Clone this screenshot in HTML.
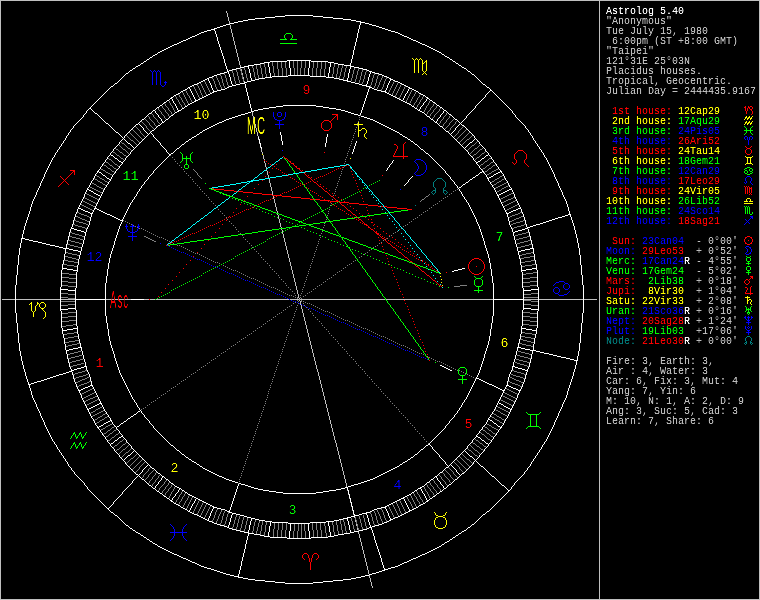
<!DOCTYPE html>
<html lang="en"><head><meta charset="utf-8"><title>Astrolog 5.40 - Anonymous</title>
<style>
html,body{margin:0;padding:0;background:#000;overflow:hidden}
#w{position:relative;width:760px;height:600px;background:#000;overflow:hidden;will-change:transform;font-family:"Liberation Mono",monospace;font-size:10px;line-height:10px;color:#bfbfbf}
#w svg{position:absolute;left:0;top:0}
#tx,#tn{position:absolute;left:0;top:0;width:760px;height:600px}
.t{position:absolute;white-space:pre;height:10px;margin:0}
.n{position:absolute;white-space:pre;font-size:13.33px;line-height:14px;height:14px;text-align:center;width:40px}
.g{position:absolute;white-space:pre;font-family:"Liberation Sans",sans-serif;font-size:24px;line-height:24px;height:24px;width:60px;margin:-11px 0 0 -30px;text-align:center;letter-spacing:2.4px;text-indent:2.4px;transform:scale(0.40,1)}
.c0{color:#000000}.c1{color:#7f0000}.c2{color:#007f00}.c3{color:#7f7f00}.c4{color:#00007f}.c5{color:#7f007f}.c6{color:#007f7f}.c7{color:#bfbfbf}.c8{color:#7f7f7f}.c9{color:#ff0000}.c10{color:#00ff00}.c11{color:#ffff00}.c12{color:#0000ff}.c13{color:#ff00ff}.c14{color:#00ffff}.c15{color:#ffffff}
</style></head><body>
<div id="w">
<svg width="760" height="600" viewBox="0 0 760 600" shape-rendering="crispEdges">
<path fill="#007f7f" d="M437 178h5v1h-5zM433 190h3v1h-3zM443 190h3v1h-3zM747 336h3v1h-3zM745 342h2v1h-2zM750 342h2v1h-2zM415 205h1v1h-1zM431 192h1v1h-1zM432 191h1v1h-1zM432 193h1v1h-1zM433 182h1v5h-1zM433 194h1v1h-1zM434 181h1v1h-1zM434 187h1v1h-1zM434 193h1v1h-1zM435 180h1v1h-1zM435 188h1v2h-1zM435 191h1v2h-1zM436 179h1v1h-1zM442 179h1v1h-1zM443 180h1v1h-1zM443 188h1v2h-1zM443 191h1v2h-1zM444 181h1v1h-1zM444 187h1v1h-1zM444 193h1v1h-1zM445 182h1v5h-1zM445 194h1v1h-1zM446 191h1v1h-1zM446 193h1v1h-1zM447 192h1v1h-1zM744 343h1v1h-1zM745 338h1v3h-1zM745 344h1v1h-1zM746 337h1v1h-1zM746 341h1v1h-1zM746 343h1v1h-1zM750 337h1v1h-1zM750 341h1v1h-1zM750 343h1v1h-1zM751 338h1v3h-1zM751 344h1v1h-1zM752 343h1v1h-1z"/>
<path fill="#bfbfbf" d="M0 0h760v1h-760zM2 299h13v1h-13zM16 299h44v1h-44zM61 299h14v1h-14zM106 299h25v1h-25zM144 299h5v1h-5zM150 299h5v1h-5zM156 299h133v1h-133zM290 299h9v1h-9zM300 299h85v1h-85zM386 299h107v1h-107zM524 299h14v1h-14zM539 299h44v1h-44zM584 299h13v1h-13zM0 599h760v1h-760zM0 1h1v598h-1zM226 11h1v2h-1zM227 13h1v4h-1zM228 17h1v4h-1zM229 21h1v3h-1zM230 25h1v4h-1zM231 29h1v4h-1zM232 33h1v4h-1zM233 37h1v4h-1zM234 41h1v4h-1zM235 45h1v4h-1zM236 49h1v4h-1zM237 53h1v4h-1zM238 57h1v4h-1zM239 61h1v4h-1zM240 65h1v2h-1zM241 69h1v2h-1zM242 73h1v2h-1zM243 77h1v2h-1zM244 81h1v1h-1zM252 112h1v4h-1zM253 116h1v4h-1zM254 120h1v4h-1zM255 124h1v4h-1zM256 128h1v4h-1zM257 132h1v4h-1zM258 136h1v1h-1zM258 139h1v1h-1zM259 143h1v1h-1zM260 147h1v1h-1zM261 149h1v3h-1zM262 152h1v2h-1zM263 155h1v4h-1zM264 159h1v1h-1zM264 161h1v2h-1zM265 163h1v4h-1zM266 167h1v2h-1zM266 170h1v1h-1zM267 171h1v4h-1zM268 175h1v3h-1zM269 179h1v4h-1zM270 183h1v4h-1zM271 187h1v4h-1zM272 191h1v4h-1zM273 196h1v3h-1zM274 199h1v4h-1zM275 203h1v4h-1zM276 207h1v4h-1zM277 211h1v2h-1zM277 214h1v1h-1zM278 215h1v4h-1zM279 219h1v4h-1zM280 223h1v4h-1zM281 227h1v1h-1zM281 229h1v1h-1zM282 230h1v4h-1zM283 234h1v4h-1zM284 238h1v4h-1zM285 242h1v4h-1zM286 246h1v4h-1zM287 250h1v4h-1zM288 254h1v4h-1zM289 258h1v4h-1zM290 262h1v4h-1zM291 266h1v4h-1zM292 270h1v4h-1zM293 274h1v4h-1zM294 278h1v4h-1zM295 282h1v4h-1zM296 286h1v4h-1zM297 290h1v4h-1zM298 294h1v4h-1zM299 298h1v1h-1zM299 300h1v1h-1zM300 301h1v4h-1zM301 305h1v4h-1zM302 309h1v4h-1zM303 313h1v4h-1zM304 317h1v4h-1zM305 321h1v4h-1zM306 325h1v4h-1zM307 329h1v4h-1zM308 333h1v4h-1zM309 337h1v4h-1zM310 341h1v4h-1zM311 345h1v4h-1zM312 349h1v4h-1zM313 353h1v4h-1zM314 357h1v4h-1zM315 361h1v4h-1zM316 365h1v4h-1zM317 369h1v3h-1zM318 372h1v4h-1zM319 376h1v4h-1zM320 380h1v4h-1zM321 384h1v4h-1zM322 388h1v4h-1zM323 392h1v4h-1zM324 396h1v4h-1zM325 400h1v4h-1zM326 404h1v4h-1zM327 408h1v4h-1zM328 412h1v4h-1zM329 416h1v4h-1zM330 420h1v4h-1zM331 424h1v4h-1zM332 428h1v4h-1zM333 432h1v4h-1zM334 436h1v4h-1zM335 440h1v3h-1zM336 443h1v4h-1zM337 447h1v4h-1zM338 451h1v4h-1zM339 455h1v4h-1zM340 459h1v4h-1zM341 463h1v4h-1zM342 467h1v4h-1zM343 471h1v4h-1zM344 475h1v4h-1zM345 479h1v4h-1zM346 483h1v4h-1zM347 490h1v1h-1zM348 494h1v1h-1zM349 498h1v1h-1zM350 502h1v1h-1zM351 506h1v1h-1zM352 510h1v1h-1zM353 514h1v1h-1zM354 517h1v1h-1zM355 520h1v2h-1zM356 524h1v2h-1zM357 528h1v2h-1zM358 532h1v2h-1zM359 534h1v4h-1zM360 538h1v4h-1zM361 542h1v4h-1zM362 546h1v4h-1zM363 550h1v4h-1zM364 554h1v4h-1zM365 558h1v4h-1zM366 562h1v4h-1zM367 566h1v4h-1zM368 570h1v4h-1zM369 575h1v3h-1zM370 578h1v4h-1zM371 582h1v4h-1zM372 586h1v2h-1zM599 1h1v598h-1zM759 1h1v598h-1z"/>
<path fill="#7f7f7f" d="M467 139h2v1h-2zM131 140h2v1h-2zM122 143h2v1h-2zM472 145h2v1h-2zM128 148h2v1h-2zM475 148h2v1h-2zM116 149h2v1h-2zM123 149h2v1h-2zM480 149h2v1h-2zM113 152h2v1h-2zM120 152h2v1h-2zM482 153h2v1h-2zM474 154h2v1h-2zM117 155h2v1h-2zM124 155h2v1h-2zM477 157h2v1h-2zM121 158h2v1h-2zM489 158h2v1h-2zM109 159h2v1h-2zM485 161h2v1h-2zM106 162h2v1h-2zM491 162h2v1h-2zM115 164h2v1h-2zM481 164h2v1h-2zM104 165h2v1h-2zM110 165h2v1h-2zM487 165h2v1h-2zM493 165h2v1h-2zM108 168h2v1h-2zM114 168h2v1h-2zM483 168h2v1h-2zM489 168h2v1h-2zM101 169h2v1h-2zM496 169h2v1h-2zM103 170h2v1h-2zM494 170h2v1h-2zM112 171h2v1h-2zM485 171h2v1h-2zM492 171h2v1h-2zM106 172h2v1h-2zM108 173h2v1h-2zM489 173h2v1h-2zM110 174h2v1h-2zM487 174h2v1h-2zM97 176h2v1h-2zM500 176h2v1h-2zM100 178h2v1h-2zM497 178h2v1h-2zM95 179h2v1h-2zM102 179h2v1h-2zM495 179h2v1h-2zM502 179h2v1h-2zM98 181h2v1h-2zM105 181h2v1h-2zM492 181h2v1h-2zM499 181h2v1h-2zM100 182h2v1h-2zM497 182h2v1h-2zM92 183h2v1h-2zM504 183h2v1h-2zM94 184h2v1h-2zM103 184h2v1h-2zM494 184h2v1h-2zM502 184h2v1h-2zM500 185h2v1h-2zM97 186h2v1h-2zM498 186h2v1h-2zM506 186h2v1h-2zM90 187h2v1h-2zM99 187h2v1h-2zM496 187h2v1h-2zM504 187h2v1h-2zM92 188h2v1h-2zM101 188h2v1h-2zM502 188h2v1h-2zM94 189h2v1h-2zM96 190h2v1h-2zM499 190h2v1h-2zM98 191h2v1h-2zM497 191h2v1h-2zM100 192h2v1h-2zM511 193h2v1h-2zM87 194h2v1h-2zM509 194h2v1h-2zM89 195h2v1h-2zM507 195h2v1h-2zM91 196h2v1h-2zM426 196h2v1h-2zM505 196h2v1h-2zM93 197h2v1h-2zM503 197h2v1h-2zM513 197h2v1h-2zM85 198h2v1h-2zM95 198h2v1h-2zM501 198h2v1h-2zM511 198h2v1h-2zM87 199h2v1h-2zM97 199h2v1h-2zM422 199h2v1h-2zM508 199h3v1h-3zM89 200h2v1h-2zM506 200h2v1h-2zM83 201h2v1h-2zM91 201h2v1h-2zM504 201h2v1h-2zM513 201h2v1h-2zM85 202h2v1h-2zM93 202h2v1h-2zM502 202h2v1h-2zM511 202h2v1h-2zM87 203h2v1h-2zM95 203h2v1h-2zM509 203h2v1h-2zM89 204h2v1h-2zM507 204h2v1h-2zM82 205h2v1h-2zM91 205h2v1h-2zM505 205h2v1h-2zM515 205h2v1h-2zM84 206h2v1h-2zM93 206h2v1h-2zM513 206h2v1h-2zM86 207h2v1h-2zM511 207h2v1h-2zM88 208h2v1h-2zM509 208h2v1h-2zM90 209h2v1h-2zM507 209h2v1h-2zM77 212h2v1h-2zM520 212h2v1h-2zM79 213h2v1h-2zM518 213h2v1h-2zM81 214h3v1h-3zM515 214h3v1h-3zM84 215h3v1h-3zM512 215h3v1h-3zM76 216h2v1h-2zM87 216h2v1h-2zM510 216h2v1h-2zM521 216h2v1h-2zM78 217h2v1h-2zM519 217h2v1h-2zM80 218h2v1h-2zM516 218h3v1h-3zM82 219h3v1h-3zM514 219h2v1h-2zM74 220h2v1h-2zM85 220h2v1h-2zM512 220h2v1h-2zM523 220h2v1h-2zM76 221h3v1h-3zM87 221h2v1h-2zM510 221h2v1h-2zM520 221h3v1h-3zM79 222h4v1h-4zM516 222h4v1h-4zM83 223h3v1h-3zM513 223h3v1h-3zM73 224h2v1h-2zM86 224h2v1h-2zM511 224h2v1h-2zM524 224h2v1h-2zM75 225h3v1h-3zM521 225h3v1h-3zM78 226h4v1h-4zM517 226h4v1h-4zM82 227h3v1h-3zM514 227h3v1h-3zM85 228h2v1h-2zM512 228h2v1h-2zM70 232h2v1h-2zM526 232h3v1h-3zM72 233h3v1h-3zM522 233h4v1h-4zM75 234h4v1h-4zM518 234h4v1h-4zM79 235h3v1h-3zM515 235h3v1h-3zM69 236h3v1h-3zM82 236h2v1h-2zM144 236h2v1h-2zM527 236h3v1h-3zM72 237h4v1h-4zM146 237h2v1h-2zM523 237h4v1h-4zM76 238h4v1h-4zM148 238h2v1h-2zM519 238h4v1h-4zM80 239h3v1h-3zM150 239h2v1h-2zM516 239h3v1h-3zM68 240h3v1h-3zM152 240h2v1h-2zM528 240h3v1h-3zM71 241h4v1h-4zM154 241h2v1h-2zM524 241h4v1h-4zM75 242h4v1h-4zM520 242h4v1h-4zM79 243h3v1h-3zM517 243h3v1h-3zM67 244h3v1h-3zM529 244h3v1h-3zM70 245h4v1h-4zM525 245h4v1h-4zM74 246h4v1h-4zM521 246h4v1h-4zM78 247h3v1h-3zM518 247h3v1h-3zM66 252h2v1h-2zM531 252h2v1h-2zM68 253h4v1h-4zM526 253h5v1h-5zM72 254h5v1h-5zM522 254h4v1h-4zM77 255h2v1h-2zM520 255h2v1h-2zM65 256h3v1h-3zM530 256h4v1h-4zM68 257h4v1h-4zM524 257h6v1h-6zM72 258h4v1h-4zM520 258h4v1h-4zM76 259h2v1h-2zM64 260h4v1h-4zM531 260h4v1h-4zM68 261h6v1h-6zM525 261h6v1h-6zM74 262h4v1h-4zM521 262h4v1h-4zM63 264h4v1h-4zM532 264h4v1h-4zM67 265h7v1h-7zM525 265h7v1h-7zM74 266h3v1h-3zM522 266h3v1h-3zM533 272h4v1h-4zM62 273h7v1h-7zM526 273h7v1h-7zM69 274h7v1h-7zM523 274h3v1h-3zM62 277h7v1h-7zM530 277h7v1h-7zM69 278h7v1h-7zM523 278h7v1h-7zM62 281h6v1h-6zM530 281h7v1h-7zM68 282h8v1h-8zM523 282h7v1h-7zM62 285h6v1h-6zM460 285h7v1h-7zM530 285h7v1h-7zM68 286h8v1h-8zM454 286h6v1h-6zM523 286h7v1h-7zM61 293h7v1h-7zM531 293h7v1h-7zM68 294h7v1h-7zM524 294h7v1h-7zM61 297h7v1h-7zM524 297h14v1h-14zM68 298h7v1h-7zM524 300h7v1h-7zM61 301h14v1h-14zM531 301h7v1h-7zM68 304h7v1h-7zM524 304h7v1h-7zM61 305h7v1h-7zM531 305h7v1h-7zM68 312h8v1h-8zM523 312h7v1h-7zM62 313h6v1h-6zM530 313h7v1h-7zM68 316h8v1h-8zM523 316h7v1h-7zM62 317h6v1h-6zM530 317h7v1h-7zM69 320h7v1h-7zM523 320h7v1h-7zM62 321h7v1h-7zM530 321h7v1h-7zM73 324h3v1h-3zM523 324h6v1h-6zM66 325h7v1h-7zM529 325h8v1h-8zM62 326h4v1h-4zM74 332h3v1h-3zM522 332h3v1h-3zM67 333h7v1h-7zM525 333h7v1h-7zM64 334h3v1h-3zM532 334h3v1h-3zM74 336h4v1h-4zM521 336h4v1h-4zM68 337h6v1h-6zM525 337h6v1h-6zM65 338h3v1h-3zM531 338h3v1h-3zM520 339h3v1h-3zM75 340h4v1h-4zM523 340h4v1h-4zM69 341h6v1h-6zM527 341h4v1h-4zM65 342h4v1h-4zM531 342h3v1h-3zM77 343h3v1h-3zM519 343h3v1h-3zM72 344h5v1h-5zM522 344h4v1h-4zM68 345h4v1h-4zM526 345h5v1h-5zM66 346h2v1h-2zM531 346h2v1h-2zM78 351h3v1h-3zM518 351h3v1h-3zM74 352h4v1h-4zM521 352h4v1h-4zM70 353h4v1h-4zM525 353h4v1h-4zM68 354h2v1h-2zM529 354h2v1h-2zM79 355h3v1h-3zM517 355h3v1h-3zM75 356h4v1h-4zM520 356h4v1h-4zM71 357h4v1h-4zM524 357h4v1h-4zM68 358h3v1h-3zM528 358h3v1h-3zM80 359h3v1h-3zM516 359h3v1h-3zM76 360h4v1h-4zM519 360h4v1h-4zM72 361h4v1h-4zM523 361h4v1h-4zM69 362h3v1h-3zM515 362h2v1h-2zM527 362h3v1h-3zM81 363h3v1h-3zM517 363h3v1h-3zM77 364h4v1h-4zM520 364h4v1h-4zM73 365h4v1h-4zM524 365h3v1h-3zM70 366h3v1h-3zM527 366h2v1h-2zM85 370h2v1h-2zM512 370h2v1h-2zM82 371h3v1h-3zM514 371h3v1h-3zM78 372h4v1h-4zM517 372h4v1h-4zM75 373h3v1h-3zM521 373h3v1h-3zM73 374h2v1h-2zM86 374h2v1h-2zM511 374h2v1h-2zM524 374h2v1h-2zM83 375h3v1h-3zM513 375h3v1h-3zM79 376h4v1h-4zM516 376h4v1h-4zM76 377h3v1h-3zM87 377h2v1h-2zM510 377h2v1h-2zM520 377h3v1h-3zM74 378h2v1h-2zM85 378h2v1h-2zM512 378h2v1h-2zM523 378h2v1h-2zM82 379h3v1h-3zM514 379h2v1h-2zM80 380h2v1h-2zM516 380h3v1h-3zM78 381h2v1h-2zM89 381h2v1h-2zM508 381h2v1h-2zM519 381h2v1h-2zM76 382h2v1h-2zM87 382h2v1h-2zM510 382h2v1h-2zM521 382h2v1h-2zM84 383h3v1h-3zM512 383h3v1h-3zM81 384h3v1h-3zM515 384h3v1h-3zM79 385h2v1h-2zM518 385h2v1h-2zM77 386h2v1h-2zM520 386h2v1h-2zM90 389h2v1h-2zM507 389h2v1h-2zM88 390h2v1h-2zM509 390h2v1h-2zM86 391h2v1h-2zM511 391h2v1h-2zM84 392h2v1h-2zM513 392h2v1h-2zM82 393h2v1h-2zM92 393h2v1h-2zM505 393h2v1h-2zM515 393h2v1h-2zM90 394h2v1h-2zM507 394h2v1h-2zM88 395h2v1h-2zM509 395h2v1h-2zM86 396h2v1h-2zM95 396h2v1h-2zM503 396h2v1h-2zM511 396h2v1h-2zM84 397h2v1h-2zM93 397h2v1h-2zM505 397h2v1h-2zM513 397h2v1h-2zM90 398h3v1h-3zM507 398h2v1h-2zM88 399h2v1h-2zM97 399h2v1h-2zM509 399h2v1h-2zM86 400h2v1h-2zM95 400h2v1h-2zM501 400h2v1h-2zM511 400h2v1h-2zM84 401h2v1h-2zM93 401h2v1h-2zM503 401h2v1h-2zM513 401h2v1h-2zM91 402h2v1h-2zM505 402h2v1h-2zM89 403h2v1h-2zM507 403h2v1h-2zM87 404h2v1h-2zM509 404h2v1h-2zM511 405h2v1h-2zM100 407h2v1h-2zM498 407h2v1h-2zM98 408h2v1h-2zM500 408h2v1h-2zM96 409h2v1h-2zM502 409h2v1h-2zM496 410h2v1h-2zM504 410h2v1h-2zM93 411h2v1h-2zM101 411h2v1h-2zM498 411h2v1h-2zM506 411h2v1h-2zM91 412h2v1h-2zM99 412h2v1h-2zM97 413h2v1h-2zM501 413h2v1h-2zM95 414h2v1h-2zM103 414h2v1h-2zM494 414h2v1h-2zM503 414h2v1h-2zM93 415h2v1h-2zM505 415h2v1h-2zM100 416h2v1h-2zM497 416h2v1h-2zM98 417h2v1h-2zM105 417h2v1h-2zM492 417h2v1h-2zM499 417h2v1h-2zM95 419h2v1h-2zM102 419h2v1h-2zM495 419h2v1h-2zM502 419h2v1h-2zM100 420h2v1h-2zM497 420h2v1h-2zM97 422h2v1h-2zM500 422h2v1h-2zM110 424h2v1h-2zM487 424h2v1h-2zM108 425h2v1h-2zM489 425h2v1h-2zM106 426h2v1h-2zM112 427h2v1h-2zM485 427h2v1h-2zM492 427h2v1h-2zM103 428h2v1h-2zM494 428h2v1h-2zM101 429h2v1h-2zM496 429h2v1h-2zM108 430h2v1h-2zM114 430h2v1h-2zM483 430h2v1h-2zM489 430h2v1h-2zM104 433h2v1h-2zM110 433h2v1h-2zM487 433h2v1h-2zM493 433h2v1h-2zM116 434h2v1h-2zM482 434h2v1h-2zM106 436h2v1h-2zM491 436h2v1h-2zM112 437h2v1h-2zM488 439h2v1h-2zM108 440h2v1h-2zM476 440h2v1h-2zM120 441h2v1h-2zM473 443h2v1h-2zM480 443h2v1h-2zM123 444h2v1h-2zM115 445h2v1h-2zM477 446h2v1h-2zM484 446h2v1h-2zM117 449h2v1h-2zM123 449h2v1h-2zM481 449h2v1h-2zM469 450h2v1h-2zM475 450h2v1h-2zM126 452h2v1h-2zM475 455h2v1h-2zM131 458h2v1h-2zM467 459h2v1h-2zM81 204h1v1h-1zM81 394h1v1h-1zM83 398h1v1h-1zM84 197h1v1h-1zM86 193h1v1h-1zM86 405h1v1h-1zM89 217h1v1h-1zM90 413h1v1h-1zM92 210h1v1h-1zM92 388h1v1h-1zM92 416h1v1h-1zM94 178h1v1h-1zM94 392h1v1h-1zM94 420h1v1h-1zM95 410h1v1h-1zM96 175h1v1h-1zM96 185h1v1h-1zM96 423h1v1h-1zM97 180h1v1h-1zM97 418h1v1h-1zM99 177h1v1h-1zM99 421h1v1h-1zM102 183h1v1h-1zM102 415h1v1h-1zM103 164h1v1h-1zM103 189h1v1h-1zM103 410h1v1h-1zM103 434h1v1h-1zM104 180h1v1h-1zM104 418h1v1h-1zM105 171h1v1h-1zM105 185h1v1h-1zM105 413h1v1h-1zM105 427h1v1h-1zM106 166h1v1h-1zM106 432h1v1h-1zM107 167h1v1h-1zM107 182h1v1h-1zM107 416h1v1h-1zM107 431h1v1h-1zM108 158h1v1h-1zM108 163h1v1h-1zM108 435h1v1h-1zM109 164h1v1h-1zM109 434h1v1h-1zM110 169h1v1h-1zM110 429h1v1h-1zM110 439h1v1h-1zM111 160h1v1h-1zM111 170h1v1h-1zM111 428h1v1h-1zM111 438h1v1h-1zM112 161h1v1h-1zM112 166h1v1h-1zM112 432h1v1h-1zM113 162h1v1h-1zM113 167h1v1h-1zM113 431h1v1h-1zM113 447h1v1h-1zM114 163h1v1h-1zM114 172h1v1h-1zM114 426h1v1h-1zM114 436h1v1h-1zM114 446h1v1h-1zM115 148h1v1h-1zM115 153h1v1h-1zM115 435h1v1h-1zM116 154h1v1h-1zM116 169h1v1h-1zM116 429h1v1h-1zM116 450h1v1h-1zM117 165h1v1h-1zM117 444h1v1h-1zM118 150h1v1h-1zM118 166h1v1h-1zM118 433h1v1h-1zM118 443h1v1h-1zM119 145h1v1h-1zM119 151h1v1h-1zM119 156h1v1h-1zM119 442h1v1h-1zM119 448h1v1h-1zM119 453h1v1h-1zM120 146h1v1h-1zM120 157h1v1h-1zM120 447h1v1h-1zM120 452h1v1h-1zM121 142h1v1h-1zM121 147h1v1h-1zM121 446h1v1h-1zM121 451h1v1h-1zM121 457h1v1h-1zM122 148h1v1h-1zM122 153h1v1h-1zM122 440h1v1h-1zM122 445h1v1h-1zM122 450h1v1h-1zM122 456h1v1h-1zM123 154h1v1h-1zM123 159h1v1h-1zM123 220h1v1h-1zM123 439h1v1h-1zM123 455h1v1h-1zM124 144h1v1h-1zM124 454h1v1h-1zM125 145h1v1h-1zM125 150h1v1h-1zM125 221h1v1h-1zM125 443h1v1h-1zM125 448h1v1h-1zM125 453h1v1h-1zM126 135h1v1h-1zM126 146h1v1h-1zM126 151h1v1h-1zM126 156h1v1h-1zM126 442h1v1h-1zM126 447h1v1h-1zM126 463h1v1h-1zM127 136h1v1h-1zM127 147h1v1h-1zM127 152h1v1h-1zM127 222h1v1h-1zM127 446h1v1h-1zM127 462h1v1h-1zM128 137h1v1h-1zM128 153h1v1h-1zM128 445h1v1h-1zM128 451h1v1h-1zM128 461h1v1h-1zM129 132h1v1h-1zM129 138h1v1h-1zM129 223h1v1h-1zM129 450h1v1h-1zM129 460h1v1h-1zM129 466h1v1h-1zM130 133h1v1h-1zM130 139h1v1h-1zM130 149h1v1h-1zM130 449h1v1h-1zM130 459h1v1h-1zM130 465h1v1h-1zM131 134h1v1h-1zM131 150h1v1h-1zM131 224h1v1h-1zM131 448h1v1h-1zM131 464h1v1h-1zM132 129h1v1h-1zM132 135h1v1h-1zM132 463h1v1h-1zM132 469h1v1h-1zM133 130h1v1h-1zM133 136h1v1h-1zM133 141h1v1h-1zM133 225h1v1h-1zM133 457h1v1h-1zM133 462h1v1h-1zM133 468h1v1h-1zM134 131h1v1h-1zM134 137h1v1h-1zM134 142h1v1h-1zM134 456h1v1h-1zM134 461h1v1h-1zM134 467h1v1h-1zM135 126h1v1h-1zM135 132h1v1h-1zM135 138h1v1h-1zM135 143h1v1h-1zM135 226h1v1h-1zM135 455h1v1h-1zM135 460h1v1h-1zM135 466h1v1h-1zM135 472h1v1h-1zM136 127h1v1h-1zM136 133h1v1h-1zM136 139h1v1h-1zM136 144h1v1h-1zM136 454h1v1h-1zM136 459h1v1h-1zM136 465h1v1h-1zM136 471h1v1h-1zM137 128h1v1h-1zM137 134h1v1h-1zM137 140h1v1h-1zM137 227h1v1h-1zM137 458h1v1h-1zM137 464h1v1h-1zM137 470h1v1h-1zM138 129h1v1h-1zM138 135h1v1h-1zM138 141h1v1h-1zM138 457h1v1h-1zM138 463h1v1h-1zM138 469h1v1h-1zM139 130h1v1h-1zM139 136h1v1h-1zM139 142h1v1h-1zM139 228h1v1h-1zM139 456h1v1h-1zM139 462h1v1h-1zM139 467h1v2h-1zM140 131h1v2h-1zM140 137h1v1h-1zM140 461h1v1h-1zM140 466h1v1h-1zM141 121h1v1h-1zM141 133h1v1h-1zM141 138h1v1h-1zM141 228h1v1h-1zM141 409h1v1h-1zM141 460h1v1h-1zM141 465h1v1h-1zM142 122h1v1h-1zM142 134h1v1h-1zM142 139h1v1h-1zM142 459h1v1h-1zM142 464h1v1h-1zM142 477h1v1h-1zM143 123h1v1h-1zM143 135h1v1h-1zM143 229h1v1h-1zM143 408h1v1h-1zM143 463h1v1h-1zM143 475h1v2h-1zM144 124h1v1h-1zM144 136h1v1h-1zM144 462h1v1h-1zM144 474h1v1h-1zM145 119h1v1h-1zM145 125h1v1h-1zM145 230h1v1h-1zM145 407h1v1h-1zM145 473h1v1h-1zM145 479h1v1h-1zM146 120h1v1h-1zM146 126h1v2h-1zM146 472h1v1h-1zM146 478h1v1h-1zM147 121h1v1h-1zM147 128h1v1h-1zM147 231h1v1h-1zM147 405h1v1h-1zM147 471h1v1h-1zM147 477h1v1h-1zM148 116h1v1h-1zM148 122h1v1h-1zM148 129h1v1h-1zM148 469h1v2h-1zM148 475h1v2h-1zM148 483h1v1h-1zM149 117h1v2h-1zM149 123h1v2h-1zM149 130h1v1h-1zM149 232h1v1h-1zM149 404h1v1h-1zM149 468h1v1h-1zM149 474h1v1h-1zM149 481h1v2h-1zM150 119h1v1h-1zM150 125h1v1h-1zM150 131h1v1h-1zM150 467h1v1h-1zM150 473h1v1h-1zM150 480h1v1h-1zM151 113h1v1h-1zM151 120h1v1h-1zM151 126h1v1h-1zM151 233h1v1h-1zM151 402h1v1h-1zM151 472h1v1h-1zM151 479h1v1h-1zM152 114h1v1h-1zM152 121h1v1h-1zM152 127h1v1h-1zM152 471h1v1h-1zM152 477h1v2h-1zM152 484h1v2h-1zM153 115h1v2h-1zM153 122h1v1h-1zM153 128h1v1h-1zM153 234h1v1h-1zM153 401h1v1h-1zM153 470h1v1h-1zM153 476h1v1h-1zM153 483h1v1h-1zM154 117h1v1h-1zM154 123h1v2h-1zM154 475h1v1h-1zM154 482h1v1h-1zM155 118h1v1h-1zM155 125h1v1h-1zM155 235h1v1h-1zM155 400h1v1h-1zM155 473h1v2h-1zM155 480h1v2h-1zM156 119h1v1h-1zM156 126h1v1h-1zM156 472h1v1h-1zM156 479h1v1h-1zM157 120h1v2h-1zM157 236h1v1h-1zM157 398h1v1h-1zM157 478h1v1h-1zM158 108h1v2h-1zM158 122h1v1h-1zM158 476h1v2h-1zM158 490h1v1h-1zM159 110h1v1h-1zM159 123h1v1h-1zM159 237h1v1h-1zM159 397h1v1h-1zM159 475h1v1h-1zM159 488h1v2h-1zM160 111h1v1h-1zM160 487h1v1h-1zM161 112h1v2h-1zM161 237h1v1h-1zM161 395h1v1h-1zM161 486h1v1h-1zM162 106h1v2h-1zM162 114h1v1h-1zM162 485h1v1h-1zM162 491h1v2h-1zM163 108h1v1h-1zM163 115h1v1h-1zM163 238h1v1h-1zM163 394h1v1h-1zM163 484h1v1h-1zM163 490h1v1h-1zM164 103h1v1h-1zM164 109h1v1h-1zM164 116h1v2h-1zM164 482h1v2h-1zM164 489h1v1h-1zM164 495h1v1h-1zM165 104h1v2h-1zM165 110h1v2h-1zM165 118h1v1h-1zM165 239h1v1h-1zM165 393h1v1h-1zM165 481h1v1h-1zM165 487h1v2h-1zM165 493h1v2h-1zM166 106h1v1h-1zM166 112h1v1h-1zM166 480h1v1h-1zM166 486h1v1h-1zM166 492h1v1h-1zM167 107h1v1h-1zM167 113h1v1h-1zM167 240h1v1h-1zM167 391h1v1h-1zM167 485h1v1h-1zM167 491h1v1h-1zM168 108h1v2h-1zM168 114h1v2h-1zM168 483h1v2h-1zM168 489h1v2h-1zM169 101h1v2h-1zM169 110h1v1h-1zM169 116h1v1h-1zM169 241h1v1h-1zM169 390h1v1h-1zM169 482h1v1h-1zM169 488h1v1h-1zM169 496h1v2h-1zM170 103h1v2h-1zM170 111h1v1h-1zM170 155h1v1h-1zM170 487h1v1h-1zM170 494h1v2h-1zM171 105h1v1h-1zM171 112h1v2h-1zM171 242h1v1h-1zM171 388h1v1h-1zM171 485h1v2h-1zM171 492h1v2h-1zM172 106h1v2h-1zM172 114h1v1h-1zM172 157h1v1h-1zM172 484h1v1h-1zM172 491h1v1h-1zM173 108h1v2h-1zM173 243h1v1h-1zM173 387h1v1h-1zM173 489h1v2h-1zM174 110h1v2h-1zM174 159h1v1h-1zM174 487h1v2h-1zM175 96h1v1h-1zM175 161h1v1h-1zM175 386h1v1h-1zM175 502h1v1h-1zM176 97h1v2h-1zM176 500h1v2h-1zM177 99h1v1h-1zM177 163h1v1h-1zM177 245h1v1h-1zM177 384h1v1h-1zM177 499h1v1h-1zM178 94h1v1h-1zM178 100h1v2h-1zM178 497h1v2h-1zM178 504h1v1h-1zM179 95h1v2h-1zM179 102h1v2h-1zM179 165h1v1h-1zM179 245h1v1h-1zM179 383h1v1h-1zM179 495h1v2h-1zM179 502h1v2h-1zM180 97h1v1h-1zM180 104h1v1h-1zM180 494h1v1h-1zM180 501h1v1h-1zM181 98h1v2h-1zM181 105h1v2h-1zM181 167h1v1h-1zM181 246h1v1h-1zM181 381h1v1h-1zM181 492h1v2h-1zM181 499h1v2h-1zM182 92h1v1h-1zM182 100h1v2h-1zM182 107h1v1h-1zM182 491h1v1h-1zM182 497h1v2h-1zM183 93h1v2h-1zM183 102h1v1h-1zM183 169h1v1h-1zM183 247h1v1h-1zM183 380h1v1h-1zM183 496h1v1h-1zM183 505h1v2h-1zM184 95h1v2h-1zM184 103h1v2h-1zM184 171h1v1h-1zM184 494h1v2h-1zM184 503h1v2h-1zM185 90h1v1h-1zM185 97h1v2h-1zM185 105h1v1h-1zM185 248h1v1h-1zM185 379h1v1h-1zM185 493h1v1h-1zM185 501h1v2h-1zM186 91h1v2h-1zM186 99h1v2h-1zM186 173h1v1h-1zM186 500h1v1h-1zM186 508h1v1h-1zM187 93h1v2h-1zM187 101h1v2h-1zM187 249h1v1h-1zM187 377h1v1h-1zM187 498h1v2h-1zM187 506h1v2h-1zM188 95h1v1h-1zM188 103h1v1h-1zM188 175h1v1h-1zM188 496h1v2h-1zM188 504h1v2h-1zM189 96h1v2h-1zM189 250h1v1h-1zM189 376h1v1h-1zM189 495h1v1h-1zM189 502h1v2h-1zM190 98h1v2h-1zM190 177h1v1h-1zM190 500h1v2h-1zM191 100h1v2h-1zM191 251h1v1h-1zM191 374h1v1h-1zM191 498h1v2h-1zM192 179h1v1h-1zM192 497h1v1h-1zM193 86h1v1h-1zM193 169h1v1h-1zM193 181h1v1h-1zM193 252h1v1h-1zM193 373h1v1h-1zM193 511h1v2h-1zM194 87h1v2h-1zM194 170h1v1h-1zM194 509h1v2h-1zM195 89h1v2h-1zM195 171h1v1h-1zM195 183h1v1h-1zM195 253h1v1h-1zM195 372h1v1h-1zM195 507h1v2h-1zM196 91h1v2h-1zM196 172h1v1h-1zM196 505h1v2h-1zM197 84h1v2h-1zM197 93h1v2h-1zM197 173h1v2h-1zM197 185h1v1h-1zM197 253h1v1h-1zM197 370h1v1h-1zM197 503h1v2h-1zM197 513h1v2h-1zM198 86h1v2h-1zM198 95h1v2h-1zM198 175h1v1h-1zM198 501h1v2h-1zM198 511h1v2h-1zM199 88h1v2h-1zM199 97h1v2h-1zM199 176h1v1h-1zM199 187h1v1h-1zM199 254h1v1h-1zM199 369h1v1h-1zM199 500h1v1h-1zM199 509h1v2h-1zM200 83h1v1h-1zM200 90h1v3h-1zM200 177h1v1h-1zM200 189h1v1h-1zM200 507h1v2h-1zM200 515h1v1h-1zM201 84h1v2h-1zM201 93h1v2h-1zM201 178h1v1h-1zM201 255h1v1h-1zM201 367h1v1h-1zM201 505h1v2h-1zM201 513h1v2h-1zM202 86h1v2h-1zM202 95h1v2h-1zM202 191h1v1h-1zM202 503h1v2h-1zM202 511h1v2h-1zM203 88h1v2h-1zM203 256h1v1h-1zM203 366h1v1h-1zM203 502h1v1h-1zM203 509h1v2h-1zM204 81h1v1h-1zM204 90h1v2h-1zM204 193h1v1h-1zM204 507h1v2h-1zM204 517h1v1h-1zM205 82h1v2h-1zM205 92h1v2h-1zM205 257h1v1h-1zM205 365h1v1h-1zM205 505h1v2h-1zM205 515h1v2h-1zM206 84h1v2h-1zM206 94h1v1h-1zM206 195h1v1h-1zM206 504h1v1h-1zM206 513h1v2h-1zM207 86h1v2h-1zM207 258h1v1h-1zM207 363h1v1h-1zM207 511h1v2h-1zM208 88h1v2h-1zM208 197h1v1h-1zM208 509h1v2h-1zM209 90h1v2h-1zM209 199h1v1h-1zM209 259h1v1h-1zM209 362h1v1h-1zM209 507h1v2h-1zM210 92h1v1h-1zM210 506h1v1h-1zM211 201h1v1h-1zM211 260h1v1h-1zM211 360h1v1h-1zM212 77h1v2h-1zM212 520h1v2h-1zM213 79h1v2h-1zM213 203h1v1h-1zM213 261h1v1h-1zM213 359h1v1h-1zM213 518h1v2h-1zM214 81h1v3h-1zM214 515h1v3h-1zM215 84h1v3h-1zM215 205h1v1h-1zM215 262h1v1h-1zM215 358h1v1h-1zM215 512h1v3h-1zM216 76h1v2h-1zM216 87h1v2h-1zM216 510h1v2h-1zM216 521h1v2h-1zM217 78h1v2h-1zM217 89h1v1h-1zM217 207h1v1h-1zM217 262h1v1h-1zM217 356h1v1h-1zM217 509h1v1h-1zM217 519h1v2h-1zM218 80h1v2h-1zM218 209h1v1h-1zM218 516h1v3h-1zM219 82h1v3h-1zM219 263h1v1h-1zM219 355h1v1h-1zM219 514h1v2h-1zM220 74h1v2h-1zM220 85h1v2h-1zM220 211h1v1h-1zM220 512h1v2h-1zM220 523h1v2h-1zM221 76h1v3h-1zM221 87h1v2h-1zM221 353h1v1h-1zM221 510h1v2h-1zM221 520h1v3h-1zM222 79h1v4h-1zM222 213h1v1h-1zM222 516h1v4h-1zM223 83h1v3h-1zM223 265h1v1h-1zM223 352h1v1h-1zM223 513h1v3h-1zM224 73h1v2h-1zM224 86h1v2h-1zM224 215h1v1h-1zM224 511h1v2h-1zM224 524h1v2h-1zM225 75h1v3h-1zM225 266h1v1h-1zM225 351h1v1h-1zM225 521h1v3h-1zM226 78h1v4h-1zM226 217h1v1h-1zM226 517h1v4h-1zM227 82h1v3h-1zM227 219h1v1h-1zM227 267h1v1h-1zM227 349h1v1h-1zM227 514h1v3h-1zM228 85h1v2h-1zM228 512h1v2h-1zM229 221h1v1h-1zM229 268h1v1h-1zM229 348h1v1h-1zM231 223h1v1h-1zM231 269h1v1h-1zM231 346h1v1h-1zM232 70h1v3h-1zM232 527h1v2h-1zM233 73h1v4h-1zM233 225h1v1h-1zM233 270h1v1h-1zM233 345h1v1h-1zM233 524h1v3h-1zM234 77h1v4h-1zM234 520h1v4h-1zM235 81h1v3h-1zM235 227h1v1h-1zM235 270h1v1h-1zM235 344h1v1h-1zM235 517h1v3h-1zM236 69h1v3h-1zM236 229h1v1h-1zM236 515h1v2h-1zM236 527h1v3h-1zM237 72h1v4h-1zM237 271h1v1h-1zM237 342h1v1h-1zM237 523h1v4h-1zM238 76h1v4h-1zM238 231h1v1h-1zM238 483h1v1h-1zM238 519h1v4h-1zM239 80h1v3h-1zM239 272h1v1h-1zM239 341h1v1h-1zM239 479h1v1h-1zM239 481h1v1h-1zM239 516h1v3h-1zM240 68h1v3h-1zM240 233h1v1h-1zM240 477h1v1h-1zM240 528h1v3h-1zM241 71h1v4h-1zM241 273h1v1h-1zM241 339h1v1h-1zM241 473h1v1h-1zM241 475h1v1h-1zM241 524h1v4h-1zM242 75h1v4h-1zM242 235h1v1h-1zM242 471h1v1h-1zM242 520h1v4h-1zM243 79h1v3h-1zM243 237h1v1h-1zM243 274h1v1h-1zM243 338h1v1h-1zM243 467h1v1h-1zM243 469h1v1h-1zM243 517h1v3h-1zM244 67h1v3h-1zM244 465h1v1h-1zM244 529h1v3h-1zM245 70h1v4h-1zM245 239h1v1h-1zM245 275h1v1h-1zM245 337h1v1h-1zM245 461h1v1h-1zM245 463h1v1h-1zM245 525h1v4h-1zM246 74h1v4h-1zM246 459h1v1h-1zM246 521h1v4h-1zM247 78h1v3h-1zM247 241h1v1h-1zM247 276h1v1h-1zM247 335h1v1h-1zM247 455h1v1h-1zM247 457h1v1h-1zM247 518h1v3h-1zM248 453h1v1h-1zM249 243h1v1h-1zM249 277h1v1h-1zM249 334h1v1h-1zM249 449h1v1h-1zM249 451h1v1h-1zM250 447h1v1h-1zM251 245h1v1h-1zM251 278h1v1h-1zM251 333h1v1h-1zM251 443h1v1h-1zM251 445h1v1h-1zM252 66h1v2h-1zM252 247h1v1h-1zM252 441h1v1h-1zM252 531h1v2h-1zM253 68h1v4h-1zM253 278h1v1h-1zM253 331h1v1h-1zM253 437h1v1h-1zM253 439h1v1h-1zM253 526h1v5h-1zM254 72h1v5h-1zM254 249h1v1h-1zM254 435h1v1h-1zM254 522h1v4h-1zM255 77h1v2h-1zM255 279h1v1h-1zM255 330h1v1h-1zM255 431h1v1h-1zM255 433h1v1h-1zM255 520h1v2h-1zM256 65h1v4h-1zM256 251h1v1h-1zM256 429h1v1h-1zM256 531h1v3h-1zM257 69h1v6h-1zM257 280h1v1h-1zM257 328h1v1h-1zM257 425h1v1h-1zM257 427h1v1h-1zM257 527h1v4h-1zM258 75h1v4h-1zM258 253h1v1h-1zM258 423h1v1h-1zM258 523h1v4h-1zM259 281h1v1h-1zM259 327h1v1h-1zM259 419h1v1h-1zM259 421h1v1h-1zM259 521h1v2h-1zM260 64h1v4h-1zM260 255h1v1h-1zM260 417h1v1h-1zM260 531h1v4h-1zM261 68h1v6h-1zM261 257h1v1h-1zM261 282h1v1h-1zM261 326h1v1h-1zM261 413h1v1h-1zM261 415h1v1h-1zM261 525h1v6h-1zM262 74h1v4h-1zM262 411h1v1h-1zM262 521h1v4h-1zM263 259h1v1h-1zM263 283h1v1h-1zM263 324h1v1h-1zM263 407h1v1h-1zM263 409h1v1h-1zM264 63h1v4h-1zM264 405h1v1h-1zM264 532h1v4h-1zM265 67h1v7h-1zM265 261h1v1h-1zM265 284h1v1h-1zM265 323h1v1h-1zM265 401h1v1h-1zM265 403h1v1h-1zM265 525h1v7h-1zM266 74h1v3h-1zM266 399h1v1h-1zM266 522h1v3h-1zM267 263h1v1h-1zM267 285h1v1h-1zM267 321h1v1h-1zM267 395h1v1h-1zM267 397h1v1h-1zM268 391h1v1h-1zM268 393h1v1h-1zM269 265h1v1h-1zM269 286h1v1h-1zM269 320h1v1h-1zM269 389h1v1h-1zM270 267h1v1h-1zM270 385h1v1h-1zM270 387h1v1h-1zM271 287h1v1h-1zM271 319h1v1h-1zM271 383h1v1h-1zM272 62h1v4h-1zM272 269h1v1h-1zM272 379h1v1h-1zM272 381h1v1h-1zM273 66h1v7h-1zM273 287h1v1h-1zM273 317h1v1h-1zM273 377h1v1h-1zM273 529h1v8h-1zM274 73h1v3h-1zM274 271h1v1h-1zM274 373h1v1h-1zM274 375h1v1h-1zM274 523h1v6h-1zM275 288h1v1h-1zM275 316h1v1h-1zM275 371h1v1h-1zM276 273h1v1h-1zM276 367h1v1h-1zM276 369h1v1h-1zM277 62h1v7h-1zM277 289h1v1h-1zM277 314h1v1h-1zM277 365h1v1h-1zM277 530h1v7h-1zM278 69h1v7h-1zM278 275h1v1h-1zM278 361h1v1h-1zM278 363h1v1h-1zM278 523h1v7h-1zM279 277h1v1h-1zM279 290h1v1h-1zM279 313h1v1h-1zM279 359h1v1h-1zM280 355h1v1h-1zM280 357h1v1h-1zM281 62h1v6h-1zM281 279h1v1h-1zM281 291h1v1h-1zM281 312h1v1h-1zM281 353h1v1h-1zM281 530h1v7h-1zM282 68h1v8h-1zM282 349h1v1h-1zM282 351h1v1h-1zM282 523h1v7h-1zM283 281h1v1h-1zM283 292h1v1h-1zM283 310h1v1h-1zM283 347h1v1h-1zM284 343h1v1h-1zM284 345h1v1h-1zM285 62h1v6h-1zM285 283h1v1h-1zM285 293h1v1h-1zM285 309h1v1h-1zM285 341h1v1h-1zM285 530h1v7h-1zM286 68h1v8h-1zM286 285h1v1h-1zM286 337h1v1h-1zM286 339h1v1h-1zM286 523h1v7h-1zM287 294h1v1h-1zM287 307h1v1h-1zM287 335h1v1h-1zM288 287h1v1h-1zM288 331h1v1h-1zM288 333h1v1h-1zM289 295h1v1h-1zM289 306h1v1h-1zM289 329h1v1h-1zM290 289h1v1h-1zM290 325h1v1h-1zM290 327h1v1h-1zM291 295h1v1h-1zM291 305h1v1h-1zM291 323h1v1h-1zM292 291h1v1h-1zM292 319h1v1h-1zM292 321h1v1h-1zM293 61h1v7h-1zM293 296h1v1h-1zM293 303h1v1h-1zM293 317h1v1h-1zM293 531h1v7h-1zM294 68h1v7h-1zM294 293h1v1h-1zM294 313h1v1h-1zM294 315h1v1h-1zM294 524h1v7h-1zM295 295h1v1h-1zM295 297h1v1h-1zM295 302h1v1h-1zM295 311h1v1h-1zM296 307h1v1h-1zM296 309h1v1h-1zM297 61h1v14h-1zM297 297h1v2h-1zM297 300h1v1h-1zM297 305h1v1h-1zM297 531h1v7h-1zM298 301h1v1h-1zM298 303h1v1h-1zM298 524h1v7h-1zM299 299h1v1h-1zM300 68h1v7h-1zM300 295h1v1h-1zM300 297h1v1h-1zM301 61h1v7h-1zM301 293h1v1h-1zM301 298h1v1h-1zM301 300h1v2h-1zM301 524h1v14h-1zM302 289h1v1h-1zM302 291h1v1h-1zM303 287h1v1h-1zM303 296h1v1h-1zM303 301h1v1h-1zM303 303h1v1h-1zM304 68h1v7h-1zM304 283h1v1h-1zM304 285h1v1h-1zM304 305h1v1h-1zM304 524h1v7h-1zM305 61h1v7h-1zM305 281h1v1h-1zM305 295h1v1h-1zM305 302h1v1h-1zM305 531h1v7h-1zM306 277h1v1h-1zM306 279h1v1h-1zM306 307h1v1h-1zM307 275h1v1h-1zM307 293h1v1h-1zM307 303h1v1h-1zM308 271h1v1h-1zM308 273h1v1h-1zM308 309h1v1h-1zM309 269h1v1h-1zM309 292h1v1h-1zM309 303h1v1h-1zM310 265h1v1h-1zM310 267h1v1h-1zM310 311h1v1h-1zM311 263h1v1h-1zM311 291h1v1h-1zM311 304h1v1h-1zM312 68h1v8h-1zM312 259h1v1h-1zM312 261h1v1h-1zM312 313h1v1h-1zM312 523h1v7h-1zM313 62h1v6h-1zM313 257h1v1h-1zM313 289h1v1h-1zM313 305h1v1h-1zM313 315h1v1h-1zM313 530h1v7h-1zM314 253h1v1h-1zM314 255h1v1h-1zM315 251h1v1h-1zM315 288h1v1h-1zM315 306h1v1h-1zM315 317h1v1h-1zM316 68h1v8h-1zM316 247h1v1h-1zM316 249h1v1h-1zM316 523h1v7h-1zM317 62h1v6h-1zM317 245h1v1h-1zM317 286h1v1h-1zM317 307h1v1h-1zM317 319h1v1h-1zM317 530h1v7h-1zM318 241h1v1h-1zM318 243h1v1h-1zM319 239h1v1h-1zM319 285h1v1h-1zM319 308h1v1h-1zM319 321h1v1h-1zM320 69h1v7h-1zM320 235h1v1h-1zM320 237h1v1h-1zM320 523h1v7h-1zM321 62h1v7h-1zM321 233h1v1h-1zM321 284h1v1h-1zM321 309h1v1h-1zM321 323h1v1h-1zM321 530h1v7h-1zM322 229h1v1h-1zM322 231h1v1h-1zM322 325h1v1h-1zM323 227h1v1h-1zM323 282h1v1h-1zM323 310h1v1h-1zM324 69h1v7h-1zM324 223h1v1h-1zM324 225h1v1h-1zM324 327h1v1h-1zM324 523h1v3h-1zM325 62h1v7h-1zM325 221h1v1h-1zM325 281h1v1h-1zM325 311h1v1h-1zM325 526h1v7h-1zM326 217h1v1h-1zM326 219h1v1h-1zM326 329h1v1h-1zM326 533h1v4h-1zM327 215h1v1h-1zM327 279h1v1h-1zM327 311h1v1h-1zM328 211h1v1h-1zM328 213h1v1h-1zM328 331h1v1h-1zM329 209h1v1h-1zM329 278h1v1h-1zM329 312h1v1h-1zM329 333h1v1h-1zM330 205h1v1h-1zM331 203h1v1h-1zM331 277h1v1h-1zM331 313h1v1h-1zM331 335h1v1h-1zM332 74h1v3h-1zM332 199h1v1h-1zM332 522h1v3h-1zM333 67h1v7h-1zM333 195h1v1h-1zM333 275h1v1h-1zM333 314h1v1h-1zM333 337h1v1h-1zM333 525h1v7h-1zM334 64h1v3h-1zM334 193h1v1h-1zM334 532h1v3h-1zM335 189h1v1h-1zM335 191h1v1h-1zM335 274h1v1h-1zM335 315h1v1h-1zM335 339h1v1h-1zM336 74h1v4h-1zM336 187h1v1h-1zM336 521h1v4h-1zM337 68h1v6h-1zM337 183h1v1h-1zM337 185h1v1h-1zM337 272h1v1h-1zM337 316h1v1h-1zM337 341h1v1h-1zM337 525h1v6h-1zM338 65h1v3h-1zM338 181h1v1h-1zM338 343h1v1h-1zM338 531h1v3h-1zM339 76h1v3h-1zM339 177h1v1h-1zM339 179h1v1h-1zM339 271h1v1h-1zM339 317h1v1h-1zM340 72h1v4h-1zM340 175h1v1h-1zM340 345h1v1h-1zM340 520h1v4h-1zM341 68h1v4h-1zM341 171h1v1h-1zM341 173h1v1h-1zM341 270h1v1h-1zM341 318h1v1h-1zM341 524h1v6h-1zM342 65h1v3h-1zM342 169h1v1h-1zM342 347h1v1h-1zM342 530h1v4h-1zM343 77h1v3h-1zM343 167h1v1h-1zM343 268h1v1h-1zM343 319h1v1h-1zM343 519h1v3h-1zM344 72h1v5h-1zM344 163h1v1h-1zM344 349h1v1h-1zM344 522h1v4h-1zM345 68h1v4h-1zM345 159h1v1h-1zM345 161h1v1h-1zM345 267h1v1h-1zM345 320h1v1h-1zM345 526h1v5h-1zM346 66h1v2h-1zM346 157h1v1h-1zM346 351h1v1h-1zM346 531h1v2h-1zM347 153h1v1h-1zM347 155h1v1h-1zM347 265h1v1h-1zM347 320h1v1h-1zM347 353h1v1h-1zM348 151h1v1h-1zM349 147h1v1h-1zM349 149h1v1h-1zM349 264h1v1h-1zM349 321h1v1h-1zM349 355h1v1h-1zM350 145h1v1h-1zM351 78h1v3h-1zM351 141h1v1h-1zM351 143h1v1h-1zM351 263h1v1h-1zM351 322h1v1h-1zM351 357h1v1h-1zM351 518h1v3h-1zM352 74h1v4h-1zM352 139h1v1h-1zM352 521h1v4h-1zM353 70h1v4h-1zM353 135h1v1h-1zM353 137h1v1h-1zM353 261h1v1h-1zM353 323h1v1h-1zM353 359h1v1h-1zM353 525h1v4h-1zM354 68h1v2h-1zM354 133h1v1h-1zM354 529h1v2h-1zM355 79h1v3h-1zM355 129h1v1h-1zM355 131h1v1h-1zM355 260h1v1h-1zM355 324h1v1h-1zM355 361h1v1h-1zM355 517h1v3h-1zM356 75h1v4h-1zM356 127h1v1h-1zM356 363h1v1h-1zM356 520h1v4h-1zM357 71h1v4h-1zM357 123h1v1h-1zM357 125h1v1h-1zM357 325h1v1h-1zM357 524h1v4h-1zM358 68h1v3h-1zM358 121h1v1h-1zM358 365h1v1h-1zM358 528h1v3h-1zM359 80h1v3h-1zM359 117h1v1h-1zM359 119h1v1h-1zM359 257h1v1h-1zM359 326h1v1h-1zM359 516h1v3h-1zM360 76h1v4h-1zM360 115h1v1h-1zM360 367h1v1h-1zM360 519h1v4h-1zM361 72h1v4h-1zM361 256h1v1h-1zM361 327h1v1h-1zM361 523h1v4h-1zM362 69h1v3h-1zM362 82h1v2h-1zM362 369h1v1h-1zM362 527h1v3h-1zM363 79h1v3h-1zM363 254h1v1h-1zM363 328h1v1h-1zM363 515h1v3h-1zM364 75h1v4h-1zM364 371h1v1h-1zM364 518h1v4h-1zM365 72h1v3h-1zM365 253h1v1h-1zM365 328h1v1h-1zM365 373h1v1h-1zM365 522h1v4h-1zM366 70h1v2h-1zM366 526h1v3h-1zM367 252h1v1h-1zM367 329h1v1h-1zM367 375h1v1h-1zM369 250h1v1h-1zM369 330h1v1h-1zM369 377h1v1h-1zM370 85h1v2h-1zM370 512h1v2h-1zM371 82h1v3h-1zM371 249h1v1h-1zM371 331h1v1h-1zM371 379h1v1h-1zM371 514h1v3h-1zM372 78h1v4h-1zM372 381h1v1h-1zM372 517h1v4h-1zM373 75h1v3h-1zM373 247h1v1h-1zM373 332h1v1h-1zM373 521h1v3h-1zM374 73h1v2h-1zM374 86h1v2h-1zM374 383h1v1h-1zM374 511h1v2h-1zM374 524h1v2h-1zM375 83h1v3h-1zM375 246h1v1h-1zM375 333h1v1h-1zM375 513h1v3h-1zM376 79h1v4h-1zM376 385h1v1h-1zM376 516h1v4h-1zM377 76h1v3h-1zM377 87h1v2h-1zM377 245h1v1h-1zM377 334h1v1h-1zM377 510h1v2h-1zM377 520h1v3h-1zM378 74h1v2h-1zM378 85h1v2h-1zM378 387h1v1h-1zM378 512h1v2h-1zM378 523h1v2h-1zM379 82h1v3h-1zM379 243h1v1h-1zM379 335h1v1h-1zM379 514h1v2h-1zM380 80h1v2h-1zM380 389h1v1h-1zM380 516h1v3h-1zM381 78h1v2h-1zM381 89h1v2h-1zM381 242h1v1h-1zM381 336h1v1h-1zM381 391h1v1h-1zM381 508h1v2h-1zM381 519h1v2h-1zM382 76h1v2h-1zM382 87h1v2h-1zM382 510h1v2h-1zM382 521h1v2h-1zM383 84h1v3h-1zM383 240h1v1h-1zM383 336h1v1h-1zM383 393h1v1h-1zM383 512h1v3h-1zM384 81h1v3h-1zM384 515h1v3h-1zM385 79h1v2h-1zM385 239h1v1h-1zM385 337h1v1h-1zM385 395h1v1h-1zM385 518h1v2h-1zM386 77h1v2h-1zM386 520h1v2h-1zM387 238h1v1h-1zM387 338h1v1h-1zM387 397h1v1h-1zM388 92h1v1h-1zM388 506h1v1h-1zM389 90h1v2h-1zM389 236h1v1h-1zM389 339h1v1h-1zM389 399h1v1h-1zM389 507h1v2h-1zM390 88h1v2h-1zM390 401h1v1h-1zM390 509h1v2h-1zM391 86h1v2h-1zM391 235h1v1h-1zM391 340h1v1h-1zM391 511h1v2h-1zM392 84h1v2h-1zM392 93h1v2h-1zM392 403h1v1h-1zM392 504h1v1h-1zM392 513h1v2h-1zM393 82h1v2h-1zM393 91h1v2h-1zM393 233h1v1h-1zM393 341h1v1h-1zM393 505h1v2h-1zM393 515h1v2h-1zM394 81h1v1h-1zM394 89h1v2h-1zM394 405h1v1h-1zM394 507h1v2h-1zM394 517h1v1h-1zM395 87h1v2h-1zM395 95h1v2h-1zM395 232h1v1h-1zM395 342h1v1h-1zM395 509h1v2h-1zM396 85h1v2h-1zM396 93h1v2h-1zM396 407h1v1h-1zM396 502h1v2h-1zM396 511h1v2h-1zM397 83h1v2h-1zM397 91h1v2h-1zM397 231h1v1h-1zM397 343h1v1h-1zM397 504h1v2h-1zM397 513h1v2h-1zM398 89h1v2h-1zM398 409h1v1h-1zM398 506h1v2h-1zM398 515h1v1h-1zM399 87h1v2h-1zM399 97h1v2h-1zM399 229h1v1h-1zM399 344h1v1h-1zM399 411h1v1h-1zM399 500h1v1h-1zM399 508h1v3h-1zM400 85h1v2h-1zM400 95h1v2h-1zM400 501h1v2h-1zM400 511h1v2h-1zM401 84h1v1h-1zM401 93h1v2h-1zM401 228h1v1h-1zM401 345h1v1h-1zM401 413h1v1h-1zM401 503h1v2h-1zM401 513h1v2h-1zM402 91h1v2h-1zM402 505h1v2h-1zM403 89h1v2h-1zM403 226h1v1h-1zM403 345h1v1h-1zM403 415h1v1h-1zM403 507h1v2h-1zM404 87h1v2h-1zM404 509h1v2h-1zM405 86h1v1h-1zM405 225h1v1h-1zM405 346h1v1h-1zM405 417h1v1h-1zM405 511h1v2h-1zM406 100h1v2h-1zM407 98h1v2h-1zM407 224h1v1h-1zM407 347h1v1h-1zM407 419h1v1h-1zM407 497h1v2h-1zM408 96h1v2h-1zM408 421h1v1h-1zM408 499h1v2h-1zM409 94h1v2h-1zM409 103h1v1h-1zM409 222h1v1h-1zM409 348h1v1h-1zM409 501h1v1h-1zM410 92h1v2h-1zM410 101h1v2h-1zM410 423h1v1h-1zM410 495h1v1h-1zM410 502h1v2h-1zM411 90h1v2h-1zM411 99h1v2h-1zM411 221h1v1h-1zM411 349h1v1h-1zM411 496h1v2h-1zM411 504h1v2h-1zM412 97h1v2h-1zM412 425h1v1h-1zM412 498h1v2h-1zM412 506h1v2h-1zM413 96h1v1h-1zM413 105h1v1h-1zM413 219h1v1h-1zM413 350h1v1h-1zM413 493h1v1h-1zM413 500h1v2h-1zM413 508h1v1h-1zM414 94h1v2h-1zM414 103h1v2h-1zM414 427h1v1h-1zM414 494h1v2h-1zM414 502h1v2h-1zM415 92h1v2h-1zM415 102h1v1h-1zM415 218h1v1h-1zM415 351h1v1h-1zM415 429h1v1h-1zM415 496h1v1h-1zM415 504h1v2h-1zM416 100h1v2h-1zM416 107h1v1h-1zM416 491h1v1h-1zM416 497h1v2h-1zM416 506h1v1h-1zM417 98h1v2h-1zM417 105h1v2h-1zM417 217h1v1h-1zM417 352h1v1h-1zM417 431h1v1h-1zM417 492h1v2h-1zM417 499h1v2h-1zM418 97h1v1h-1zM418 104h1v1h-1zM418 494h1v1h-1zM418 501h1v1h-1zM419 95h1v2h-1zM419 102h1v2h-1zM419 215h1v1h-1zM419 353h1v1h-1zM419 433h1v1h-1zM419 495h1v2h-1zM419 502h1v2h-1zM420 94h1v1h-1zM420 100h1v2h-1zM420 201h1v1h-1zM420 497h1v2h-1zM420 504h1v1h-1zM421 99h1v1h-1zM421 200h1v1h-1zM421 214h1v1h-1zM421 353h1v1h-1zM421 435h1v1h-1zM421 499h1v1h-1zM422 97h1v2h-1zM422 500h1v2h-1zM423 96h1v1h-1zM423 212h1v1h-1zM423 354h1v1h-1zM423 437h1v1h-1zM423 502h1v1h-1zM424 110h1v2h-1zM424 198h1v1h-1zM424 439h1v1h-1zM424 487h1v2h-1zM425 108h1v2h-1zM425 197h1v1h-1zM425 211h1v1h-1zM425 489h1v2h-1zM426 106h1v2h-1zM426 114h1v1h-1zM426 441h1v1h-1zM426 484h1v1h-1zM426 491h1v1h-1zM427 105h1v1h-1zM427 112h1v2h-1zM427 210h1v1h-1zM427 356h1v1h-1zM427 485h1v2h-1zM427 492h1v2h-1zM428 103h1v2h-1zM428 111h1v1h-1zM428 195h1v1h-1zM428 443h1v1h-1zM428 487h1v1h-1zM428 494h1v2h-1zM429 101h1v2h-1zM429 110h1v1h-1zM429 116h1v1h-1zM429 194h1v1h-1zM429 208h1v1h-1zM429 357h1v1h-1zM429 482h1v1h-1zM429 488h1v1h-1zM429 496h1v2h-1zM430 108h1v2h-1zM430 114h1v2h-1zM430 483h1v2h-1zM430 489h1v2h-1zM431 107h1v1h-1zM431 113h1v1h-1zM431 207h1v1h-1zM431 358h1v1h-1zM431 485h1v1h-1zM431 491h1v1h-1zM432 106h1v1h-1zM432 112h1v1h-1zM432 118h1v1h-1zM432 486h1v1h-1zM432 492h1v1h-1zM433 104h1v2h-1zM433 110h1v2h-1zM433 117h1v1h-1zM433 205h1v1h-1zM433 359h1v1h-1zM433 480h1v1h-1zM433 487h1v2h-1zM433 493h1v2h-1zM434 103h1v1h-1zM434 109h1v1h-1zM434 115h1v2h-1zM434 481h1v2h-1zM434 489h1v1h-1zM434 495h1v1h-1zM435 108h1v1h-1zM435 114h1v1h-1zM435 204h1v1h-1zM435 360h1v1h-1zM435 483h1v1h-1zM435 490h1v1h-1zM436 106h1v2h-1zM436 113h1v1h-1zM436 484h1v1h-1zM436 491h1v2h-1zM437 112h1v1h-1zM437 203h1v1h-1zM437 361h1v1h-1zM437 485h1v2h-1zM438 111h1v1h-1zM438 487h1v1h-1zM439 109h1v2h-1zM439 123h1v1h-1zM439 201h1v1h-1zM439 361h1v1h-1zM439 475h1v1h-1zM439 488h1v1h-1zM440 108h1v1h-1zM440 121h1v2h-1zM440 476h1v1h-1zM440 489h1v2h-1zM441 120h1v1h-1zM441 200h1v1h-1zM441 362h1v1h-1zM441 477h1v2h-1zM442 119h1v1h-1zM442 126h1v1h-1zM442 472h1v1h-1zM442 479h1v1h-1zM443 117h1v2h-1zM443 124h1v2h-1zM443 198h1v1h-1zM443 363h1v1h-1zM443 473h1v1h-1zM443 480h1v1h-1zM444 116h1v1h-1zM444 123h1v1h-1zM444 474h1v2h-1zM444 481h1v1h-1zM445 115h1v1h-1zM445 122h1v1h-1zM445 128h1v1h-1zM445 197h1v1h-1zM445 364h1v1h-1zM445 470h1v1h-1zM445 476h1v1h-1zM445 482h1v2h-1zM446 113h1v2h-1zM446 120h1v2h-1zM446 127h1v1h-1zM446 471h1v1h-1zM446 477h1v1h-1zM446 484h1v1h-1zM447 119h1v1h-1zM447 126h1v1h-1zM447 196h1v1h-1zM447 365h1v1h-1zM447 472h1v1h-1zM447 478h1v1h-1zM447 485h1v1h-1zM448 118h1v1h-1zM448 125h1v1h-1zM448 131h1v1h-1zM448 467h1v1h-1zM448 473h1v1h-1zM448 479h1v1h-1zM449 116h1v2h-1zM449 123h1v2h-1zM449 130h1v1h-1zM449 194h1v1h-1zM449 366h1v1h-1zM449 468h1v1h-1zM449 474h1v1h-1zM449 480h1v2h-1zM450 115h1v1h-1zM450 122h1v1h-1zM450 128h1v2h-1zM450 469h1v1h-1zM450 475h1v2h-1zM450 482h1v1h-1zM451 121h1v1h-1zM451 127h1v1h-1zM451 193h1v1h-1zM451 367h1v1h-1zM451 470h1v1h-1zM451 477h1v1h-1zM452 120h1v1h-1zM452 126h1v1h-1zM452 471h1v1h-1zM452 478h1v1h-1zM453 119h1v1h-1zM453 125h1v1h-1zM453 191h1v1h-1zM453 368h1v1h-1zM453 472h1v2h-1zM453 479h1v1h-1zM454 124h1v1h-1zM454 136h1v1h-1zM454 462h1v1h-1zM454 474h1v1h-1zM455 122h1v2h-1zM455 135h1v1h-1zM455 190h1v1h-1zM455 369h1v1h-1zM455 463h1v1h-1zM455 475h1v1h-1zM456 121h1v1h-1zM456 134h1v1h-1zM456 139h1v1h-1zM456 459h1v1h-1zM456 464h1v1h-1zM456 476h1v1h-1zM457 133h1v1h-1zM457 138h1v1h-1zM457 189h1v1h-1zM457 370h1v1h-1zM457 460h1v1h-1zM457 465h1v1h-1zM457 477h1v1h-1zM458 131h1v2h-1zM458 137h1v1h-1zM458 461h1v1h-1zM458 466h1v1h-1zM459 130h1v1h-1zM459 136h1v1h-1zM459 142h1v1h-1zM459 370h1v1h-1zM459 456h1v1h-1zM459 462h1v1h-1zM459 467h1v2h-1zM460 129h1v1h-1zM460 135h1v1h-1zM460 141h1v1h-1zM460 457h1v1h-1zM460 463h1v1h-1zM460 469h1v1h-1zM461 128h1v1h-1zM461 134h1v1h-1zM461 140h1v1h-1zM461 371h1v1h-1zM461 458h1v1h-1zM461 464h1v1h-1zM461 470h1v1h-1zM462 127h1v1h-1zM462 133h1v1h-1zM462 139h1v1h-1zM462 144h1v1h-1zM462 454h1v1h-1zM462 459h1v1h-1zM462 465h1v1h-1zM462 471h1v1h-1zM463 126h1v1h-1zM463 132h1v1h-1zM463 138h1v1h-1zM463 143h1v1h-1zM463 372h1v1h-1zM463 455h1v1h-1zM463 460h1v1h-1zM463 466h1v1h-1zM463 472h1v1h-1zM464 131h1v1h-1zM464 137h1v1h-1zM464 142h1v1h-1zM464 456h1v1h-1zM464 461h1v1h-1zM464 467h1v1h-1zM465 130h1v1h-1zM465 136h1v1h-1zM465 141h1v1h-1zM465 373h1v1h-1zM465 457h1v1h-1zM465 462h1v1h-1zM465 468h1v1h-1zM466 129h1v1h-1zM466 135h1v1h-1zM466 140h1v1h-1zM466 458h1v1h-1zM466 463h1v1h-1zM466 469h1v1h-1zM467 134h1v1h-1zM467 150h1v1h-1zM467 374h1v1h-1zM467 448h1v1h-1zM467 464h1v1h-1zM468 133h1v1h-1zM468 149h1v1h-1zM468 449h1v1h-1zM468 465h1v1h-1zM469 132h1v1h-1zM469 138h1v1h-1zM469 148h1v1h-1zM469 375h1v1h-1zM469 460h1v1h-1zM469 466h1v1h-1zM470 137h1v1h-1zM470 147h1v1h-1zM470 153h1v1h-1zM470 445h1v1h-1zM470 461h1v1h-1zM471 136h1v1h-1zM471 146h1v1h-1zM471 152h1v1h-1zM471 376h1v1h-1zM471 446h1v1h-1zM471 451h1v1h-1zM471 462h1v1h-1zM472 135h1v1h-1zM472 151h1v1h-1zM472 156h1v1h-1zM472 442h1v1h-1zM472 447h1v1h-1zM472 452h1v1h-1zM472 463h1v1h-1zM473 150h1v1h-1zM473 155h1v1h-1zM473 377h1v1h-1zM473 448h1v1h-1zM473 453h1v1h-1zM474 144h1v1h-1zM474 149h1v1h-1zM474 449h1v1h-1zM474 454h1v1h-1zM475 143h1v1h-1zM475 159h1v1h-1zM475 378h1v1h-1zM475 439h1v1h-1zM475 444h1v1h-1zM476 142h1v1h-1zM476 153h1v1h-1zM476 158h1v1h-1zM476 445h1v1h-1zM477 141h1v1h-1zM477 147h1v1h-1zM477 152h1v1h-1zM477 451h1v1h-1zM477 456h1v1h-1zM478 146h1v1h-1zM478 151h1v1h-1zM478 441h1v1h-1zM478 452h1v1h-1zM479 145h1v1h-1zM479 150h1v1h-1zM479 156h1v1h-1zM479 442h1v1h-1zM479 447h1v1h-1zM479 453h1v1h-1zM480 155h1v1h-1zM480 165h1v1h-1zM480 432h1v1h-1zM480 448h1v1h-1zM481 154h1v1h-1zM481 433h1v1h-1zM482 148h1v1h-1zM482 169h1v1h-1zM482 429h1v1h-1zM482 444h1v1h-1zM483 163h1v1h-1zM483 445h1v1h-1zM483 450h1v1h-1zM484 152h1v1h-1zM484 162h1v1h-1zM484 172h1v1h-1zM484 426h1v1h-1zM484 435h1v1h-1zM485 151h1v1h-1zM485 167h1v1h-1zM485 431h1v1h-1zM485 436h1v1h-1zM486 166h1v1h-1zM486 432h1v1h-1zM486 437h1v1h-1zM487 160h1v1h-1zM487 170h1v1h-1zM487 428h1v1h-1zM487 438h1v1h-1zM488 159h1v1h-1zM488 169h1v1h-1zM488 429h1v1h-1zM489 164h1v1h-1zM489 434h1v1h-1zM490 163h1v1h-1zM490 435h1v1h-1zM490 440h1v1h-1zM491 167h1v1h-1zM491 172h1v1h-1zM491 182h1v1h-1zM491 416h1v1h-1zM491 426h1v1h-1zM491 431h1v1h-1zM492 166h1v1h-1zM492 432h1v1h-1zM493 185h1v1h-1zM493 413h1v1h-1zM494 180h1v1h-1zM494 418h1v1h-1zM495 164h1v1h-1zM495 188h1v1h-1zM495 409h1v1h-1zM495 434h1v1h-1zM496 183h1v1h-1zM496 415h1v1h-1zM497 406h1v1h-1zM499 177h1v1h-1zM499 421h1v1h-1zM500 199h1v1h-1zM500 399h1v1h-1zM500 412h1v1h-1zM501 180h1v1h-1zM501 189h1v1h-1zM501 418h1v1h-1zM502 175h1v1h-1zM502 395h1v1h-1zM502 423h1v1h-1zM504 178h1v1h-1zM504 206h1v1h-1zM504 392h1v1h-1zM504 420h1v1h-1zM506 182h1v1h-1zM506 210h1v1h-1zM506 388h1v1h-1zM508 185h1v1h-1zM508 412h1v1h-1zM509 217h1v1h-1zM515 200h1v1h-1zM515 398h1v1h-1zM517 204h1v1h-1zM517 394h1v1h-1z"/>
<path fill="#ff0000" d="M750 106h2v1h-2zM744 107h2v1h-2zM748 107h2v1h-2zM750 109h2v1h-2zM332 114h6v1h-6zM336 115h2v1h-2zM324 120h5v1h-5zM329 121h2v1h-2zM324 130h5v1h-5zM394 144h2v1h-2zM747 148h3v1h-3zM518 150h5v1h-5zM747 154h3v1h-3zM393 156h15v1h-15zM285 158h2v1h-2zM289 161h2v1h-2zM291 163h3v1h-3zM295 166h2v1h-2zM297 168h3v1h-3zM70 170h5v1h-5zM73 171h2v1h-2zM308 177h2v1h-2zM314 182h2v1h-2zM319 186h2v1h-2zM212 188h2v1h-2zM749 188h3v1h-3zM214 189h10v1h-10zM224 190h10v1h-10zM234 191h3v1h-3zM238 191h5v1h-5zM325 191h2v1h-2zM243 192h10v1h-10zM253 193h9v1h-9zM262 194h10v1h-10zM272 195h10v1h-10zM282 196h9v1h-9zM331 196h2v1h-2zM291 197h10v1h-10zM301 198h9v1h-9zM310 199h4v1h-4zM315 199h5v1h-5zM320 200h10v1h-10zM336 200h2v1h-2zM330 201h9v1h-9zM339 202h10v1h-10zM349 203h10v1h-10zM359 204h9v1h-9zM342 205h2v1h-2zM368 205h10v1h-10zM378 206h2v1h-2zM381 206h2v1h-2zM384 206h3v1h-3zM387 207h10v1h-10zM397 208h10v1h-10zM407 209h5v1h-5zM348 210h2v1h-2zM353 214h2v1h-2zM359 219h2v1h-2zM371 222h2v1h-2zM364 224h3v1h-3zM366 225h2v1h-2zM368 227h2v1h-2zM371 229h2v1h-2zM375 232h2v1h-2zM376 233h3v1h-3zM377 234h2v1h-2zM747 236h3v1h-3zM745 237h2v1h-2zM750 237h2v1h-2zM382 238h2v1h-2zM388 243h2v1h-2zM745 243h2v1h-2zM750 243h2v1h-2zM747 244h3v1h-3zM393 247h2v1h-2zM399 252h2v1h-2zM405 257h2v1h-2zM474 258h5v1h-5zM472 259h2v1h-2zM479 259h2v1h-2zM410 261h2v1h-2zM416 266h2v1h-2zM422 271h2v1h-2zM472 273h2v1h-2zM479 273h2v1h-2zM474 274h5v1h-5zM427 275h2v1h-2zM750 276h3v1h-3zM751 277h2v1h-2zM746 279h2v1h-2zM433 280h2v1h-2zM746 284h2v1h-2zM439 285h2v1h-2zM745 287h2v1h-2zM745 293h8v1h-8zM304 553h3v1h-3zM314 553h3v1h-3zM58 186h1v1h-1zM59 185h1v1h-1zM60 176h1v1h-1zM60 184h1v1h-1zM61 177h1v1h-1zM61 183h1v1h-1zM62 178h1v1h-1zM62 182h1v1h-1zM63 179h1v1h-1zM63 181h1v1h-1zM64 180h1v1h-1zM65 179h1v1h-1zM65 181h1v1h-1zM66 178h1v1h-1zM66 182h1v1h-1zM67 177h1v1h-1zM67 183h1v1h-1zM68 176h1v1h-1zM68 184h1v1h-1zM69 175h1v1h-1zM70 174h1v1h-1zM71 173h1v1h-1zM72 172h1v1h-1zM74 172h1v3h-1zM149 299h1v1h-1zM158 296h1v1h-1zM161 292h1v1h-1zM165 288h1v1h-1zM166 245h1v1h-1zM168 244h1v1h-1zM168 284h1v1h-1zM170 243h1v1h-1zM172 242h1v1h-1zM172 280h1v1h-1zM174 241h1v1h-1zM176 241h1v1h-1zM176 276h1v1h-1zM178 240h1v1h-1zM179 272h1v1h-1zM180 239h1v1h-1zM182 238h1v1h-1zM183 268h1v1h-1zM184 237h1v1h-1zM186 236h1v1h-1zM186 264h1v1h-1zM188 235h1v1h-1zM190 234h1v1h-1zM190 260h1v1h-1zM192 233h1v1h-1zM193 256h1v1h-1zM194 233h1v1h-1zM196 232h1v1h-1zM197 252h1v1h-1zM198 231h1v1h-1zM200 230h1v1h-1zM201 248h1v1h-1zM202 229h1v1h-1zM204 228h1v1h-1zM204 244h1v1h-1zM206 227h1v1h-1zM208 226h1v1h-1zM208 240h1v1h-1zM210 225h1v1h-1zM211 236h1v1h-1zM212 225h1v1h-1zM214 224h1v1h-1zM215 232h1v1h-1zM216 223h1v1h-1zM218 222h1v1h-1zM219 228h1v1h-1zM220 221h1v1h-1zM222 220h1v1h-1zM222 224h1v1h-1zM224 219h1v1h-1zM226 218h1v1h-1zM226 220h1v1h-1zM228 217h1v1h-1zM229 216h1v1h-1zM230 217h1v1h-1zM232 216h1v1h-1zM233 212h1v1h-1zM234 215h1v1h-1zM236 208h1v1h-1zM236 214h1v1h-1zM238 213h1v1h-1zM240 204h1v1h-1zM240 212h1v1h-1zM242 211h1v1h-1zM244 200h1v1h-1zM244 210h1v1h-1zM246 209h1v1h-1zM247 196h1v1h-1zM248 209h1v1h-1zM250 208h1v1h-1zM252 207h1v1h-1zM254 188h1v1h-1zM254 206h1v1h-1zM258 184h1v1h-1zM258 204h1v1h-1zM260 203h1v1h-1zM262 180h1v1h-1zM262 202h1v1h-1zM264 160h1v1h-1zM264 201h1v1h-1zM265 176h1v1h-1zM266 161h1v1h-1zM266 200h1v1h-1zM268 163h1v1h-1zM268 200h1v1h-1zM269 172h1v1h-1zM270 164h1v1h-1zM270 199h1v1h-1zM272 165h1v1h-1zM272 168h1v1h-1zM272 198h1v1h-1zM274 166h1v1h-1zM274 197h1v1h-1zM276 164h1v1h-1zM276 168h1v1h-1zM276 196h1v1h-1zM278 169h1v1h-1zM279 160h1v1h-1zM280 170h1v1h-1zM280 194h1v1h-1zM282 172h1v1h-1zM282 193h1v1h-1zM283 156h1v1h-1zM284 157h1v1h-1zM284 173h1v1h-1zM284 192h1v1h-1zM286 174h1v1h-1zM286 192h1v1h-1zM287 159h1v1h-1zM288 160h1v1h-1zM288 175h1v1h-1zM288 191h1v1h-1zM290 162h1v1h-1zM290 177h1v1h-1zM290 190h1v1h-1zM292 178h1v1h-1zM292 189h1v1h-1zM293 164h1v1h-1zM294 165h1v1h-1zM294 179h1v1h-1zM294 188h1v1h-1zM296 167h1v1h-1zM296 181h1v1h-1zM296 187h1v1h-1zM298 182h1v1h-1zM298 186h1v1h-1zM299 169h1v1h-1zM300 170h1v1h-1zM300 183h1v1h-1zM300 185h1v1h-1zM301 171h1v1h-1zM302 170h1v1h-1zM302 184h1v1h-1zM302 555h1v3h-1zM303 554h1v1h-1zM303 558h1v1h-1zM304 173h1v1h-1zM304 184h1v1h-1zM304 559h1v1h-1zM305 172h1v1h-1zM305 174h1v1h-1zM306 175h1v1h-1zM306 183h1v1h-1zM306 187h1v1h-1zM307 176h1v1h-1zM307 554h1v1h-1zM308 175h1v1h-1zM308 182h1v1h-1zM308 188h1v1h-1zM308 555h1v3h-1zM309 558h1v4h-1zM310 178h1v1h-1zM310 181h1v1h-1zM310 190h1v1h-1zM310 562h1v8h-1zM311 177h1v1h-1zM311 179h1v1h-1zM311 558h1v4h-1zM312 180h1v1h-1zM312 191h1v1h-1zM312 555h1v3h-1zM313 181h1v1h-1zM313 554h1v1h-1zM314 179h1v1h-1zM314 192h1v1h-1zM316 178h1v1h-1zM316 183h1v1h-1zM316 193h1v1h-1zM316 559h1v1h-1zM317 181h1v1h-1zM317 184h1v1h-1zM317 554h1v1h-1zM317 558h1v1h-1zM318 177h1v1h-1zM318 185h1v1h-1zM318 195h1v1h-1zM318 555h1v3h-1zM320 176h1v1h-1zM320 184h1v1h-1zM320 196h1v1h-1zM321 123h1v5h-1zM321 187h1v1h-1zM322 122h1v1h-1zM322 128h1v1h-1zM322 176h1v1h-1zM322 188h1v1h-1zM322 197h1v1h-1zM323 121h1v1h-1zM323 129h1v1h-1zM323 186h1v1h-1zM323 189h1v1h-1zM324 152h1v1h-1zM324 175h1v1h-1zM324 190h1v1h-1zM324 199h1v1h-1zM326 174h1v1h-1zM326 188h1v1h-1zM327 192h1v1h-1zM328 173h1v1h-1zM328 193h1v1h-1zM328 201h1v1h-1zM329 129h1v1h-1zM329 190h1v1h-1zM329 194h1v1h-1zM330 122h1v1h-1zM330 128h1v1h-1zM330 172h1v1h-1zM330 195h1v1h-1zM330 202h1v1h-1zM331 120h1v1h-1zM331 123h1v5h-1zM332 119h1v1h-1zM332 171h1v1h-1zM332 193h1v1h-1zM332 204h1v1h-1zM333 118h1v1h-1zM333 197h1v1h-1zM334 117h1v1h-1zM334 170h1v1h-1zM334 198h1v1h-1zM334 205h1v1h-1zM335 116h1v1h-1zM335 195h1v1h-1zM335 199h1v1h-1zM336 169h1v1h-1zM336 206h1v1h-1zM337 116h1v4h-1zM338 168h1v1h-1zM338 197h1v1h-1zM338 208h1v1h-1zM340 168h1v1h-1zM340 203h1v1h-1zM340 209h1v1h-1zM341 199h1v1h-1zM341 204h1v1h-1zM342 167h1v1h-1zM342 210h1v1h-1zM344 166h1v1h-1zM344 201h1v1h-1zM344 206h1v1h-1zM344 211h1v1h-1zM345 207h1v1h-1zM346 165h1v1h-1zM346 208h1v1h-1zM346 213h1v1h-1zM347 204h1v1h-1zM347 209h1v1h-1zM348 165h1v1h-1zM348 214h1v1h-1zM350 168h1v1h-1zM350 206h1v1h-1zM350 211h1v1h-1zM350 215h1v1h-1zM351 171h1v1h-1zM351 212h1v1h-1zM352 174h1v1h-1zM352 213h1v1h-1zM352 217h1v1h-1zM353 177h1v1h-1zM353 208h1v1h-1zM354 218h1v1h-1zM355 180h1v1h-1zM355 215h1v1h-1zM356 183h1v1h-1zM356 210h1v1h-1zM356 216h1v1h-1zM356 219h1v1h-1zM357 186h1v1h-1zM357 217h1v1h-1zM358 189h1v1h-1zM358 218h1v1h-1zM358 220h1v1h-1zM359 213h1v1h-1zM360 192h1v1h-1zM360 222h1v1h-1zM361 195h1v1h-1zM361 220h1v1h-1zM362 198h1v1h-1zM362 215h1v1h-1zM362 221h1v1h-1zM362 223h1v1h-1zM363 201h1v1h-1zM363 222h1v1h-1zM364 223h1v1h-1zM365 217h1v1h-1zM366 207h1v1h-1zM367 210h1v1h-1zM368 213h1v1h-1zM368 219h1v1h-1zM368 226h1v1h-1zM369 216h1v1h-1zM370 228h1v1h-1zM371 219h1v1h-1zM373 225h1v1h-1zM373 230h1v1h-1zM374 224h1v1h-1zM374 228h1v1h-1zM374 231h1v1h-1zM376 231h1v1h-1zM377 226h1v1h-1zM378 237h1v1h-1zM379 235h1v1h-1zM379 240h1v1h-1zM380 228h1v1h-1zM380 234h1v1h-1zM380 236h1v1h-1zM381 237h1v1h-1zM381 243h1v1h-1zM382 175h1v1h-1zM382 236h1v1h-1zM382 246h1v1h-1zM383 231h1v1h-1zM383 249h1v1h-1zM384 237h1v1h-1zM384 239h1v1h-1zM384 252h1v1h-1zM385 240h1v1h-1zM386 233h1v1h-1zM386 238h1v1h-1zM386 241h1v1h-1zM386 255h1v1h-1zM387 242h1v1h-1zM387 258h1v1h-1zM388 240h1v1h-1zM388 261h1v1h-1zM389 235h1v1h-1zM389 264h1v1h-1zM390 241h1v1h-1zM390 244h1v1h-1zM391 245h1v1h-1zM391 267h1v1h-1zM392 237h1v1h-1zM392 242h1v1h-1zM392 246h1v1h-1zM392 270h1v1h-1zM393 155h1v1h-1zM393 273h1v1h-1zM394 153h1v2h-1zM394 243h1v1h-1zM394 276h1v1h-1zM395 151h1v2h-1zM395 239h1v1h-1zM395 248h1v1h-1zM396 145h1v1h-1zM396 149h1v2h-1zM396 245h1v1h-1zM396 249h1v1h-1zM396 279h1v1h-1zM397 146h1v3h-1zM397 250h1v1h-1zM397 282h1v1h-1zM398 242h1v1h-1zM398 246h1v1h-1zM398 251h1v1h-1zM398 285h1v1h-1zM399 288h1v1h-1zM400 247h1v1h-1zM400 291h1v1h-1zM401 244h1v1h-1zM401 253h1v1h-1zM402 249h1v1h-1zM402 254h1v1h-1zM402 294h1v1h-1zM403 144h1v12h-1zM403 157h1v2h-1zM403 255h1v1h-1zM403 297h1v1h-1zM404 143h1v1h-1zM404 246h1v1h-1zM404 250h1v1h-1zM404 256h1v1h-1zM404 300h1v1h-1zM405 142h1v1h-1zM405 303h1v1h-1zM406 251h1v1h-1zM407 248h1v1h-1zM407 258h1v1h-1zM407 306h1v1h-1zM408 252h1v1h-1zM408 259h1v1h-1zM408 309h1v1h-1zM409 260h1v1h-1zM409 312h1v1h-1zM410 251h1v1h-1zM410 254h1v1h-1zM410 315h1v1h-1zM412 255h1v1h-1zM412 262h1v1h-1zM412 318h1v1h-1zM413 253h1v1h-1zM413 321h1v1h-1zM414 256h1v1h-1zM414 264h1v1h-1zM414 324h1v1h-1zM415 265h1v1h-1zM415 327h1v1h-1zM416 255h1v1h-1zM416 258h1v1h-1zM417 330h1v1h-1zM418 259h1v1h-1zM418 267h1v1h-1zM418 333h1v1h-1zM419 268h1v1h-1zM419 336h1v1h-1zM420 260h1v1h-1zM420 269h1v1h-1zM420 339h1v1h-1zM421 270h1v1h-1zM422 260h1v2h-1zM422 342h1v1h-1zM423 345h1v1h-1zM424 272h1v1h-1zM424 348h1v1h-1zM425 262h1v1h-1zM425 273h1v1h-1zM425 351h1v1h-1zM426 264h1v1h-1zM426 274h1v1h-1zM427 354h1v1h-1zM428 264h1v2h-1zM428 357h1v1h-1zM429 276h1v1h-1zM429 360h1v1h-1zM430 267h1v1h-1zM430 277h1v1h-1zM431 266h1v1h-1zM431 278h1v1h-1zM432 268h1v1h-1zM432 279h1v1h-1zM434 269h1v1h-1zM435 281h1v1h-1zM436 270h1v1h-1zM436 282h1v1h-1zM437 271h1v1h-1zM437 283h1v1h-1zM438 284h1v1h-1zM441 286h1v1h-1zM446 272h1v1h-1zM468 264h1v5h-1zM469 262h1v2h-1zM469 269h1v2h-1zM470 261h1v1h-1zM470 271h1v1h-1zM471 260h1v1h-1zM471 272h1v1h-1zM476 266h1v1h-1zM481 260h1v1h-1zM481 272h1v1h-1zM482 261h1v1h-1zM482 271h1v1h-1zM483 262h1v2h-1zM483 269h1v2h-1zM484 264h1v5h-1zM512 162h1v1h-1zM513 163h1v1h-1zM514 154h1v5h-1zM514 164h1v1h-1zM515 153h1v1h-1zM515 159h1v1h-1zM515 163h1v1h-1zM516 152h1v1h-1zM516 160h1v3h-1zM517 151h1v1h-1zM523 151h1v1h-1zM524 152h1v1h-1zM524 160h1v3h-1zM525 153h1v1h-1zM525 159h1v1h-1zM525 163h1v1h-1zM526 154h1v5h-1zM526 164h1v1h-1zM527 165h1v1h-1zM528 166h1v1h-1zM744 186h1v1h-1zM744 239h1v3h-1zM744 281h1v2h-1zM745 106h1v1h-1zM745 108h1v3h-1zM745 146h1v1h-1zM745 150h1v3h-1zM745 187h1v7h-1zM745 238h1v1h-1zM745 242h1v1h-1zM745 280h1v1h-1zM745 283h1v1h-1zM745 292h1v1h-1zM746 111h1v3h-1zM746 147h1v1h-1zM746 149h1v1h-1zM746 153h1v1h-1zM746 186h1v1h-1zM746 290h1v2h-1zM747 108h1v3h-1zM747 187h1v7h-1zM747 288h1v2h-1zM748 106h1v1h-1zM748 186h1v1h-1zM748 240h1v1h-1zM748 280h1v1h-1zM748 283h1v1h-1zM749 108h1v1h-1zM749 187h1v1h-1zM749 189h1v4h-1zM749 194h1v1h-1zM749 279h1v1h-1zM749 281h1v2h-1zM750 147h1v1h-1zM750 149h1v1h-1zM750 153h1v1h-1zM750 193h1v1h-1zM750 278h1v1h-1zM750 287h1v6h-1zM750 294h1v1h-1zM751 110h1v1h-1zM751 114h1v1h-1zM751 146h1v1h-1zM751 150h1v3h-1zM751 187h1v1h-1zM751 189h1v4h-1zM751 194h1v1h-1zM751 238h1v1h-1zM751 242h1v1h-1zM751 286h1v1h-1zM752 107h1v2h-1zM752 111h1v3h-1zM752 239h1v3h-1zM752 278h1v1h-1z"/>
<path fill="#00ff00" d="M286 33h5v1h-5zM280 39h7v1h-7zM290 39h7v1h-7zM280 43h17v1h-17zM744 130h9v1h-9zM182 158h9v1h-9zM185 164h3v1h-3zM747 167h3v1h-3zM185 168h3v1h-3zM745 168h2v1h-2zM750 168h2v1h-2zM745 170h2v1h-2zM750 171h2v1h-2zM745 173h2v1h-2zM750 173h2v1h-2zM747 174h3v1h-3zM209 188h2v1h-2zM211 189h3v1h-3zM214 190h2v1h-2zM216 191h3v1h-3zM219 192h3v1h-3zM222 193h2v1h-2zM223 194h4v1h-4zM226 195h4v1h-4zM229 196h4v1h-4zM233 197h2v1h-2zM235 198h3v1h-3zM238 199h3v1h-3zM241 200h2v1h-2zM243 201h3v1h-3zM246 202h3v1h-3zM249 203h3v1h-3zM252 204h2v1h-2zM254 205h3v1h-3zM257 206h3v1h-3zM260 207h2v1h-2zM262 208h3v1h-3zM265 209h3v1h-3zM268 210h3v1h-3zM322 210h2v1h-2zM401 210h7v1h-7zM271 211h2v1h-2zM321 211h2v1h-2zM394 211h7v1h-7zM273 212h3v1h-3zM390 212h4v1h-4zM276 213h3v1h-3zM381 213h7v1h-7zM279 214h3v1h-3zM374 214h7v1h-7zM750 214h2v1h-2zM282 215h2v1h-2zM367 215h7v1h-7zM284 216h3v1h-3zM360 216h7v1h-7zM287 217h3v1h-3zM354 217h3v1h-3zM358 217h2v1h-2zM290 218h2v1h-2zM347 218h7v1h-7zM292 219h3v1h-3zM340 219h7v1h-7zM295 220h3v1h-3zM333 220h7v1h-7zM298 221h4v1h-4zM326 221h7v1h-7zM301 222h2v1h-2zM320 222h6v1h-6zM303 223h3v1h-3zM313 223h7v1h-7zM306 224h7v1h-7zM299 225h7v1h-7zM309 225h2v1h-2zM292 226h7v1h-7zM311 226h3v1h-3zM286 227h6v1h-6zM314 227h3v1h-3zM279 228h7v1h-7zM317 228h3v1h-3zM272 229h7v1h-7zM320 229h2v1h-2zM265 230h7v1h-7zM322 230h3v1h-3zM258 231h7v1h-7zM325 231h3v1h-3zM252 232h6v1h-6zM328 232h2v1h-2zM245 233h7v1h-7zM330 233h3v1h-3zM238 234h7v1h-7zM333 234h3v1h-3zM231 235h7v1h-7zM336 235h3v1h-3zM224 236h7v1h-7zM339 236h2v1h-2zM218 237h6v1h-6zM341 237h3v1h-3zM211 238h7v1h-7zM344 238h3v1h-3zM204 239h7v1h-7zM347 239h2v1h-2zM197 240h7v1h-7zM349 240h3v1h-3zM190 241h7v1h-7zM352 241h3v1h-3zM184 242h6v1h-6zM355 242h3v1h-3zM177 243h7v1h-7zM358 243h2v1h-2zM170 244h7v1h-7zM360 244h3v1h-3zM168 245h2v1h-2zM363 245h3v1h-3zM346 246h2v1h-2zM366 246h2v1h-2zM348 247h2v1h-2zM368 247h3v1h-3zM371 248h3v1h-3zM374 249h3v1h-3zM377 250h2v1h-2zM379 251h3v1h-3zM382 252h2v1h-2zM385 253h3v1h-3zM388 254h2v1h-2zM390 255h3v1h-3zM393 256h3v1h-3zM396 257h2v1h-2zM747 257h3v1h-3zM398 258h3v1h-3zM401 259h3v1h-3zM404 260h3v1h-3zM407 261h2v1h-2zM747 261h3v1h-3zM409 262h3v1h-3zM412 263h3v1h-3zM746 263h5v1h-5zM415 264h2v1h-2zM417 265h3v1h-3zM420 266h3v1h-3zM747 266h3v1h-3zM423 267h3v1h-3zM426 268h2v1h-2zM429 269h2v1h-2zM431 270h3v1h-3zM747 270h3v1h-3zM434 271h2v1h-2zM436 272h3v1h-3zM746 272h5v1h-5zM476 278h5v1h-5zM476 286h5v1h-5zM474 290h9v1h-9zM746 309h5v1h-5zM747 312h3v1h-3zM460 367h5v1h-5zM460 375h5v1h-5zM458 379h9v1h-9zM528 414h11v1h-11zM528 426h11v1h-11zM73 433h2v1h-2zM79 433h2v1h-2zM76 437h2v1h-2zM82 437h2v1h-2zM73 443h2v1h-2zM79 443h2v1h-2zM76 447h2v1h-2zM82 447h2v1h-2zM70 438h1v1h-1zM70 448h1v1h-1zM71 436h1v2h-1zM71 446h1v2h-1zM72 435h1v1h-1zM72 445h1v1h-1zM73 434h1v1h-1zM73 444h1v1h-1zM74 432h1v1h-1zM74 442h1v1h-1zM75 434h1v3h-1zM75 444h1v3h-1zM76 438h1v1h-1zM76 448h1v1h-1zM77 436h1v1h-1zM77 446h1v1h-1zM78 435h1v1h-1zM78 445h1v1h-1zM79 434h1v1h-1zM79 444h1v1h-1zM80 432h1v1h-1zM80 442h1v1h-1zM81 434h1v3h-1zM81 444h1v3h-1zM82 438h1v1h-1zM82 448h1v1h-1zM83 436h1v1h-1zM83 446h1v1h-1zM84 435h1v1h-1zM84 445h1v1h-1zM85 433h1v2h-1zM85 443h1v2h-1zM86 432h1v1h-1zM86 442h1v1h-1zM155 299h1v1h-1zM157 298h1v1h-1zM159 297h1v1h-1zM161 296h1v1h-1zM163 295h1v1h-1zM165 294h1v1h-1zM167 293h1v1h-1zM169 292h1v1h-1zM171 290h1v1h-1zM173 289h1v1h-1zM175 288h1v1h-1zM177 287h1v1h-1zM179 286h1v1h-1zM180 152h1v1h-1zM180 162h1v1h-1zM181 153h1v1h-1zM181 161h1v1h-1zM181 285h1v1h-1zM182 154h1v4h-1zM182 159h1v2h-1zM183 284h1v1h-1zM184 165h1v3h-1zM185 283h1v1h-1zM186 156h1v2h-1zM186 159h1v5h-1zM187 282h1v1h-1zM188 165h1v3h-1zM189 281h1v1h-1zM190 154h1v4h-1zM190 159h1v2h-1zM191 153h1v1h-1zM191 161h1v1h-1zM191 280h1v1h-1zM192 152h1v1h-1zM192 162h1v1h-1zM193 279h1v1h-1zM195 278h1v1h-1zM197 277h1v1h-1zM199 276h1v1h-1zM201 275h1v1h-1zM203 273h1v1h-1zM205 183h1v1h-1zM205 272h1v1h-1zM207 271h1v1h-1zM209 270h1v1h-1zM211 269h1v1h-1zM213 268h1v1h-1zM215 267h1v1h-1zM217 266h1v1h-1zM219 265h1v1h-1zM220 193h1v1h-1zM221 264h1v1h-1zM223 263h1v1h-1zM225 262h1v1h-1zM227 261h1v1h-1zM229 260h1v1h-1zM231 259h1v1h-1zM232 198h1v1h-1zM233 258h1v1h-1zM235 199h1v1h-1zM235 256h1v1h-1zM237 255h1v1h-1zM238 200h1v1h-1zM239 254h1v1h-1zM241 202h1v1h-1zM241 253h1v1h-1zM243 252h1v1h-1zM244 203h1v1h-1zM245 251h1v1h-1zM247 204h1v1h-1zM247 250h1v1h-1zM249 249h1v1h-1zM250 205h1v1h-1zM251 248h1v1h-1zM253 207h1v1h-1zM253 247h1v1h-1zM255 246h1v1h-1zM256 208h1v1h-1zM257 245h1v1h-1zM259 209h1v1h-1zM259 244h1v1h-1zM261 243h1v1h-1zM262 211h1v1h-1zM263 242h1v1h-1zM265 212h1v1h-1zM265 241h1v1h-1zM267 239h1v1h-1zM268 213h1v1h-1zM269 238h1v1h-1zM271 214h1v1h-1zM271 237h1v1h-1zM273 236h1v1h-1zM274 216h1v1h-1zM275 235h1v1h-1zM277 217h1v1h-1zM277 234h1v1h-1zM279 233h1v1h-1zM280 218h1v1h-1zM281 232h1v1h-1zM283 219h1v1h-1zM283 231h1v1h-1zM284 35h1v3h-1zM284 158h1v1h-1zM285 34h1v1h-1zM285 38h1v1h-1zM285 159h1v1h-1zM285 230h1v1h-1zM286 160h1v1h-1zM286 221h1v1h-1zM287 161h1v2h-1zM287 229h1v1h-1zM288 163h1v1h-1zM289 164h1v2h-1zM289 222h1v1h-1zM289 228h1v1h-1zM290 166h1v1h-1zM291 34h1v1h-1zM291 38h1v1h-1zM291 167h1v1h-1zM292 35h1v3h-1zM292 168h1v2h-1zM292 223h1v1h-1zM293 170h1v1h-1zM294 171h1v2h-1zM295 225h1v1h-1zM296 174h1v1h-1zM297 175h1v2h-1zM297 224h1v1h-1zM298 177h1v1h-1zM299 178h1v2h-1zM299 222h1v1h-1zM300 180h1v1h-1zM301 181h1v1h-1zM301 227h1v1h-1zM302 182h1v2h-1zM303 184h1v1h-1zM303 220h1v1h-1zM304 185h1v2h-1zM304 228h1v1h-1zM305 187h1v1h-1zM305 219h1v1h-1zM306 188h1v1h-1zM307 189h1v2h-1zM307 218h1v1h-1zM307 230h1v1h-1zM308 191h1v1h-1zM309 192h1v2h-1zM309 217h1v1h-1zM310 194h1v1h-1zM310 231h1v1h-1zM311 195h1v1h-1zM311 216h1v1h-1zM312 196h1v2h-1zM313 198h1v1h-1zM313 215h1v1h-1zM313 232h1v1h-1zM314 199h1v2h-1zM315 201h1v1h-1zM315 214h1v1h-1zM316 202h1v1h-1zM316 233h1v1h-1zM317 203h1v2h-1zM317 213h1v1h-1zM318 205h1v1h-1zM319 206h1v1h-1zM319 212h1v1h-1zM319 235h1v1h-1zM320 207h1v2h-1zM321 209h1v1h-1zM322 236h1v1h-1zM323 212h1v1h-1zM324 213h1v1h-1zM325 209h1v1h-1zM325 214h1v2h-1zM325 237h1v1h-1zM326 216h1v1h-1zM327 208h1v1h-1zM327 217h1v2h-1zM328 219h1v1h-1zM328 239h1v1h-1zM329 207h1v1h-1zM329 220h1v1h-1zM330 222h1v1h-1zM331 205h1v1h-1zM331 223h1v1h-1zM331 240h1v1h-1zM332 224h1v2h-1zM333 204h1v1h-1zM333 226h1v1h-1zM334 227h1v1h-1zM334 241h1v1h-1zM335 203h1v1h-1zM335 228h1v2h-1zM336 230h1v1h-1zM337 202h1v1h-1zM337 231h1v2h-1zM337 242h1v1h-1zM338 233h1v1h-1zM339 201h1v1h-1zM339 234h1v1h-1zM340 235h1v1h-1zM340 244h1v1h-1zM341 200h1v1h-1zM342 238h1v2h-1zM343 199h1v1h-1zM343 240h1v1h-1zM343 245h1v1h-1zM344 241h1v1h-1zM345 198h1v1h-1zM345 242h1v2h-1zM346 244h1v1h-1zM347 197h1v1h-1zM347 245h1v1h-1zM349 196h1v1h-1zM349 248h1v1h-1zM350 249h1v2h-1zM351 195h1v1h-1zM351 251h1v1h-1zM352 249h1v1h-1zM352 252h1v2h-1zM353 194h1v1h-1zM353 254h1v1h-1zM354 255h1v1h-1zM355 193h1v1h-1zM355 250h1v1h-1zM355 256h1v2h-1zM356 258h1v1h-1zM357 192h1v1h-1zM357 259h1v2h-1zM358 251h1v1h-1zM358 261h1v1h-1zM359 191h1v1h-1zM359 262h1v1h-1zM360 263h1v2h-1zM361 190h1v1h-1zM361 253h1v1h-1zM361 265h1v1h-1zM362 266h1v2h-1zM363 188h1v1h-1zM363 268h1v1h-1zM364 254h1v1h-1zM364 269h1v1h-1zM365 187h1v1h-1zM365 270h1v2h-1zM366 272h1v1h-1zM367 255h1v1h-1zM367 273h1v2h-1zM368 275h1v1h-1zM369 185h1v1h-1zM369 276h1v1h-1zM370 256h1v1h-1zM370 277h1v2h-1zM371 184h1v1h-1zM371 279h1v1h-1zM372 280h1v2h-1zM373 183h1v1h-1zM373 258h1v1h-1zM373 282h1v1h-1zM374 283h1v1h-1zM375 182h1v1h-1zM375 284h1v2h-1zM376 259h1v1h-1zM376 286h1v1h-1zM377 181h1v1h-1zM377 287h1v2h-1zM378 289h1v1h-1zM379 180h1v1h-1zM379 260h1v1h-1zM379 290h1v1h-1zM380 291h1v2h-1zM381 293h1v1h-1zM382 262h1v1h-1zM382 294h1v2h-1zM383 296h1v1h-1zM384 297h1v1h-1zM385 263h1v1h-1zM385 298h1v2h-1zM386 300h1v1h-1zM387 301h1v2h-1zM388 212h1v1h-1zM388 264h1v1h-1zM388 303h1v1h-1zM389 304h1v1h-1zM390 305h1v2h-1zM391 265h1v1h-1zM391 307h1v1h-1zM392 308h1v1h-1zM393 309h1v2h-1zM394 267h1v1h-1zM394 311h1v1h-1zM395 312h1v2h-1zM396 314h1v1h-1zM397 268h1v1h-1zM397 315h1v1h-1zM398 316h1v2h-1zM399 318h1v1h-1zM400 269h1v1h-1zM400 319h1v2h-1zM401 321h1v1h-1zM402 322h1v1h-1zM403 270h1v1h-1zM403 323h1v2h-1zM404 325h1v1h-1zM405 326h1v2h-1zM406 272h1v1h-1zM406 328h1v1h-1zM407 329h1v1h-1zM408 330h1v2h-1zM409 273h1v1h-1zM409 332h1v1h-1zM410 333h1v2h-1zM411 335h1v1h-1zM412 274h1v1h-1zM412 336h1v1h-1zM413 337h1v2h-1zM414 339h1v1h-1zM415 276h1v1h-1zM415 340h1v2h-1zM416 342h1v1h-1zM417 343h1v1h-1zM418 277h1v1h-1zM418 344h1v2h-1zM419 346h1v1h-1zM420 347h1v2h-1zM421 278h1v1h-1zM421 349h1v1h-1zM422 350h1v1h-1zM423 351h1v2h-1zM424 279h1v1h-1zM424 353h1v1h-1zM425 354h1v2h-1zM426 356h1v1h-1zM427 281h1v1h-1zM427 357h1v1h-1zM428 358h1v2h-1zM430 282h1v1h-1zM433 283h1v1h-1zM435 362h1v1h-1zM436 284h1v1h-1zM439 273h1v1h-1zM439 286h1v1h-1zM448 287h1v1h-1zM458 369h1v5h-1zM459 368h1v1h-1zM459 374h1v1h-1zM462 376h1v3h-1zM462 380h1v4h-1zM465 368h1v1h-1zM465 374h1v1h-1zM466 369h1v5h-1zM474 276h1v1h-1zM474 280h1v5h-1zM475 277h1v1h-1zM475 279h1v1h-1zM475 285h1v1h-1zM478 287h1v3h-1zM478 291h1v2h-1zM481 277h1v1h-1zM481 279h1v1h-1zM481 285h1v1h-1zM482 276h1v1h-1zM482 280h1v5h-1zM526 412h1v1h-1zM526 428h1v1h-1zM527 413h1v1h-1zM527 427h1v1h-1zM530 415h1v11h-1zM536 415h1v11h-1zM539 413h1v1h-1zM539 427h1v1h-1zM540 412h1v1h-1zM540 428h1v1h-1zM744 126h1v1h-1zM744 134h1v1h-1zM744 169h1v1h-1zM744 171h1v2h-1zM744 206h1v1h-1zM745 127h1v1h-1zM745 133h1v1h-1zM745 207h1v7h-1zM745 306h1v1h-1zM745 311h1v1h-1zM746 128h1v2h-1zM746 131h1v2h-1zM746 206h1v1h-1zM746 256h1v1h-1zM746 258h1v3h-1zM746 267h1v3h-1zM746 307h1v2h-1zM746 310h1v1h-1zM747 171h1v2h-1zM747 207h1v7h-1zM747 313h1v1h-1zM748 206h1v1h-1zM748 262h1v1h-1zM748 264h1v1h-1zM748 271h1v1h-1zM748 273h1v2h-1zM748 308h1v1h-1zM748 310h1v2h-1zM748 314h1v1h-1zM749 169h1v2h-1zM749 207h1v7h-1zM749 313h1v1h-1zM750 128h1v2h-1zM750 131h1v2h-1zM750 256h1v1h-1zM750 258h1v3h-1zM750 267h1v3h-1zM750 307h1v2h-1zM750 310h1v1h-1zM751 127h1v1h-1zM751 133h1v1h-1zM751 306h1v1h-1zM751 311h1v1h-1zM752 126h1v1h-1zM752 134h1v1h-1zM752 169h1v2h-1zM752 172h1v1h-1zM752 212h1v2h-1z"/>
<path fill="#ffff00" d="M425 61h2v1h-2zM422 63h2v1h-2zM745 117h2v1h-2zM748 117h2v1h-2zM747 118h2v1h-2zM750 118h2v1h-2zM745 122h2v1h-2zM748 122h2v1h-2zM747 123h2v1h-2zM750 123h2v1h-2zM354 124h9v1h-9zM362 128h3v1h-3zM358 130h3v1h-3zM746 157h6v1h-6zM746 163h6v1h-6zM747 198h3v1h-3zM744 201h4v1h-4zM749 201h4v1h-4zM744 203h9v1h-9zM745 297h5v1h-5zM749 299h2v1h-2zM747 300h2v1h-2zM41 302h3v1h-3zM30 303h2v1h-2zM37 303h2v1h-2zM41 308h3v1h-3zM436 515h2v1h-2zM443 515h2v1h-2zM438 516h5v1h-5zM436 517h2v1h-2zM443 517h2v1h-2zM436 527h2v1h-2zM443 527h2v1h-2zM438 528h5v1h-5zM29 304h1v1h-1zM31 302h1v1h-1zM31 304h1v7h-1zM32 311h1v1h-1zM33 312h1v5h-1zM34 311h1v1h-1zM35 306h1v5h-1zM36 305h1v1h-1zM37 302h1v1h-1zM37 304h1v1h-1zM39 304h1v3h-1zM40 303h1v1h-1zM40 307h1v1h-1zM42 309h1v1h-1zM43 310h1v1h-1zM43 318h1v1h-1zM44 303h1v1h-1zM44 307h1v1h-1zM44 311h1v1h-1zM44 317h1v1h-1zM45 304h1v3h-1zM45 312h1v5h-1zM262 154h1v1h-1zM350 158h1v1h-1zM358 122h1v2h-1zM358 125h1v5h-1zM358 131h1v6h-1zM361 129h1v1h-1zM364 134h1v3h-1zM365 129h1v1h-1zM365 133h1v1h-1zM365 137h1v1h-1zM366 130h1v3h-1zM366 138h1v1h-1zM412 58h1v1h-1zM413 59h1v1h-1zM414 60h1v13h-1zM415 59h1v1h-1zM416 58h1v1h-1zM417 59h1v1h-1zM418 60h1v13h-1zM419 59h1v1h-1zM420 58h1v1h-1zM421 59h1v1h-1zM422 60h1v3h-1zM422 64h1v7h-1zM422 74h1v1h-1zM423 71h1v1h-1zM423 73h1v1h-1zM424 62h1v1h-1zM424 72h1v1h-1zM425 71h1v1h-1zM425 73h1v1h-1zM426 60h1v1h-1zM426 62h1v9h-1zM426 74h1v1h-1zM434 512h1v1h-1zM434 520h1v5h-1zM435 513h1v2h-1zM435 518h1v2h-1zM435 525h1v2h-1zM440 273h1v1h-1zM440 276h1v1h-1zM441 279h1v1h-1zM441 282h1v1h-1zM442 285h1v1h-1zM445 513h1v2h-1zM445 518h1v2h-1zM445 525h1v2h-1zM446 512h1v1h-1zM446 520h1v5h-1zM744 119h1v1h-1zM744 124h1v1h-1zM745 118h1v1h-1zM745 123h1v1h-1zM745 156h1v1h-1zM745 164h1v1h-1zM746 116h1v1h-1zM746 121h1v1h-1zM746 199h1v2h-1zM747 119h1v1h-1zM747 124h1v1h-1zM747 158h1v5h-1zM747 296h1v1h-1zM747 298h1v2h-1zM747 301h1v3h-1zM749 116h1v1h-1zM749 121h1v1h-1zM750 119h1v1h-1zM750 124h1v1h-1zM750 158h1v5h-1zM750 199h1v2h-1zM750 302h1v2h-1zM751 117h1v1h-1zM751 122h1v1h-1zM751 300h1v2h-1zM751 304h1v1h-1zM752 116h1v1h-1zM752 121h1v1h-1zM752 156h1v1h-1zM752 164h1v1h-1z"/>
<path fill="#0000ff" d="M164 82h3v1h-3zM162 86h2v1h-2zM278 112h3v1h-3zM278 116h3v1h-3zM275 119h2v1h-2zM282 119h2v1h-2zM277 120h5v1h-5zM275 124h9v1h-9zM745 136h2v1h-2zM750 136h2v1h-2zM416 159h5v1h-5zM421 160h2v1h-2zM421 174h2v1h-2zM416 175h5v1h-5zM747 176h3v1h-3zM750 216h3v1h-3zM751 217h2v1h-2zM125 226h3v1h-3zM130 226h5v1h-5zM137 226h3v1h-3zM128 231h2v1h-2zM135 231h2v1h-2zM130 232h5v1h-5zM128 236h9v1h-9zM746 246h3v1h-3zM749 247h2v1h-2zM749 253h2v1h-2zM746 254h3v1h-3zM559 281h5v1h-5zM556 282h3v1h-3zM565 283h3v1h-3zM555 287h3v1h-3zM565 289h3v1h-3zM555 293h3v1h-3zM564 294h3v1h-3zM559 295h5v1h-5zM744 317h2v1h-2zM747 317h3v1h-3zM751 317h2v1h-2zM747 320h3v1h-3zM746 322h5v1h-5zM747 330h3v1h-3zM746 332h5v1h-5zM170 532h17v1h-17zM126 224h1v2h-1zM126 227h1v2h-1zM127 229h1v2h-1zM132 224h1v2h-1zM132 227h1v5h-1zM132 233h1v3h-1zM132 237h1v4h-1zM137 229h1v2h-1zM138 224h1v2h-1zM138 227h1v2h-1zM150 70h1v1h-1zM151 71h1v1h-1zM152 72h1v13h-1zM153 71h1v1h-1zM154 70h1v1h-1zM155 71h1v1h-1zM156 72h1v13h-1zM157 71h1v1h-1zM158 70h1v1h-1zM159 71h1v1h-1zM160 72h1v13h-1zM160 243h1v1h-1zM161 85h1v1h-1zM164 85h1v1h-1zM165 81h1v1h-1zM165 83h1v2h-1zM167 245h1v1h-1zM169 246h1v1h-1zM170 524h1v1h-1zM170 540h1v1h-1zM171 247h1v1h-1zM171 525h1v1h-1zM171 539h1v1h-1zM172 526h1v1h-1zM172 538h1v1h-1zM173 248h1v1h-1zM173 527h1v2h-1zM173 536h1v2h-1zM174 529h1v3h-1zM174 533h1v3h-1zM175 249h1v1h-1zM177 250h1v1h-1zM179 251h1v1h-1zM181 252h1v1h-1zM182 529h1v3h-1zM182 533h1v3h-1zM183 252h1v1h-1zM183 527h1v2h-1zM183 536h1v2h-1zM184 526h1v1h-1zM184 538h1v1h-1zM185 253h1v1h-1zM185 525h1v1h-1zM185 539h1v1h-1zM186 524h1v1h-1zM186 540h1v1h-1zM187 254h1v1h-1zM189 255h1v1h-1zM191 256h1v1h-1zM193 257h1v1h-1zM195 258h1v1h-1zM197 259h1v1h-1zM199 259h1v1h-1zM201 260h1v1h-1zM203 261h1v1h-1zM205 262h1v1h-1zM207 263h1v1h-1zM209 264h1v1h-1zM211 265h1v1h-1zM213 266h1v1h-1zM215 266h1v1h-1zM217 267h1v1h-1zM219 268h1v1h-1zM221 269h1v1h-1zM223 270h1v1h-1zM225 271h1v1h-1zM227 272h1v1h-1zM229 273h1v1h-1zM231 273h1v1h-1zM233 274h1v1h-1zM235 275h1v1h-1zM237 276h1v1h-1zM239 277h1v1h-1zM241 278h1v1h-1zM243 279h1v1h-1zM245 280h1v1h-1zM247 280h1v1h-1zM249 281h1v1h-1zM251 282h1v1h-1zM253 283h1v1h-1zM255 284h1v1h-1zM257 285h1v1h-1zM259 286h1v1h-1zM261 287h1v1h-1zM263 287h1v1h-1zM265 288h1v1h-1zM267 289h1v1h-1zM269 290h1v1h-1zM271 291h1v1h-1zM273 112h1v5h-1zM273 292h1v1h-1zM274 117h1v2h-1zM275 293h1v1h-1zM277 113h1v3h-1zM277 294h1v1h-1zM279 121h1v3h-1zM279 125h1v4h-1zM279 294h1v1h-1zM281 113h1v3h-1zM281 295h1v1h-1zM282 150h1v1h-1zM283 296h1v1h-1zM284 117h1v2h-1zM285 112h1v5h-1zM285 297h1v1h-1zM287 298h1v1h-1zM289 299h1v1h-1zM291 300h1v1h-1zM293 301h1v1h-1zM295 301h1v1h-1zM297 302h1v1h-1zM299 303h1v1h-1zM301 304h1v1h-1zM303 305h1v1h-1zM305 306h1v1h-1zM307 307h1v1h-1zM309 308h1v1h-1zM311 308h1v1h-1zM313 309h1v1h-1zM315 310h1v1h-1zM317 311h1v1h-1zM319 312h1v1h-1zM321 313h1v1h-1zM323 314h1v1h-1zM325 315h1v1h-1zM327 315h1v1h-1zM329 316h1v1h-1zM331 317h1v1h-1zM333 318h1v1h-1zM335 319h1v1h-1zM337 320h1v1h-1zM339 321h1v1h-1zM341 322h1v1h-1zM343 322h1v1h-1zM345 323h1v1h-1zM347 324h1v1h-1zM349 325h1v1h-1zM351 326h1v1h-1zM353 327h1v1h-1zM355 328h1v1h-1zM357 329h1v1h-1zM359 329h1v1h-1zM361 330h1v1h-1zM363 331h1v1h-1zM365 332h1v1h-1zM367 333h1v1h-1zM369 334h1v1h-1zM371 335h1v1h-1zM373 336h1v1h-1zM375 336h1v1h-1zM377 337h1v1h-1zM379 338h1v1h-1zM381 339h1v1h-1zM383 340h1v1h-1zM385 341h1v1h-1zM387 342h1v1h-1zM389 343h1v1h-1zM391 343h1v1h-1zM393 344h1v1h-1zM395 345h1v1h-1zM397 346h1v1h-1zM399 347h1v1h-1zM400 189h1v1h-1zM401 348h1v1h-1zM403 349h1v1h-1zM405 350h1v1h-1zM407 350h1v1h-1zM409 351h1v1h-1zM411 352h1v1h-1zM413 353h1v1h-1zM414 161h1v1h-1zM414 173h1v1h-1zM415 160h1v1h-1zM415 162h1v1h-1zM415 172h1v1h-1zM415 174h1v1h-1zM415 354h1v1h-1zM416 163h1v1h-1zM416 171h1v1h-1zM417 164h1v2h-1zM417 169h1v2h-1zM417 355h1v1h-1zM418 166h1v3h-1zM419 356h1v1h-1zM421 357h1v1h-1zM423 161h1v1h-1zM423 173h1v1h-1zM423 357h1v1h-1zM424 162h1v1h-1zM424 172h1v1h-1zM425 163h1v2h-1zM425 170h1v2h-1zM425 358h1v1h-1zM426 165h1v5h-1zM427 359h1v1h-1zM553 285h1v1h-1zM553 289h1v3h-1zM554 284h1v1h-1zM554 288h1v1h-1zM554 292h1v1h-1zM555 283h1v1h-1zM558 288h1v1h-1zM558 292h1v1h-1zM558 294h1v1h-1zM559 289h1v3h-1zM563 285h1v3h-1zM564 282h1v1h-1zM564 284h1v1h-1zM564 288h1v1h-1zM567 293h1v1h-1zM568 284h1v1h-1zM568 288h1v1h-1zM568 292h1v1h-1zM569 285h1v3h-1zM569 291h1v1h-1zM744 137h1v2h-1zM744 182h1v1h-1zM744 224h1v1h-1zM745 139h1v1h-1zM745 178h1v3h-1zM745 183h1v1h-1zM745 219h1v1h-1zM745 223h1v1h-1zM745 247h1v1h-1zM745 253h1v1h-1zM745 316h1v1h-1zM745 318h1v1h-1zM745 326h1v3h-1zM746 177h1v1h-1zM746 181h1v2h-1zM746 220h1v1h-1zM746 222h1v1h-1zM746 248h1v1h-1zM746 252h1v1h-1zM746 319h1v1h-1zM746 329h1v1h-1zM747 137h1v3h-1zM747 221h1v1h-1zM747 249h1v3h-1zM747 327h1v1h-1zM748 140h1v5h-1zM748 220h1v1h-1zM748 222h1v1h-1zM748 316h1v1h-1zM748 318h1v2h-1zM748 321h1v1h-1zM748 323h1v2h-1zM748 326h1v1h-1zM748 328h1v1h-1zM748 331h1v1h-1zM748 333h1v2h-1zM749 137h1v3h-1zM749 219h1v1h-1zM749 223h1v1h-1zM749 327h1v1h-1zM750 177h1v1h-1zM750 181h1v2h-1zM750 218h1v1h-1zM750 248h1v1h-1zM750 252h1v1h-1zM750 319h1v1h-1zM750 329h1v1h-1zM751 139h1v1h-1zM751 178h1v3h-1zM751 183h1v1h-1zM751 249h1v3h-1zM751 316h1v1h-1zM751 318h1v1h-1zM751 326h1v3h-1zM752 137h1v2h-1zM752 184h1v1h-1zM752 218h1v1h-1z"/>
<path fill="#00ffff" d="M280 158h2v1h-2zM276 161h2v1h-2zM272 164h2v1h-2zM346 164h3v1h-3zM340 165h6v1h-6zM334 166h6v1h-6zM268 167h2v1h-2zM328 167h6v1h-6zM350 167h2v1h-2zM322 168h6v1h-6zM317 169h5v1h-5zM264 170h2v1h-2zM311 170h6v1h-6zM305 171h6v1h-6zM299 172h6v1h-6zM260 173h2v1h-2zM293 173h6v1h-6zM355 173h2v1h-2zM288 174h5v1h-5zM282 175h6v1h-6zM276 176h6v1h-6zM357 176h2v1h-2zM255 177h2v1h-2zM270 177h6v1h-6zM265 178h5v1h-5zM259 179h6v1h-6zM251 180h8v1h-8zM247 181h6v1h-6zM241 182h6v1h-6zM362 182h2v1h-2zM236 183h5v1h-5zM247 183h2v1h-2zM230 184h6v1h-6zM224 185h6v1h-6zM218 186h6v1h-6zM243 186h2v1h-2zM212 187h6v1h-6zM239 189h2v1h-2zM234 193h2v1h-2zM226 199h2v1h-2zM222 202h2v1h-2zM218 205h2v1h-2zM214 208h2v1h-2zM209 212h2v1h-2zM205 215h2v1h-2zM201 218h2v1h-2zM197 221h2v1h-2zM193 224h2v1h-2zM188 228h2v1h-2zM184 231h2v1h-2zM180 234h2v1h-2zM176 237h2v1h-2zM172 240h2v1h-2zM168 243h2v1h-2zM167 244h1v1h-1zM170 242h1v1h-1zM171 241h1v1h-1zM174 239h1v1h-1zM175 238h1v1h-1zM178 236h1v1h-1zM179 235h1v1h-1zM182 233h1v1h-1zM183 232h1v1h-1zM186 230h1v1h-1zM187 229h1v1h-1zM190 227h1v1h-1zM191 226h1v1h-1zM192 225h1v1h-1zM195 223h1v1h-1zM196 222h1v1h-1zM199 220h1v1h-1zM200 219h1v1h-1zM203 217h1v1h-1zM204 216h1v1h-1zM207 214h1v1h-1zM208 213h1v1h-1zM211 188h1v1h-1zM211 211h1v1h-1zM212 210h1v1h-1zM213 209h1v1h-1zM216 207h1v1h-1zM217 206h1v1h-1zM220 204h1v1h-1zM221 203h1v1h-1zM224 201h1v1h-1zM225 200h1v1h-1zM228 198h1v1h-1zM229 197h1v1h-1zM232 195h1v1h-1zM233 194h1v1h-1zM236 192h1v1h-1zM237 191h1v1h-1zM238 190h1v1h-1zM241 188h1v1h-1zM242 187h1v1h-1zM245 185h1v1h-1zM246 184h1v1h-1zM249 182h1v1h-1zM253 179h1v1h-1zM254 178h1v1h-1zM257 176h1v1h-1zM258 175h1v1h-1zM259 174h1v1h-1zM262 172h1v1h-1zM263 171h1v1h-1zM266 169h1v1h-1zM267 168h1v1h-1zM270 166h1v1h-1zM271 165h1v1h-1zM274 163h1v1h-1zM275 162h1v1h-1zM278 160h1v1h-1zM279 159h1v1h-1zM282 157h1v1h-1zM349 165h1v1h-1zM350 166h1v1h-1zM351 168h1v1h-1zM352 169h1v1h-1zM353 170h1v1h-1zM354 171h1v1h-1zM355 172h1v1h-1zM356 174h1v1h-1zM357 175h1v1h-1zM359 177h1v1h-1zM359 179h1v1h-1zM360 178h1v1h-1zM361 179h1v1h-1zM362 180h1v2h-1zM364 183h1v1h-1zM364 185h1v1h-1zM365 184h1v1h-1zM366 185h1v1h-1zM366 188h1v1h-1zM367 186h1v2h-1zM368 188h1v1h-1zM369 189h1v1h-1zM369 191h1v1h-1zM370 190h1v1h-1zM371 191h1v1h-1zM371 194h1v1h-1zM372 192h1v2h-1zM373 194h1v1h-1zM373 197h1v1h-1zM374 195h1v1h-1zM375 196h1v1h-1zM376 197h1v1h-1zM376 200h1v1h-1zM377 198h1v1h-1zM378 199h1v2h-1zM378 203h1v1h-1zM379 201h1v1h-1zM380 202h1v1h-1zM380 206h1v1h-1zM381 203h1v1h-1zM382 204h1v1h-1zM382 209h1v1h-1zM383 205h1v2h-1zM384 207h1v1h-1zM385 208h1v1h-1zM385 212h1v1h-1zM386 209h1v1h-1zM387 210h1v1h-1zM387 215h1v1h-1zM388 211h1v1h-1zM389 212h1v2h-1zM389 218h1v1h-1zM390 214h1v1h-1zM391 215h1v1h-1zM392 216h1v1h-1zM392 221h1v1h-1zM393 217h1v1h-1zM394 218h1v2h-1zM394 224h1v1h-1zM395 220h1v1h-1zM396 221h1v1h-1zM396 227h1v1h-1zM397 222h1v1h-1zM398 223h1v1h-1zM398 230h1v1h-1zM399 224h1v2h-1zM400 226h1v1h-1zM401 227h1v1h-1zM401 233h1v1h-1zM402 228h1v1h-1zM403 229h1v1h-1zM403 236h1v1h-1zM404 230h1v1h-1zM405 231h1v2h-1zM405 239h1v1h-1zM406 233h1v1h-1zM407 234h1v1h-1zM408 235h1v1h-1zM408 242h1v1h-1zM409 236h1v1h-1zM410 237h1v2h-1zM410 245h1v1h-1zM411 239h1v1h-1zM412 240h1v1h-1zM412 248h1v1h-1zM413 241h1v1h-1zM414 242h1v1h-1zM414 251h1v1h-1zM415 243h1v1h-1zM416 244h1v2h-1zM417 246h1v1h-1zM417 254h1v1h-1zM418 247h1v1h-1zM419 248h1v1h-1zM419 257h1v1h-1zM420 249h1v1h-1zM421 250h1v2h-1zM421 260h1v1h-1zM422 252h1v1h-1zM423 253h1v1h-1zM424 254h1v1h-1zM424 263h1v1h-1zM425 255h1v1h-1zM426 256h1v2h-1zM426 266h1v1h-1zM427 258h1v1h-1zM428 259h1v1h-1zM428 269h1v1h-1zM429 260h1v1h-1zM430 261h1v1h-1zM431 262h1v1h-1zM431 272h1v1h-1zM432 263h1v2h-1zM433 265h1v1h-1zM433 275h1v1h-1zM434 266h1v1h-1zM435 267h1v1h-1zM435 278h1v1h-1zM436 268h1v1h-1zM437 269h1v2h-1zM437 281h1v1h-1zM438 271h1v1h-1zM439 272h1v1h-1zM440 284h1v1h-1zM442 287h1v1h-1z"/>
<path fill="#ffffff" d="M285 15h28v1h-28zM275 16h10v1h-10zM313 16h10v1h-10zM265 17h10v1h-10zM323 17h10v1h-10zM255 18h10v1h-10zM333 18h10v1h-10zM248 19h7v1h-7zM343 19h8v1h-8zM243 20h5v1h-5zM351 20h5v1h-5zM238 21h5v1h-5zM356 21h5v1h-5zM234 22h4v1h-4zM360 22h5v1h-5zM230 23h4v1h-4zM365 23h4v1h-4zM226 24h4v1h-4zM369 24h3v1h-3zM223 25h3v1h-3zM372 25h4v1h-4zM220 26h3v1h-3zM376 26h3v1h-3zM217 27h3v1h-3zM379 27h3v1h-3zM214 28h3v1h-3zM382 28h3v1h-3zM211 29h4v1h-4zM385 29h3v1h-3zM207 30h4v1h-4zM388 30h3v1h-3zM204 31h3v1h-3zM391 31h4v1h-4zM201 32h3v1h-3zM395 32h3v1h-3zM199 33h2v1h-2zM398 33h2v1h-2zM197 34h2v1h-2zM400 34h2v1h-2zM195 35h2v1h-2zM402 35h2v1h-2zM192 36h3v1h-3zM404 36h3v1h-3zM190 37h2v1h-2zM407 37h2v1h-2zM188 38h2v1h-2zM409 38h2v1h-2zM186 39h2v1h-2zM411 39h2v1h-2zM183 40h3v1h-3zM413 40h3v1h-3zM181 41h2v1h-2zM416 41h2v1h-2zM179 42h2v1h-2zM418 42h2v1h-2zM177 43h2v1h-2zM420 43h2v1h-2zM174 44h3v1h-3zM422 44h3v1h-3zM172 45h2v1h-2zM425 45h2v1h-2zM170 46h2v1h-2zM427 46h2v1h-2zM168 47h2v1h-2zM429 47h2v1h-2zM166 48h2v1h-2zM431 48h2v1h-2zM164 49h2v1h-2zM433 49h2v1h-2zM162 50h2v1h-2zM435 50h2v1h-2zM160 51h2v1h-2zM437 51h2v1h-2zM158 52h2v1h-2zM439 52h2v1h-2zM155 54h2v1h-2zM442 54h2v1h-2zM153 55h2v1h-2zM445 56h2v1h-2zM150 57h2v1h-2zM447 57h2v1h-2zM147 59h2v1h-2zM450 59h2v1h-2zM287 60h24v1h-24zM144 61h2v1h-2zM270 61h17v1h-17zM311 61h17v1h-17zM453 61h2v1h-2zM264 62h6v1h-6zM328 62h6v1h-6zM141 63h2v1h-2zM260 63h4v1h-4zM334 63h4v1h-4zM456 63h2v1h-2zM254 64h6v1h-6zM338 64h6v1h-6zM138 65h2v1h-2zM248 65h6v1h-6zM344 65h7v1h-7zM459 65h2v1h-2zM136 66h2v1h-2zM244 66h5v1h-5zM350 66h4v1h-4zM240 67h4v1h-4zM354 67h5v1h-5zM462 67h2v1h-2zM133 68h2v1h-2zM236 68h4v1h-4zM359 68h4v1h-4zM464 68h2v1h-2zM232 69h4v1h-4zM363 69h4v1h-4zM130 70h2v1h-2zM229 70h3v1h-3zM367 70h2v1h-2zM227 71h2v1h-2zM369 71h3v1h-3zM468 71h2v1h-2zM224 72h3v1h-3zM372 72h3v1h-3zM126 73h2v1h-2zM220 73h4v1h-4zM375 73h4v1h-4zM217 74h3v1h-3zM379 74h3v1h-3zM472 74h2v1h-2zM214 75h3v1h-3zM288 75h22v1h-22zM382 75h2v1h-2zM212 76h2v1h-2zM272 76h16v1h-16zM310 76h16v1h-16zM384 76h3v1h-3zM209 77h3v1h-3zM265 77h7v1h-7zM326 77h8v1h-8zM387 77h2v1h-2zM207 78h2v1h-2zM259 78h6v1h-6zM334 78h5v1h-5zM389 78h2v1h-2zM205 79h2v1h-2zM255 79h4v1h-4zM339 79h4v1h-4zM390 79h3v1h-3zM203 80h2v1h-2zM251 80h4v1h-4zM343 80h5v1h-5zM393 80h2v1h-2zM201 81h2v1h-2zM247 81h4v1h-4zM347 81h4v1h-4zM395 81h3v1h-3zM199 82h2v1h-2zM244 82h3v1h-3zM351 82h4v1h-4zM398 82h2v1h-2zM115 83h2v1h-2zM197 83h2v1h-2zM240 83h5v1h-5zM355 83h4v1h-4zM400 83h2v1h-2zM194 84h3v1h-3zM236 84h4v1h-4zM359 84h3v1h-3zM402 84h2v1h-2zM483 84h2v1h-2zM192 85h2v1h-2zM232 85h4v1h-4zM362 85h5v1h-5zM404 85h2v1h-2zM111 86h2v1h-2zM190 86h2v1h-2zM229 86h3v1h-3zM366 86h4v1h-4zM406 86h2v1h-2zM188 87h2v1h-2zM227 87h2v1h-2zM369 87h3v1h-3zM408 87h2v1h-2zM487 87h2v1h-2zM225 88h2v1h-2zM372 88h2v1h-2zM409 88h3v1h-3zM185 89h2v1h-2zM221 89h4v1h-4zM374 89h3v1h-3zM412 89h2v1h-2zM183 90h2v1h-2zM217 90h4v1h-4zM377 90h4v1h-4zM414 90h2v1h-2zM490 90h2v1h-2zM181 91h2v1h-2zM213 91h4v1h-4zM381 91h5v1h-5zM416 91h2v1h-2zM212 92h2v1h-2zM385 92h2v1h-2zM178 93h2v1h-2zM210 93h2v1h-2zM387 93h2v1h-2zM419 93h2v1h-2zM176 94h2v1h-2zM208 94h2v1h-2zM389 94h2v1h-2zM421 94h2v1h-2zM174 95h2v1h-2zM206 95h2v1h-2zM391 95h2v1h-2zM423 95h2v1h-2zM204 96h2v1h-2zM393 96h2v1h-2zM171 97h2v1h-2zM202 97h2v1h-2zM395 97h2v1h-2zM426 97h2v1h-2zM170 98h2v1h-2zM200 98h2v1h-2zM397 98h2v1h-2zM427 98h2v1h-2zM198 99h2v1h-2zM399 99h2v1h-2zM167 100h2v1h-2zM195 100h3v1h-3zM401 100h2v1h-2zM430 100h2v1h-2zM194 101h2v1h-2zM403 101h2v1h-2zM164 102h2v1h-2zM192 102h2v1h-2zM405 102h2v1h-2zM433 102h2v1h-2zM190 103h2v1h-2zM407 103h2v1h-2zM188 104h2v1h-2zM409 104h2v1h-2zM160 105h2v1h-2zM283 105h33v1h-33zM437 105h2v1h-2zM185 106h2v1h-2zM276 106h7v1h-7zM316 106h7v1h-7zM412 106h2v1h-2zM157 107h2v1h-2zM269 107h7v1h-7zM323 107h6v1h-6zM440 107h2v1h-2zM89 108h2v1h-2zM182 108h2v1h-2zM263 108h6v1h-6zM329 108h7v1h-7zM415 108h2v1h-2zM258 109h5v1h-5zM336 109h5v1h-5zM153 110h2v1h-2zM178 110h3v1h-3zM254 110h4v1h-4zM341 110h4v1h-4zM418 110h2v1h-2zM444 110h2v1h-2zM177 111h2v1h-2zM251 111h3v1h-3zM345 111h3v1h-3zM420 111h2v1h-2zM175 112h2v1h-2zM248 112h3v1h-3zM348 112h3v1h-3zM422 112h2v1h-2zM95 113h2v1h-2zM149 113h2v1h-2zM245 113h3v1h-3zM351 113h3v1h-3zM241 114h4v1h-4zM354 114h4v1h-4zM449 114h2v1h-2zM171 115h2v1h-2zM238 115h3v1h-3zM358 115h2v1h-2zM235 116h3v1h-3zM361 116h3v1h-3zM427 116h2v1h-2zM232 117h3v1h-3zM364 117h3v1h-3zM229 118h3v1h-3zM367 118h3v1h-3zM142 119h2v1h-2zM166 119h2v1h-2zM226 119h3v1h-3zM370 119h3v1h-3zM431 119h2v1h-2zM455 119h2v1h-2zM224 120h2v1h-2zM373 120h2v1h-2zM222 121h2v1h-2zM375 121h2v1h-2zM162 122h2v1h-2zM219 122h3v1h-3zM377 122h2v1h-2zM435 122h2v1h-2zM106 123h2v1h-2zM217 123h2v1h-2zM379 123h2v1h-2zM136 124h2v1h-2zM215 124h2v1h-2zM381 124h2v1h-2zM158 125h2v1h-2zM213 125h2v1h-2zM383 125h2v1h-2zM462 125h2v1h-2zM211 126h2v1h-2zM385 126h2v1h-2zM440 126h2v1h-2zM209 127h2v1h-2zM387 127h2v1h-2zM207 128h2v1h-2zM389 128h2v1h-2zM205 129h2v1h-2zM391 129h2v1h-2zM152 130h2v1h-2zM203 130h2v1h-2zM393 130h2v1h-2zM395 131h2v1h-2zM446 131h2v1h-2zM116 132h2v1h-2zM200 132h2v1h-2zM397 132h2v1h-2zM197 134h2v1h-2zM400 134h2v1h-2zM194 136h2v1h-2zM403 136h2v1h-2zM192 137h2v1h-2zM405 137h2v1h-2zM189 139h2v1h-2zM408 139h2v1h-2zM186 141h2v1h-2zM411 141h2v1h-2zM470 142h2v1h-2zM128 143h2v1h-2zM182 144h2v1h-2zM415 144h2v1h-2zM177 148h2v1h-2zM421 149h2v1h-2zM171 153h2v1h-2zM426 153h2v1h-2zM169 154h2v1h-2zM111 155h2v1h-2zM486 155h2v1h-2zM115 158h2v1h-2zM482 158h2v1h-2zM119 161h2v1h-2zM478 161h2v1h-2zM121 162h2v1h-2zM476 162h2v1h-2zM97 171h2v1h-2zM482 171h2v1h-2zM500 171h2v1h-2zM99 172h2v1h-2zM480 172h2v1h-2zM498 172h2v1h-2zM496 173h2v1h-2zM494 174h2v1h-2zM103 175h2v1h-2zM476 175h2v1h-2zM491 176h2v1h-2zM473 177h2v1h-2zM489 177h2v1h-2zM107 178h2v1h-2zM487 178h2v1h-2zM109 179h2v1h-2zM470 179h2v1h-2zM466 182h2v1h-2zM463 184h2v1h-2zM459 187h2v1h-2zM87 189h2v1h-2zM509 189h3v1h-3zM89 190h2v1h-2zM507 190h2v1h-2zM91 191h2v1h-2zM505 191h2v1h-2zM503 192h2v1h-2zM94 193h2v1h-2zM501 193h2v1h-2zM96 194h2v1h-2zM499 194h2v1h-2zM98 195h2v1h-2zM497 195h2v1h-2zM78 208h3v1h-3zM94 208h3v1h-3zM518 208h3v1h-3zM81 209h2v1h-2zM97 209h2v1h-2zM516 209h2v1h-2zM83 210h2v1h-2zM99 210h2v1h-2zM513 210h3v1h-3zM85 211h3v1h-3zM101 211h2v1h-2zM511 211h2v1h-2zM88 212h2v1h-2zM103 212h2v1h-2zM509 212h2v1h-2zM90 213h3v1h-3zM105 213h2v1h-2zM506 213h3v1h-3zM107 214h3v1h-3zM568 214h3v1h-3zM110 215h2v1h-2zM565 215h3v1h-3zM112 216h2v1h-2zM562 216h3v1h-3zM114 217h2v1h-2zM558 217h4v1h-4zM116 218h2v1h-2zM555 218h3v1h-3zM118 219h2v1h-2zM552 219h3v1h-3zM120 220h3v1h-3zM549 220h3v1h-3zM546 221h3v1h-3zM543 222h3v1h-3zM540 223h3v1h-3zM536 224h4v1h-4zM533 225h3v1h-3zM530 226h3v1h-3zM527 227h3v1h-3zM71 228h3v1h-3zM525 228h3v1h-3zM74 229h3v1h-3zM522 229h3v1h-3zM77 230h4v1h-4zM518 230h4v1h-4zM81 231h3v1h-3zM515 231h3v1h-3zM84 232h2v1h-2zM513 232h2v1h-2zM21 238h4v1h-4zM25 239h4v1h-4zM29 240h4v1h-4zM33 241h5v1h-5zM38 242h4v1h-4zM42 243h4v1h-4zM46 244h4v1h-4zM50 245h5v1h-5zM55 246h4v1h-4zM59 247h4v1h-4zM63 248h6v1h-6zM530 248h4v1h-4zM69 249h4v1h-4zM525 249h5v1h-5zM73 250h5v1h-5zM521 250h4v1h-4zM78 251h3v1h-3zM518 251h3v1h-3zM62 268h5v1h-5zM462 268h3v1h-3zM532 268h5v1h-5zM67 269h6v1h-6zM458 269h4v1h-4zM526 269h6v1h-6zM73 270h5v1h-5zM454 270h4v1h-4zM521 270h5v1h-5zM452 271h2v1h-2zM60 289h8v1h-8zM531 289h8v1h-8zM68 290h8v1h-8zM523 290h8v1h-8zM75 299h31v1h-31zM131 299h13v1h-13zM493 299h31v1h-31zM68 308h8v1h-8zM523 308h8v1h-8zM60 309h8v1h-8zM531 309h8v1h-8zM73 328h5v1h-5zM521 328h5v1h-5zM67 329h6v1h-6zM526 329h6v1h-6zM62 330h5v1h-5zM532 330h5v1h-5zM78 347h4v1h-4zM517 347h4v1h-4zM73 348h5v1h-5zM521 348h4v1h-4zM69 349h4v1h-4zM525 349h5v1h-5zM66 350h3v1h-3zM530 350h6v1h-6zM536 351h4v1h-4zM540 352h4v1h-4zM544 353h5v1h-5zM549 354h4v1h-4zM553 355h4v1h-4zM557 356h4v1h-4zM561 357h5v1h-5zM566 358h4v1h-4zM570 359h4v1h-4zM574 360h4v1h-4zM440 365h2v1h-2zM84 366h3v1h-3zM442 366h2v1h-2zM512 366h3v1h-3zM81 367h3v1h-3zM444 367h2v1h-2zM515 367h3v1h-3zM77 368h4v1h-4zM446 368h2v1h-2zM518 368h4v1h-4zM74 369h3v1h-3zM448 369h2v1h-2zM522 369h3v1h-3zM71 370h3v1h-3zM450 370h2v1h-2zM525 370h3v1h-3zM69 371h3v1h-3zM66 372h3v1h-3zM63 373h3v1h-3zM59 374h4v1h-4zM56 375h3v1h-3zM53 376h3v1h-3zM50 377h3v1h-3zM47 378h3v1h-3zM476 378h3v1h-3zM44 379h3v1h-3zM479 379h2v1h-2zM41 380h3v1h-3zM481 380h2v1h-2zM37 381h4v1h-4zM483 381h2v1h-2zM34 382h3v1h-3zM485 382h2v1h-2zM31 383h3v1h-3zM487 383h2v1h-2zM28 384h3v1h-3zM489 384h3v1h-3zM90 385h3v1h-3zM492 385h2v1h-2zM506 385h3v1h-3zM88 386h2v1h-2zM494 386h2v1h-2zM509 386h2v1h-2zM85 387h3v1h-3zM496 387h2v1h-2zM511 387h2v1h-2zM83 388h2v1h-2zM498 388h2v1h-2zM513 388h3v1h-3zM81 389h2v1h-2zM500 389h2v1h-2zM516 389h2v1h-2zM78 390h3v1h-3zM502 390h3v1h-3zM518 390h3v1h-3zM99 403h3v1h-3zM499 403h2v1h-2zM97 404h2v1h-2zM501 404h2v1h-2zM95 405h2v1h-2zM93 406h2v1h-2zM504 406h2v1h-2zM91 407h2v1h-2zM506 407h2v1h-2zM89 408h2v1h-2zM508 408h2v1h-2zM87 409h2v1h-2zM510 409h2v1h-2zM138 411h2v1h-2zM134 414h2v1h-2zM131 416h2v1h-2zM128 418h2v1h-2zM488 419h2v1h-2zM110 420h2v1h-2zM490 420h2v1h-2zM108 421h2v1h-2zM124 421h2v1h-2zM106 422h2v1h-2zM104 423h2v1h-2zM121 423h2v1h-2zM494 423h2v1h-2zM101 425h2v1h-2zM99 426h2v1h-2zM117 426h2v1h-2zM498 426h2v1h-2zM97 427h2v1h-2zM500 427h2v1h-2zM121 436h2v1h-2zM476 436h2v1h-2zM119 437h2v1h-2zM478 437h2v1h-2zM115 440h2v1h-2zM482 440h2v1h-2zM111 443h2v1h-2zM486 443h2v1h-2zM428 444h2v1h-2zM171 445h2v1h-2zM426 445h2v1h-2zM421 449h2v1h-2zM177 450h2v1h-2zM182 454h2v1h-2zM415 454h2v1h-2zM128 455h2v1h-2zM470 456h2v1h-2zM186 457h2v1h-2zM411 457h2v1h-2zM189 459h2v1h-2zM408 459h2v1h-2zM192 461h2v1h-2zM405 461h2v1h-2zM194 462h2v1h-2zM403 462h2v1h-2zM197 464h2v1h-2zM400 464h2v1h-2zM200 466h2v1h-2zM397 466h2v1h-2zM481 466h2v1h-2zM395 467h2v1h-2zM446 467h2v1h-2zM152 468h2v1h-2zM203 468h2v1h-2zM393 468h2v1h-2zM205 469h2v1h-2zM391 469h2v1h-2zM207 470h2v1h-2zM389 470h2v1h-2zM209 471h2v1h-2zM387 471h2v1h-2zM211 472h2v1h-2zM385 472h2v1h-2zM440 472h2v1h-2zM158 473h2v1h-2zM213 473h2v1h-2zM383 473h2v1h-2zM462 473h2v1h-2zM136 474h2v1h-2zM215 474h2v1h-2zM381 474h2v1h-2zM217 475h2v1h-2zM379 475h2v1h-2zM162 476h2v1h-2zM219 476h3v1h-3zM377 476h2v1h-2zM435 476h2v1h-2zM492 476h2v1h-2zM222 477h2v1h-2zM375 477h2v1h-2zM224 478h2v1h-2zM373 478h2v1h-2zM142 479h2v1h-2zM166 479h2v1h-2zM226 479h3v1h-3zM370 479h3v1h-3zM431 479h2v1h-2zM455 479h2v1h-2zM229 480h3v1h-3zM367 480h3v1h-3zM232 481h3v1h-3zM364 481h3v1h-3zM235 482h3v1h-3zM361 482h3v1h-3zM427 482h2v1h-2zM171 483h2v1h-2zM239 483h2v1h-2zM358 483h3v1h-3zM241 484h4v1h-4zM354 484h4v1h-4zM449 484h2v1h-2zM149 485h2v1h-2zM245 485h3v1h-3zM351 485h3v1h-3zM502 485h2v1h-2zM175 486h2v1h-2zM248 486h3v1h-3zM348 486h3v1h-3zM422 486h2v1h-2zM177 487h2v1h-2zM251 487h3v1h-3zM345 487h3v1h-3zM420 487h2v1h-2zM153 488h2v1h-2zM179 488h2v1h-2zM254 488h4v1h-4zM341 488h4v1h-4zM418 488h3v1h-3zM444 488h2v1h-2zM258 489h5v1h-5zM336 489h5v1h-5zM182 490h2v1h-2zM263 490h6v1h-6zM329 490h7v1h-7zM415 490h2v1h-2zM508 490h2v1h-2zM157 491h2v1h-2zM269 491h7v1h-7zM323 491h6v1h-6zM440 491h2v1h-2zM185 492h2v1h-2zM276 492h7v1h-7zM316 492h7v1h-7zM412 492h2v1h-2zM160 493h2v1h-2zM283 493h33v1h-33zM437 493h2v1h-2zM188 494h2v1h-2zM409 494h2v1h-2zM190 495h2v1h-2zM407 495h2v1h-2zM164 496h2v1h-2zM192 496h2v1h-2zM405 496h2v1h-2zM433 496h2v1h-2zM194 497h2v1h-2zM403 497h2v1h-2zM167 498h2v1h-2zM196 498h2v1h-2zM401 498h3v1h-3zM430 498h2v1h-2zM198 499h2v1h-2zM399 499h2v1h-2zM170 500h2v1h-2zM200 500h2v1h-2zM397 500h2v1h-2zM427 500h2v1h-2zM171 501h2v1h-2zM202 501h2v1h-2zM395 501h2v1h-2zM426 501h2v1h-2zM204 502h2v1h-2zM393 502h2v1h-2zM174 503h2v1h-2zM206 503h2v1h-2zM391 503h2v1h-2zM423 503h2v1h-2zM176 504h2v1h-2zM208 504h2v1h-2zM389 504h2v1h-2zM421 504h2v1h-2zM178 505h2v1h-2zM210 505h2v1h-2zM387 505h2v1h-2zM419 505h2v1h-2zM212 506h2v1h-2zM385 506h2v1h-2zM181 507h2v1h-2zM213 507h4v1h-4zM381 507h5v1h-5zM416 507h2v1h-2zM107 508h2v1h-2zM183 508h2v1h-2zM217 508h4v1h-4zM377 508h4v1h-4zM414 508h2v1h-2zM185 509h2v1h-2zM221 509h4v1h-4zM374 509h3v1h-3zM412 509h2v1h-2zM225 510h2v1h-2zM372 510h2v1h-2zM409 510h3v1h-3zM188 511h2v1h-2zM227 511h3v1h-3zM370 511h2v1h-2zM408 511h2v1h-2zM487 511h2v1h-2zM111 512h2v1h-2zM190 512h2v1h-2zM229 512h3v1h-3zM366 512h4v1h-4zM406 512h2v1h-2zM192 513h2v1h-2zM232 513h4v1h-4zM362 513h5v1h-5zM404 513h2v1h-2zM194 514h3v1h-3zM236 514h4v1h-4zM359 514h3v1h-3zM402 514h2v1h-2zM483 514h2v1h-2zM115 515h2v1h-2zM197 515h2v1h-2zM240 515h4v1h-4zM354 515h5v1h-5zM400 515h2v1h-2zM199 516h2v1h-2zM244 516h3v1h-3zM351 516h4v1h-4zM398 516h2v1h-2zM201 517h2v1h-2zM247 517h4v1h-4zM347 517h4v1h-4zM395 517h3v1h-3zM203 518h2v1h-2zM251 518h4v1h-4zM343 518h5v1h-5zM393 518h2v1h-2zM205 519h2v1h-2zM255 519h4v1h-4zM339 519h4v1h-4zM390 519h3v1h-3zM207 520h2v1h-2zM259 520h6v1h-6zM334 520h5v1h-5zM389 520h2v1h-2zM209 521h3v1h-3zM265 521h7v1h-7zM326 521h8v1h-8zM387 521h2v1h-2zM212 522h2v1h-2zM272 522h16v1h-16zM310 522h16v1h-16zM384 522h3v1h-3zM214 523h3v1h-3zM288 523h22v1h-22zM382 523h2v1h-2zM217 524h3v1h-3zM379 524h3v1h-3zM472 524h2v1h-2zM126 525h2v1h-2zM220 525h4v1h-4zM375 525h4v1h-4zM224 526h3v1h-3zM372 526h3v1h-3zM227 527h2v1h-2zM369 527h3v1h-3zM468 527h2v1h-2zM130 528h2v1h-2zM229 528h3v1h-3zM367 528h2v1h-2zM232 529h4v1h-4zM363 529h4v1h-4zM133 530h2v1h-2zM236 530h4v1h-4zM359 530h4v1h-4zM464 530h2v1h-2zM240 531h4v1h-4zM354 531h5v1h-5zM462 531h2v1h-2zM136 532h2v1h-2zM244 532h5v1h-5zM350 532h4v1h-4zM138 533h2v1h-2zM248 533h6v1h-6zM344 533h6v1h-6zM459 533h2v1h-2zM254 534h6v1h-6zM338 534h6v1h-6zM141 535h2v1h-2zM260 535h4v1h-4zM334 535h4v1h-4zM456 535h2v1h-2zM264 536h6v1h-6zM328 536h6v1h-6zM144 537h2v1h-2zM270 537h17v1h-17zM311 537h17v1h-17zM453 537h2v1h-2zM287 538h24v1h-24zM147 539h2v1h-2zM450 539h2v1h-2zM150 541h2v1h-2zM447 541h2v1h-2zM445 542h2v1h-2zM153 543h2v1h-2zM155 544h2v1h-2zM442 544h2v1h-2zM158 546h2v1h-2zM439 546h2v1h-2zM160 547h2v1h-2zM437 547h2v1h-2zM162 548h2v1h-2zM435 548h2v1h-2zM164 549h2v1h-2zM433 549h2v1h-2zM166 550h2v1h-2zM431 550h2v1h-2zM168 551h2v1h-2zM429 551h2v1h-2zM170 552h2v1h-2zM427 552h2v1h-2zM172 553h2v1h-2zM425 553h2v1h-2zM174 554h3v1h-3zM422 554h3v1h-3zM177 555h2v1h-2zM420 555h2v1h-2zM179 556h2v1h-2zM418 556h2v1h-2zM181 557h2v1h-2zM416 557h2v1h-2zM183 558h3v1h-3zM413 558h3v1h-3zM186 559h2v1h-2zM411 559h2v1h-2zM188 560h2v1h-2zM409 560h2v1h-2zM190 561h2v1h-2zM407 561h2v1h-2zM192 562h3v1h-3zM404 562h3v1h-3zM195 563h2v1h-2zM402 563h2v1h-2zM197 564h2v1h-2zM400 564h2v1h-2zM199 565h2v1h-2zM398 565h2v1h-2zM201 566h3v1h-3zM395 566h3v1h-3zM204 567h3v1h-3zM391 567h4v1h-4zM207 568h4v1h-4zM388 568h3v1h-3zM211 569h3v1h-3zM384 569h4v1h-4zM214 570h3v1h-3zM382 570h3v1h-3zM217 571h3v1h-3zM379 571h3v1h-3zM220 572h3v1h-3zM376 572h3v1h-3zM223 573h3v1h-3zM372 573h4v1h-4zM226 574h4v1h-4zM369 574h3v1h-3zM230 575h4v1h-4zM365 575h4v1h-4zM234 576h5v1h-5zM361 576h4v1h-4zM238 577h5v1h-5zM356 577h5v1h-5zM243 578h5v1h-5zM351 578h5v1h-5zM248 579h7v1h-7zM343 579h8v1h-8zM255 580h10v1h-10zM333 580h10v1h-10zM265 581h10v1h-10zM323 581h10v1h-10zM275 582h10v1h-10zM313 582h10v1h-10zM285 583h28v1h-28zM15 285h1v28h-1zM16 275h1v10h-1zM16 313h1v10h-1zM17 265h1v10h-1zM17 323h1v10h-1zM18 255h1v10h-1zM18 333h1v10h-1zM19 248h1v7h-1zM19 343h1v8h-1zM20 243h1v5h-1zM20 351h1v5h-1zM21 239h1v4h-1zM21 356h1v5h-1zM22 234h1v4h-1zM22 361h1v4h-1zM23 230h1v4h-1zM23 365h1v4h-1zM24 226h1v4h-1zM24 369h1v3h-1zM25 223h1v3h-1zM25 372h1v4h-1zM26 220h1v3h-1zM26 376h1v3h-1zM27 217h1v3h-1zM27 379h1v3h-1zM28 214h1v3h-1zM28 382h1v2h-1zM29 211h1v3h-1zM29 385h1v3h-1zM30 207h1v4h-1zM30 388h1v3h-1zM31 204h1v3h-1zM31 391h1v4h-1zM32 201h1v3h-1zM32 395h1v3h-1zM33 199h1v2h-1zM33 398h1v2h-1zM34 197h1v2h-1zM34 400h1v2h-1zM35 195h1v2h-1zM35 402h1v2h-1zM36 192h1v3h-1zM36 404h1v3h-1zM37 190h1v2h-1zM37 407h1v2h-1zM38 188h1v2h-1zM38 409h1v2h-1zM39 186h1v2h-1zM39 411h1v2h-1zM40 183h1v3h-1zM40 413h1v3h-1zM41 181h1v2h-1zM41 416h1v2h-1zM42 179h1v2h-1zM42 418h1v2h-1zM43 177h1v2h-1zM43 420h1v2h-1zM44 174h1v3h-1zM44 422h1v3h-1zM45 172h1v2h-1zM45 425h1v2h-1zM46 170h1v2h-1zM46 427h1v2h-1zM47 168h1v2h-1zM47 429h1v2h-1zM48 166h1v2h-1zM48 431h1v2h-1zM49 164h1v2h-1zM49 433h1v2h-1zM50 162h1v2h-1zM50 435h1v2h-1zM51 160h1v2h-1zM51 437h1v2h-1zM52 158h1v2h-1zM52 439h1v2h-1zM53 157h1v1h-1zM53 441h1v1h-1zM54 155h1v2h-1zM54 442h1v2h-1zM55 153h1v2h-1zM55 444h1v1h-1zM56 152h1v1h-1zM56 445h1v2h-1zM57 150h1v2h-1zM57 447h1v2h-1zM58 149h1v1h-1zM58 449h1v1h-1zM59 147h1v2h-1zM59 450h1v2h-1zM60 146h1v1h-1zM60 287h1v2h-1zM60 290h1v19h-1zM60 310h1v1h-1zM60 452h1v1h-1zM61 144h1v2h-1zM61 270h1v17h-1zM61 311h1v17h-1zM61 453h1v2h-1zM62 143h1v1h-1zM62 264h1v4h-1zM62 269h1v1h-1zM62 328h1v2h-1zM62 331h1v3h-1zM62 455h1v1h-1zM63 141h1v2h-1zM63 260h1v4h-1zM63 334h1v4h-1zM63 456h1v2h-1zM64 140h1v1h-1zM64 254h1v6h-1zM64 338h1v6h-1zM64 458h1v1h-1zM65 138h1v2h-1zM65 249h1v5h-1zM65 344h1v6h-1zM65 459h1v2h-1zM66 136h1v2h-1zM66 244h1v4h-1zM66 351h1v3h-1zM66 461h1v1h-1zM67 135h1v1h-1zM67 240h1v4h-1zM67 354h1v5h-1zM67 462h1v2h-1zM68 133h1v2h-1zM68 236h1v4h-1zM68 359h1v4h-1zM68 464h1v2h-1zM69 132h1v1h-1zM69 232h1v4h-1zM69 363h1v4h-1zM69 466h1v1h-1zM70 130h1v2h-1zM70 229h1v3h-1zM70 367h1v2h-1zM70 467h1v1h-1zM71 129h1v1h-1zM71 227h1v1h-1zM71 369h1v1h-1zM71 468h1v2h-1zM72 128h1v1h-1zM72 224h1v3h-1zM72 372h1v3h-1zM72 470h1v1h-1zM73 126h1v2h-1zM73 220h1v4h-1zM73 375h1v4h-1zM73 471h1v1h-1zM74 125h1v1h-1zM74 217h1v3h-1zM74 379h1v3h-1zM74 472h1v2h-1zM75 124h1v1h-1zM75 214h1v3h-1zM75 288h1v2h-1zM75 291h1v8h-1zM75 300h1v8h-1zM75 309h1v1h-1zM75 382h1v2h-1zM75 474h1v1h-1zM76 123h1v1h-1zM76 212h1v2h-1zM76 272h1v16h-1zM76 310h1v16h-1zM76 384h1v3h-1zM76 475h1v1h-1zM77 122h1v1h-1zM77 209h1v3h-1zM77 265h1v5h-1zM77 271h1v1h-1zM77 326h1v2h-1zM77 329h1v5h-1zM77 387h1v2h-1zM77 476h1v1h-1zM78 121h1v1h-1zM78 207h1v1h-1zM78 259h1v6h-1zM78 334h1v5h-1zM78 389h1v1h-1zM78 477h1v1h-1zM79 120h1v1h-1zM79 205h1v2h-1zM79 255h1v4h-1zM79 339h1v4h-1zM79 391h1v2h-1zM79 478h1v1h-1zM80 119h1v1h-1zM80 203h1v2h-1zM80 252h1v3h-1zM80 343h1v4h-1zM80 393h1v2h-1zM80 479h1v1h-1zM81 118h1v1h-1zM81 201h1v2h-1zM81 247h1v4h-1zM81 348h1v3h-1zM81 395h1v3h-1zM81 480h1v1h-1zM82 117h1v1h-1zM82 199h1v2h-1zM82 244h1v3h-1zM82 351h1v4h-1zM82 398h1v2h-1zM82 481h1v1h-1zM83 115h1v2h-1zM83 197h1v2h-1zM83 240h1v4h-1zM83 355h1v4h-1zM83 400h1v2h-1zM83 482h1v1h-1zM84 114h1v1h-1zM84 194h1v3h-1zM84 236h1v4h-1zM84 359h1v3h-1zM84 402h1v2h-1zM84 483h1v2h-1zM85 113h1v1h-1zM85 192h1v2h-1zM85 233h1v3h-1zM85 362h1v4h-1zM85 404h1v2h-1zM85 485h1v1h-1zM86 111h1v2h-1zM86 190h1v2h-1zM86 229h1v3h-1zM86 367h1v3h-1zM86 406h1v2h-1zM86 486h1v1h-1zM87 110h1v1h-1zM87 188h1v1h-1zM87 227h1v2h-1zM87 370h1v2h-1zM87 408h1v1h-1zM87 487h1v2h-1zM88 109h1v1h-1zM88 187h1v1h-1zM88 225h1v2h-1zM88 372h1v2h-1zM88 410h1v2h-1zM88 489h1v1h-1zM89 185h1v2h-1zM89 221h1v4h-1zM89 374h1v3h-1zM89 412h1v2h-1zM89 490h1v1h-1zM90 107h1v1h-1zM90 183h1v2h-1zM90 217h1v4h-1zM90 377h1v4h-1zM90 414h1v2h-1zM90 491h1v1h-1zM91 106h1v1h-1zM91 109h1v1h-1zM91 181h1v2h-1zM91 214h1v3h-1zM91 381h1v4h-1zM91 416h1v2h-1zM91 492h1v1h-1zM92 105h1v1h-1zM92 110h1v1h-1zM92 180h1v1h-1zM92 212h1v1h-1zM92 386h1v1h-1zM92 418h1v1h-1zM92 493h1v1h-1zM93 104h1v1h-1zM93 111h1v1h-1zM93 178h1v2h-1zM93 192h1v1h-1zM93 210h1v2h-1zM93 387h1v2h-1zM93 419h1v2h-1zM93 494h1v1h-1zM94 103h1v1h-1zM94 112h1v1h-1zM94 176h1v2h-1zM94 209h1v1h-1zM94 389h1v2h-1zM94 421h1v2h-1zM94 495h1v1h-1zM95 102h1v1h-1zM95 174h1v2h-1zM95 206h1v2h-1zM95 391h1v2h-1zM95 423h1v2h-1zM95 496h1v1h-1zM96 101h1v1h-1zM96 173h1v1h-1zM96 204h1v2h-1zM96 393h1v2h-1zM96 425h1v1h-1zM96 497h1v1h-1zM97 100h1v1h-1zM97 114h1v1h-1zM97 172h1v1h-1zM97 202h1v2h-1zM97 395h1v2h-1zM97 426h1v1h-1zM97 498h1v1h-1zM98 99h1v1h-1zM98 115h1v1h-1zM98 170h1v1h-1zM98 200h1v2h-1zM98 397h1v2h-1zM98 428h1v1h-1zM98 499h1v1h-1zM99 98h1v1h-1zM99 116h1v1h-1zM99 169h1v1h-1zM99 198h1v2h-1zM99 399h1v2h-1zM99 429h1v1h-1zM99 500h1v1h-1zM100 97h1v1h-1zM100 117h1v1h-1zM100 167h1v2h-1zM100 196h1v2h-1zM100 401h1v2h-1zM100 430h1v2h-1zM100 501h1v1h-1zM101 96h1v1h-1zM101 118h1v1h-1zM101 166h1v1h-1zM101 173h1v1h-1zM101 194h1v2h-1zM101 404h1v1h-1zM101 432h1v1h-1zM101 502h1v1h-1zM102 95h1v1h-1zM102 119h1v1h-1zM102 164h1v2h-1zM102 174h1v1h-1zM102 192h1v2h-1zM102 405h1v2h-1zM102 433h1v2h-1zM102 503h1v1h-1zM103 94h1v1h-1zM103 120h1v1h-1zM103 163h1v1h-1zM103 190h1v2h-1zM103 407h1v2h-1zM103 424h1v1h-1zM103 435h1v1h-1zM103 504h1v1h-1zM104 93h1v1h-1zM104 121h1v1h-1zM104 162h1v1h-1zM104 188h1v2h-1zM104 409h1v2h-1zM104 436h1v1h-1zM104 505h1v1h-1zM105 92h1v1h-1zM105 122h1v1h-1zM105 160h1v2h-1zM105 176h1v1h-1zM105 187h1v1h-1zM105 283h1v16h-1zM105 300h1v16h-1zM105 411h1v1h-1zM105 437h1v2h-1zM105 506h1v1h-1zM106 91h1v1h-1zM106 159h1v1h-1zM106 177h1v1h-1zM106 185h1v2h-1zM106 276h1v7h-1zM106 316h1v7h-1zM106 412h1v2h-1zM106 439h1v1h-1zM106 507h1v1h-1zM107 90h1v1h-1zM107 157h1v2h-1zM107 184h1v1h-1zM107 269h1v7h-1zM107 323h1v6h-1zM107 414h1v1h-1zM107 440h1v2h-1zM108 89h1v1h-1zM108 124h1v1h-1zM108 156h1v1h-1zM108 182h1v2h-1zM108 263h1v6h-1zM108 329h1v7h-1zM108 415h1v2h-1zM108 442h1v1h-1zM108 509h1v1h-1zM109 88h1v1h-1zM109 125h1v1h-1zM109 155h1v1h-1zM109 181h1v1h-1zM109 258h1v5h-1zM109 336h1v5h-1zM109 417h1v1h-1zM109 443h1v1h-1zM109 507h1v1h-1zM109 510h1v1h-1zM110 87h1v1h-1zM110 126h1v1h-1zM110 153h1v2h-1zM110 180h1v1h-1zM110 254h1v4h-1zM110 341h1v4h-1zM110 418h1v2h-1zM110 444h1v2h-1zM110 506h1v1h-1zM110 511h1v1h-1zM111 127h1v1h-1zM111 152h1v1h-1zM111 177h1v2h-1zM111 251h1v3h-1zM111 345h1v3h-1zM111 421h1v1h-1zM111 446h1v1h-1zM111 505h1v1h-1zM112 128h1v1h-1zM112 151h1v1h-1zM112 175h1v2h-1zM112 248h1v3h-1zM112 348h1v3h-1zM112 422h1v2h-1zM112 447h1v1h-1zM112 504h1v1h-1zM113 85h1v1h-1zM113 129h1v1h-1zM113 149h1v2h-1zM113 156h1v1h-1zM113 174h1v1h-1zM113 245h1v3h-1zM113 351h1v3h-1zM113 424h1v1h-1zM113 442h1v1h-1zM113 448h1v1h-1zM113 502h1v2h-1zM113 513h1v1h-1zM114 84h1v1h-1zM114 130h1v1h-1zM114 148h1v1h-1zM114 157h1v1h-1zM114 173h1v1h-1zM114 241h1v4h-1zM114 354h1v4h-1zM114 425h1v1h-1zM114 441h1v1h-1zM114 449h1v2h-1zM114 501h1v1h-1zM114 514h1v1h-1zM115 131h1v1h-1zM115 147h1v1h-1zM115 171h1v2h-1zM115 238h1v3h-1zM115 358h1v3h-1zM115 426h1v1h-1zM115 451h1v1h-1zM115 500h1v1h-1zM116 146h1v1h-1zM116 170h1v1h-1zM116 235h1v3h-1zM116 361h1v3h-1zM116 427h1v2h-1zM116 452h1v1h-1zM116 499h1v1h-1zM117 82h1v1h-1zM117 145h1v1h-1zM117 159h1v1h-1zM117 169h1v1h-1zM117 232h1v3h-1zM117 364h1v3h-1zM117 429h1v1h-1zM117 439h1v1h-1zM117 453h1v1h-1zM117 498h1v1h-1zM117 516h1v1h-1zM118 81h1v1h-1zM118 133h1v1h-1zM118 144h1v1h-1zM118 160h1v1h-1zM118 168h1v1h-1zM118 229h1v3h-1zM118 367h1v3h-1zM118 430h1v1h-1zM118 438h1v1h-1zM118 454h1v1h-1zM118 497h1v1h-1zM118 517h1v1h-1zM119 80h1v1h-1zM119 134h1v1h-1zM119 142h1v2h-1zM119 166h1v2h-1zM119 226h1v3h-1zM119 370h1v3h-1zM119 425h1v1h-1zM119 431h1v2h-1zM119 455h1v2h-1zM119 496h1v1h-1zM119 518h1v1h-1zM120 79h1v1h-1zM120 135h1v1h-1zM120 141h1v1h-1zM120 165h1v1h-1zM120 224h1v2h-1zM120 373h1v2h-1zM120 424h1v1h-1zM120 433h1v1h-1zM120 457h1v1h-1zM120 495h1v1h-1zM120 519h1v1h-1zM121 78h1v1h-1zM121 136h1v1h-1zM121 140h1v1h-1zM121 164h1v1h-1zM121 222h1v2h-1zM121 375h1v2h-1zM121 434h1v1h-1zM121 458h1v1h-1zM121 494h1v1h-1zM121 520h1v1h-1zM122 77h1v1h-1zM122 137h1v1h-1zM122 139h1v1h-1zM122 163h1v1h-1zM122 219h1v1h-1zM122 221h1v1h-1zM122 377h1v2h-1zM122 435h1v1h-1zM122 459h1v1h-1zM122 492h1v2h-1zM122 521h1v1h-1zM123 76h1v1h-1zM123 138h1v1h-1zM123 161h1v1h-1zM123 217h1v2h-1zM123 379h1v2h-1zM123 422h1v1h-1zM123 437h1v1h-1zM123 460h1v1h-1zM123 491h1v1h-1zM123 522h1v1h-1zM124 75h1v1h-1zM124 136h1v2h-1zM124 139h1v1h-1zM124 160h1v1h-1zM124 215h1v2h-1zM124 381h1v2h-1zM124 438h1v1h-1zM124 459h1v1h-1zM124 461h1v1h-1zM124 490h1v1h-1zM124 523h1v1h-1zM125 74h1v1h-1zM125 135h1v1h-1zM125 140h1v1h-1zM125 158h1v2h-1zM125 213h1v2h-1zM125 383h1v2h-1zM125 439h1v1h-1zM125 458h1v1h-1zM125 462h1v2h-1zM125 489h1v1h-1zM125 524h1v1h-1zM126 134h1v1h-1zM126 141h1v1h-1zM126 157h1v1h-1zM126 211h1v2h-1zM126 385h1v2h-1zM126 420h1v1h-1zM126 440h1v2h-1zM126 457h1v1h-1zM126 464h1v1h-1zM126 488h1v1h-1zM127 133h1v1h-1zM127 142h1v1h-1zM127 156h1v1h-1zM127 209h1v2h-1zM127 387h1v2h-1zM127 419h1v1h-1zM127 442h1v1h-1zM127 456h1v1h-1zM127 465h1v1h-1zM127 487h1v1h-1zM128 72h1v1h-1zM128 132h1v1h-1zM128 155h1v1h-1zM128 207h1v2h-1zM128 389h1v2h-1zM128 443h1v1h-1zM128 466h1v1h-1zM128 486h1v1h-1zM128 526h1v1h-1zM129 71h1v1h-1zM129 131h1v1h-1zM129 154h1v1h-1zM129 205h1v2h-1zM129 391h1v2h-1zM129 444h1v1h-1zM129 467h1v1h-1zM129 485h1v1h-1zM129 527h1v1h-1zM130 130h1v1h-1zM130 144h1v1h-1zM130 152h1v2h-1zM130 203h1v2h-1zM130 393h1v2h-1zM130 417h1v1h-1zM130 445h1v1h-1zM130 454h1v1h-1zM130 468h1v1h-1zM130 484h1v1h-1zM131 129h1v1h-1zM131 145h1v1h-1zM131 151h1v1h-1zM131 202h1v1h-1zM131 395h1v2h-1zM131 446h1v2h-1zM131 453h1v1h-1zM131 469h1v1h-1zM131 483h1v1h-1zM132 69h1v1h-1zM132 128h1v1h-1zM132 146h1v1h-1zM132 150h1v1h-1zM132 200h1v2h-1zM132 397h1v2h-1zM132 448h1v1h-1zM132 452h1v1h-1zM132 470h1v1h-1zM132 481h1v2h-1zM132 529h1v1h-1zM133 127h1v1h-1zM133 147h1v1h-1zM133 149h1v1h-1zM133 199h1v1h-1zM133 399h1v1h-1zM133 415h1v1h-1zM133 449h1v1h-1zM133 451h1v1h-1zM133 471h1v1h-1zM133 480h1v1h-1zM134 126h1v1h-1zM134 148h1v1h-1zM134 197h1v2h-1zM134 400h1v2h-1zM134 450h1v1h-1zM134 472h1v1h-1zM134 479h1v1h-1zM135 67h1v1h-1zM135 125h1v1h-1zM135 147h1v1h-1zM135 196h1v1h-1zM135 402h1v1h-1zM135 451h1v1h-1zM135 473h1v1h-1zM135 478h1v1h-1zM135 531h1v1h-1zM136 146h1v1h-1zM136 194h1v2h-1zM136 403h1v2h-1zM136 413h1v1h-1zM136 452h1v1h-1zM136 477h1v1h-1zM137 145h1v1h-1zM137 192h1v2h-1zM137 405h1v2h-1zM137 412h1v1h-1zM137 453h1v1h-1zM137 476h1v1h-1zM138 123h1v1h-1zM138 144h1v1h-1zM138 191h1v1h-1zM138 407h1v1h-1zM138 454h1v1h-1zM138 475h1v1h-1zM139 122h1v1h-1zM139 124h1v1h-1zM139 143h1v1h-1zM139 189h1v2h-1zM139 408h1v2h-1zM139 455h1v1h-1zM139 474h1v1h-1zM139 476h1v1h-1zM140 64h1v1h-1zM140 121h1v1h-1zM140 125h1v1h-1zM140 142h1v1h-1zM140 188h1v1h-1zM140 410h1v1h-1zM140 456h1v1h-1zM140 473h1v1h-1zM140 477h1v1h-1zM140 534h1v1h-1zM141 120h1v1h-1zM141 126h1v1h-1zM141 141h1v1h-1zM141 186h1v2h-1zM141 411h1v2h-1zM141 457h1v1h-1zM141 472h1v1h-1zM141 478h1v1h-1zM142 127h1v1h-1zM142 140h1v1h-1zM142 185h1v1h-1zM142 413h1v1h-1zM142 458h1v1h-1zM142 470h1v2h-1zM143 62h1v1h-1zM143 128h1v2h-1zM143 139h1v1h-1zM143 184h1v1h-1zM143 414h1v1h-1zM143 459h1v1h-1zM143 469h1v1h-1zM143 536h1v1h-1zM144 118h1v1h-1zM144 130h1v1h-1zM144 138h1v1h-1zM144 182h1v2h-1zM144 415h1v2h-1zM144 460h1v1h-1zM144 468h1v1h-1zM144 480h1v1h-1zM145 117h1v1h-1zM145 131h1v1h-1zM145 137h1v1h-1zM145 181h1v1h-1zM145 417h1v1h-1zM145 461h1v1h-1zM145 467h1v1h-1zM145 481h1v1h-1zM146 60h1v1h-1zM146 116h1v1h-1zM146 132h1v1h-1zM146 136h1v1h-1zM146 180h1v1h-1zM146 418h1v1h-1zM146 462h1v1h-1zM146 466h1v1h-1zM146 482h1v1h-1zM146 538h1v1h-1zM147 115h1v1h-1zM147 133h1v1h-1zM147 135h1v1h-1zM147 179h1v1h-1zM147 419h1v1h-1zM147 463h1v1h-1zM147 465h1v1h-1zM147 483h1v1h-1zM148 114h1v1h-1zM148 134h1v1h-1zM148 177h1v2h-1zM148 420h1v1h-1zM148 464h1v1h-1zM148 484h1v1h-1zM149 58h1v1h-1zM149 133h1v1h-1zM149 176h1v1h-1zM149 421h1v2h-1zM149 465h1v1h-1zM149 540h1v1h-1zM150 132h1v1h-1zM150 175h1v1h-1zM150 423h1v1h-1zM150 466h1v1h-1zM151 112h1v1h-1zM151 131h1v1h-1zM151 133h1v1h-1zM151 174h1v1h-1zM151 424h1v1h-1zM151 467h1v1h-1zM151 486h1v1h-1zM152 56h1v1h-1zM152 111h1v1h-1zM152 134h1v1h-1zM152 173h1v1h-1zM152 425h1v1h-1zM152 487h1v1h-1zM152 542h1v1h-1zM153 135h1v2h-1zM153 171h1v2h-1zM153 426h1v2h-1zM154 129h1v1h-1zM154 137h1v1h-1zM154 170h1v1h-1zM154 428h1v1h-1zM154 469h1v1h-1zM155 109h1v1h-1zM155 111h1v2h-1zM155 128h1v1h-1zM155 138h1v1h-1zM155 169h1v1h-1zM155 429h1v1h-1zM155 470h1v1h-1zM155 486h1v2h-1zM155 489h1v1h-1zM156 108h1v1h-1zM156 113h1v1h-1zM156 127h1v1h-1zM156 139h1v1h-1zM156 168h1v1h-1zM156 430h1v1h-1zM156 471h1v1h-1zM156 485h1v1h-1zM156 490h1v1h-1zM157 53h1v1h-1zM157 114h1v1h-1zM157 126h1v1h-1zM157 140h1v1h-1zM157 167h1v1h-1zM157 431h1v1h-1zM157 472h1v1h-1zM157 484h1v1h-1zM157 545h1v1h-1zM158 115h1v2h-1zM158 141h1v1h-1zM158 166h1v1h-1zM158 432h1v1h-1zM158 482h1v2h-1zM159 106h1v1h-1zM159 117h1v1h-1zM159 142h1v1h-1zM159 165h1v1h-1zM159 433h1v1h-1zM159 481h1v1h-1zM159 492h1v1h-1zM160 118h1v1h-1zM160 124h1v1h-1zM160 143h1v2h-1zM160 164h1v1h-1zM160 434h1v1h-1zM160 474h1v1h-1zM160 480h1v1h-1zM161 119h1v2h-1zM161 123h1v1h-1zM161 145h1v1h-1zM161 163h1v1h-1zM161 435h1v1h-1zM161 475h1v1h-1zM161 478h1v2h-1zM162 104h1v1h-1zM162 121h1v1h-1zM162 146h1v1h-1zM162 162h1v1h-1zM162 436h1v1h-1zM162 477h1v1h-1zM162 494h1v1h-1zM163 103h1v1h-1zM163 147h1v1h-1zM163 161h1v1h-1zM163 437h1v1h-1zM163 495h1v1h-1zM164 121h1v1h-1zM164 148h1v1h-1zM164 160h1v1h-1zM164 438h1v1h-1zM164 477h1v1h-1zM165 120h1v1h-1zM165 149h1v1h-1zM165 159h1v1h-1zM165 439h1v1h-1zM165 478h1v1h-1zM166 101h1v1h-1zM166 150h1v2h-1zM166 158h1v1h-1zM166 440h1v1h-1zM166 497h1v1h-1zM167 152h1v1h-1zM167 157h1v1h-1zM167 441h1v1h-1zM168 118h1v1h-1zM168 153h1v1h-1zM168 156h1v1h-1zM168 442h1v1h-1zM168 480h1v1h-1zM169 99h1v1h-1zM169 117h1v1h-1zM169 155h1v1h-1zM169 443h1v1h-1zM169 481h1v1h-1zM169 499h1v1h-1zM170 116h1v1h-1zM170 444h1v1h-1zM170 482h1v1h-1zM172 99h1v2h-1zM172 498h1v2h-1zM173 96h1v1h-1zM173 101h1v2h-1zM173 114h1v1h-1zM173 152h1v1h-1zM173 446h1v1h-1zM173 484h1v1h-1zM173 497h1v1h-1zM173 502h1v1h-1zM174 103h1v1h-1zM174 113h1v1h-1zM174 151h1v1h-1zM174 447h1v1h-1zM174 485h1v1h-1zM174 496h1v1h-1zM175 104h1v2h-1zM175 150h1v1h-1zM175 448h1v1h-1zM175 494h1v2h-1zM176 106h1v2h-1zM176 149h1v1h-1zM176 449h1v1h-1zM176 493h1v1h-1zM177 108h1v2h-1zM177 492h1v1h-1zM178 490h1v2h-1zM179 147h1v1h-1zM179 451h1v1h-1zM179 489h1v1h-1zM180 92h1v1h-1zM180 146h1v1h-1zM180 452h1v1h-1zM180 506h1v1h-1zM181 109h1v1h-1zM181 145h1v1h-1zM181 453h1v1h-1zM181 489h1v1h-1zM184 107h1v1h-1zM184 143h1v1h-1zM184 455h1v1h-1zM184 491h1v1h-1zM185 142h1v1h-1zM185 456h1v1h-1zM187 88h1v1h-1zM187 105h1v1h-1zM187 493h1v1h-1zM187 510h1v1h-1zM188 140h1v1h-1zM188 458h1v1h-1zM189 88h1v1h-1zM189 510h1v1h-1zM190 89h1v2h-1zM190 508h1v2h-1zM191 91h1v2h-1zM191 138h1v1h-1zM191 460h1v1h-1zM191 506h1v2h-1zM192 93h1v2h-1zM192 504h1v2h-1zM193 95h1v2h-1zM193 503h1v1h-1zM194 97h1v2h-1zM194 501h1v2h-1zM195 99h1v1h-1zM195 499h1v2h-1zM196 135h1v1h-1zM196 463h1v1h-1zM199 133h1v1h-1zM199 465h1v1h-1zM202 131h1v1h-1zM202 467h1v1h-1zM208 79h1v2h-1zM208 518h1v2h-1zM209 81h1v2h-1zM209 516h1v2h-1zM210 83h1v2h-1zM210 513h1v3h-1zM211 85h1v3h-1zM211 511h1v2h-1zM212 88h1v2h-1zM212 509h1v2h-1zM213 90h1v1h-1zM213 508h1v1h-1zM214 30h1v1h-1zM215 31h1v3h-1zM216 34h1v3h-1zM217 37h1v4h-1zM218 41h1v3h-1zM219 44h1v3h-1zM220 47h1v3h-1zM221 50h1v3h-1zM222 53h1v3h-1zM223 56h1v3h-1zM224 59h1v4h-1zM225 63h1v3h-1zM226 66h1v3h-1zM227 69h1v2h-1zM228 72h1v2h-1zM228 525h1v2h-1zM229 74h1v3h-1zM229 510h1v1h-1zM229 522h1v3h-1zM230 77h1v4h-1zM230 507h1v3h-1zM230 518h1v4h-1zM231 81h1v3h-1zM231 504h1v3h-1zM231 515h1v3h-1zM232 84h1v1h-1zM232 501h1v3h-1zM232 514h1v1h-1zM233 498h1v3h-1zM234 495h1v3h-1zM235 492h1v3h-1zM236 489h1v3h-1zM237 486h1v3h-1zM238 484h1v2h-1zM238 574h1v2h-1zM239 570h1v4h-1zM240 566h1v4h-1zM241 561h1v5h-1zM242 557h1v4h-1zM243 553h1v4h-1zM244 549h1v4h-1zM245 84h1v4h-1zM245 544h1v5h-1zM246 88h1v4h-1zM246 540h1v4h-1zM247 92h1v4h-1zM247 536h1v4h-1zM248 67h1v2h-1zM248 96h1v4h-1zM248 530h1v2h-1zM248 534h1v2h-1zM249 69h1v4h-1zM249 100h1v4h-1zM249 525h1v5h-1zM250 73h1v5h-1zM250 104h1v4h-1zM250 521h1v4h-1zM251 78h1v2h-1zM251 108h1v3h-1zM251 519h1v2h-1zM258 137h1v2h-1zM259 139h1v4h-1zM260 143h1v4h-1zM261 147h1v2h-1zM268 63h1v4h-1zM268 532h1v4h-1zM269 67h1v6h-1zM269 526h1v6h-1zM270 73h1v4h-1zM270 522h1v4h-1zM280 132h1v3h-1zM281 135h1v6h-1zM282 141h1v4h-1zM289 61h1v7h-1zM289 531h1v7h-1zM290 68h1v7h-1zM290 524h1v7h-1zM308 68h1v7h-1zM308 524h1v7h-1zM309 61h1v7h-1zM309 531h1v7h-1zM325 143h1v4h-1zM326 137h1v6h-1zM327 134h1v3h-1zM328 73h1v4h-1zM328 522h1v4h-1zM329 67h1v6h-1zM329 526h1v6h-1zM330 63h1v4h-1zM330 532h1v4h-1zM347 78h1v2h-1zM347 488h1v2h-1zM347 519h1v2h-1zM348 73h1v5h-1zM348 490h1v4h-1zM348 521h1v4h-1zM349 69h1v4h-1zM349 494h1v4h-1zM349 525h1v5h-1zM350 63h1v2h-1zM350 67h1v2h-1zM350 498h1v4h-1zM350 530h1v2h-1zM351 59h1v4h-1zM351 502h1v4h-1zM352 55h1v4h-1zM352 152h1v2h-1zM352 506h1v4h-1zM353 50h1v5h-1zM353 149h1v3h-1zM353 510h1v4h-1zM354 46h1v4h-1zM354 146h1v3h-1zM354 514h1v1h-1zM355 42h1v4h-1zM355 143h1v3h-1zM356 38h1v4h-1zM356 141h1v2h-1zM357 33h1v5h-1zM358 29h1v4h-1zM359 25h1v4h-1zM360 23h1v2h-1zM360 113h1v2h-1zM361 110h1v3h-1zM362 107h1v3h-1zM363 104h1v3h-1zM364 101h1v3h-1zM365 98h1v3h-1zM366 84h1v1h-1zM366 95h1v3h-1zM366 514h1v1h-1zM367 81h1v3h-1zM367 92h1v3h-1zM367 515h1v3h-1zM368 77h1v4h-1zM368 89h1v3h-1zM368 518h1v4h-1zM369 74h1v3h-1zM369 88h1v1h-1zM369 522h1v3h-1zM370 72h1v2h-1zM370 525h1v2h-1zM371 528h1v2h-1zM372 530h1v3h-1zM373 533h1v3h-1zM374 536h1v4h-1zM375 540h1v3h-1zM376 543h1v3h-1zM377 546h1v3h-1zM378 549h1v3h-1zM379 552h1v3h-1zM380 555h1v3h-1zM381 558h1v4h-1zM382 562h1v3h-1zM383 565h1v3h-1zM384 568h1v1h-1zM385 90h1v1h-1zM385 508h1v1h-1zM386 88h1v2h-1zM386 170h1v1h-1zM386 509h1v2h-1zM387 85h1v3h-1zM387 168h1v2h-1zM387 511h1v2h-1zM388 83h1v2h-1zM388 167h1v1h-1zM388 513h1v3h-1zM389 81h1v2h-1zM389 165h1v2h-1zM389 516h1v2h-1zM390 80h1v1h-1zM390 164h1v1h-1zM390 518h1v1h-1zM391 163h1v1h-1zM392 161h1v2h-1zM393 160h1v1h-1zM399 133h1v1h-1zM399 465h1v1h-1zM402 135h1v1h-1zM402 463h1v1h-1zM403 98h1v2h-1zM404 96h1v2h-1zM404 185h1v1h-1zM404 499h1v2h-1zM405 94h1v2h-1zM405 184h1v1h-1zM405 501h1v2h-1zM406 93h1v1h-1zM406 183h1v1h-1zM406 503h1v2h-1zM407 91h1v2h-1zM407 138h1v1h-1zM407 182h1v1h-1zM407 460h1v1h-1zM407 505h1v2h-1zM408 89h1v2h-1zM408 180h1v2h-1zM408 507h1v2h-1zM409 179h1v1h-1zM409 509h1v1h-1zM410 140h1v1h-1zM410 178h1v1h-1zM410 458h1v1h-1zM411 105h1v1h-1zM411 177h1v1h-1zM411 493h1v1h-1zM412 176h1v1h-1zM413 142h1v1h-1zM413 456h1v1h-1zM414 107h1v1h-1zM414 143h1v1h-1zM414 455h1v1h-1zM414 491h1v1h-1zM417 109h1v1h-1zM417 145h1v1h-1zM417 453h1v1h-1zM417 489h1v1h-1zM418 92h1v1h-1zM418 146h1v1h-1zM418 452h1v1h-1zM418 506h1v1h-1zM419 109h1v1h-1zM419 147h1v1h-1zM419 451h1v1h-1zM420 107h1v2h-1zM420 148h1v1h-1zM420 450h1v1h-1zM421 106h1v1h-1zM421 489h1v2h-1zM422 105h1v1h-1zM422 491h1v2h-1zM423 103h1v2h-1zM423 150h1v1h-1zM423 448h1v1h-1zM423 493h1v1h-1zM424 102h1v1h-1zM424 113h1v1h-1zM424 151h1v1h-1zM424 447h1v1h-1zM424 485h1v1h-1zM424 494h1v2h-1zM425 96h1v1h-1zM425 101h1v1h-1zM425 114h1v1h-1zM425 152h1v1h-1zM425 446h1v1h-1zM425 484h1v1h-1zM425 496h1v2h-1zM425 502h1v1h-1zM426 99h1v2h-1zM426 115h1v1h-1zM426 483h1v1h-1zM426 498h1v2h-1zM428 154h1v1h-1zM429 99h1v1h-1zM429 117h1v1h-1zM429 155h1v1h-1zM429 443h1v1h-1zM429 481h1v1h-1zM429 499h1v1h-1zM430 118h1v1h-1zM430 156h1v1h-1zM430 442h1v1h-1zM430 445h1v1h-1zM430 480h1v1h-1zM431 157h1v1h-1zM431 441h1v1h-1zM431 446h1v1h-1zM432 101h1v1h-1zM432 158h1v1h-1zM432 440h1v1h-1zM432 447h1v2h-1zM432 497h1v1h-1zM433 120h1v1h-1zM433 159h1v1h-1zM433 439h1v1h-1zM433 449h1v1h-1zM433 478h1v1h-1zM434 121h1v1h-1zM434 160h1v1h-1zM434 438h1v1h-1zM434 450h1v1h-1zM434 477h1v1h-1zM435 103h1v1h-1zM435 161h1v1h-1zM435 437h1v1h-1zM435 451h1v1h-1zM435 495h1v1h-1zM436 104h1v1h-1zM436 121h1v1h-1zM436 162h1v1h-1zM436 436h1v1h-1zM436 452h1v1h-1zM436 477h1v1h-1zM436 494h1v1h-1zM437 119h1v2h-1zM437 123h1v1h-1zM437 163h1v1h-1zM437 435h1v1h-1zM437 453h1v1h-1zM437 475h1v1h-1zM437 478h1v2h-1zM438 118h1v1h-1zM438 124h1v1h-1zM438 164h1v1h-1zM438 434h1v1h-1zM438 454h1v1h-1zM438 474h1v1h-1zM438 480h1v1h-1zM439 106h1v1h-1zM439 117h1v1h-1zM439 125h1v1h-1zM439 165h1v1h-1zM439 433h1v1h-1zM439 455h1v2h-1zM439 473h1v1h-1zM439 481h1v1h-1zM439 492h1v1h-1zM440 115h1v2h-1zM440 166h1v1h-1zM440 432h1v1h-1zM440 457h1v1h-1zM440 482h1v2h-1zM441 53h1v1h-1zM441 114h1v1h-1zM441 167h1v1h-1zM441 431h1v1h-1zM441 458h1v1h-1zM441 484h1v1h-1zM441 545h1v1h-1zM442 108h1v1h-1zM442 113h1v1h-1zM442 127h1v1h-1zM442 168h1v1h-1zM442 430h1v1h-1zM442 459h1v1h-1zM442 471h1v1h-1zM442 485h1v1h-1zM442 490h1v1h-1zM443 109h1v1h-1zM443 111h1v2h-1zM443 128h1v1h-1zM443 169h1v1h-1zM443 429h1v1h-1zM443 460h1v1h-1zM443 470h1v1h-1zM443 486h1v2h-1zM443 489h1v1h-1zM444 55h1v1h-1zM444 129h1v1h-1zM444 170h1v1h-1zM444 428h1v1h-1zM444 461h1v1h-1zM444 469h1v1h-1zM444 543h1v1h-1zM445 130h1v1h-1zM445 171h1v2h-1zM445 426h1v2h-1zM445 462h1v2h-1zM445 468h1v1h-1zM446 111h1v1h-1zM446 173h1v1h-1zM446 425h1v1h-1zM446 464h1v1h-1zM446 487h1v1h-1zM447 112h1v1h-1zM447 174h1v1h-1zM447 424h1v1h-1zM447 465h1v1h-1zM447 486h1v1h-1zM448 113h1v1h-1zM448 132h1v1h-1zM448 175h1v1h-1zM448 423h1v1h-1zM448 466h1v1h-1zM448 485h1v1h-1zM449 58h1v1h-1zM449 133h1v1h-1zM449 176h1v1h-1zM449 421h1v2h-1zM449 465h1v1h-1zM449 540h1v1h-1zM450 134h1v1h-1zM450 177h1v2h-1zM450 420h1v1h-1zM450 464h1v1h-1zM451 115h1v1h-1zM451 133h1v1h-1zM451 135h1v1h-1zM451 179h1v1h-1zM451 419h1v1h-1zM451 463h1v1h-1zM451 465h1v1h-1zM451 483h1v1h-1zM452 60h1v1h-1zM452 116h1v1h-1zM452 132h1v1h-1zM452 136h1v1h-1zM452 180h1v1h-1zM452 418h1v1h-1zM452 462h1v1h-1zM452 466h1v1h-1zM452 482h1v1h-1zM452 538h1v1h-1zM453 117h1v1h-1zM453 131h1v1h-1zM453 137h1v1h-1zM453 181h1v1h-1zM453 417h1v1h-1zM453 461h1v1h-1zM453 467h1v1h-1zM453 481h1v1h-1zM454 118h1v1h-1zM454 130h1v1h-1zM454 138h1v1h-1zM454 182h1v2h-1zM454 415h1v2h-1zM454 460h1v1h-1zM454 468h1v1h-1zM454 480h1v1h-1zM455 62h1v1h-1zM455 128h1v2h-1zM455 139h1v1h-1zM455 184h1v1h-1zM455 414h1v1h-1zM455 459h1v1h-1zM455 469h1v1h-1zM455 536h1v1h-1zM456 127h1v1h-1zM456 140h1v1h-1zM456 185h1v1h-1zM456 413h1v1h-1zM456 458h1v1h-1zM456 470h1v2h-1zM457 120h1v1h-1zM457 126h1v1h-1zM457 141h1v1h-1zM457 186h1v2h-1zM457 411h1v2h-1zM457 457h1v1h-1zM457 472h1v1h-1zM457 478h1v1h-1zM458 64h1v1h-1zM458 121h1v1h-1zM458 125h1v1h-1zM458 142h1v1h-1zM458 188h1v1h-1zM458 410h1v1h-1zM458 456h1v1h-1zM458 473h1v1h-1zM458 477h1v1h-1zM458 534h1v1h-1zM459 122h1v1h-1zM459 124h1v1h-1zM459 143h1v1h-1zM459 189h1v2h-1zM459 408h1v2h-1zM459 455h1v1h-1zM459 474h1v1h-1zM459 476h1v1h-1zM460 123h1v1h-1zM460 144h1v1h-1zM460 191h1v1h-1zM460 407h1v1h-1zM460 454h1v1h-1zM460 475h1v1h-1zM461 66h1v1h-1zM461 122h1v1h-1zM461 124h1v1h-1zM461 145h1v1h-1zM461 186h1v1h-1zM461 192h1v2h-1zM461 405h1v2h-1zM461 453h1v1h-1zM461 474h1v1h-1zM461 532h1v1h-1zM462 121h1v1h-1zM462 146h1v1h-1zM462 185h1v1h-1zM462 194h1v2h-1zM462 403h1v2h-1zM462 452h1v1h-1zM463 120h1v1h-1zM463 147h1v1h-1zM463 196h1v1h-1zM463 402h1v1h-1zM463 451h1v1h-1zM464 119h1v1h-1zM464 126h1v1h-1zM464 148h1v1h-1zM464 197h1v2h-1zM464 400h1v2h-1zM464 450h1v1h-1zM464 472h1v1h-1zM465 118h1v1h-1zM465 127h1v1h-1zM465 147h1v1h-1zM465 149h1v1h-1zM465 183h1v1h-1zM465 199h1v1h-1zM465 399h1v1h-1zM465 449h1v1h-1zM465 451h1v1h-1zM465 471h1v1h-1zM466 69h1v1h-1zM466 116h1v2h-1zM466 128h1v1h-1zM466 146h1v1h-1zM466 150h1v1h-1zM466 200h1v2h-1zM466 397h1v2h-1zM466 448h1v1h-1zM466 452h1v1h-1zM466 470h1v1h-1zM466 529h1v1h-1zM467 70h1v1h-1zM467 115h1v1h-1zM467 129h1v1h-1zM467 145h1v1h-1zM467 151h1v1h-1zM467 202h1v1h-1zM467 395h1v2h-1zM467 446h1v2h-1zM467 453h1v1h-1zM467 469h1v1h-1zM467 528h1v1h-1zM468 114h1v1h-1zM468 130h1v1h-1zM468 144h1v1h-1zM468 152h1v2h-1zM468 181h1v1h-1zM468 203h1v2h-1zM468 393h1v2h-1zM468 445h1v1h-1zM468 454h1v1h-1zM468 468h1v1h-1zM469 113h1v1h-1zM469 131h1v1h-1zM469 143h1v1h-1zM469 154h1v1h-1zM469 180h1v1h-1zM469 205h1v2h-1zM469 391h1v2h-1zM469 444h1v1h-1zM469 455h1v1h-1zM469 467h1v1h-1zM470 72h1v1h-1zM470 112h1v1h-1zM470 132h1v1h-1zM470 155h1v1h-1zM470 207h1v2h-1zM470 389h1v2h-1zM470 443h1v1h-1zM470 466h1v1h-1zM470 526h1v1h-1zM471 73h1v1h-1zM471 111h1v1h-1zM471 133h1v1h-1zM471 156h1v1h-1zM471 209h1v2h-1zM471 387h1v2h-1zM471 442h1v1h-1zM471 465h1v1h-1zM471 525h1v1h-1zM472 110h1v1h-1zM472 134h1v1h-1zM472 141h1v1h-1zM472 157h1v1h-1zM472 178h1v1h-1zM472 211h1v2h-1zM472 385h1v2h-1zM472 440h1v2h-1zM472 457h1v1h-1zM472 464h1v1h-1zM473 109h1v1h-1zM473 135h1v1h-1zM473 140h1v1h-1zM473 158h1v2h-1zM473 213h1v2h-1zM473 383h1v2h-1zM473 439h1v1h-1zM473 458h1v1h-1zM473 462h1v2h-1zM474 75h1v1h-1zM474 108h1v1h-1zM474 136h1v2h-1zM474 139h1v1h-1zM474 160h1v1h-1zM474 215h1v2h-1zM474 381h1v2h-1zM474 438h1v1h-1zM474 459h1v1h-1zM474 461h1v1h-1zM474 523h1v1h-1zM475 76h1v1h-1zM475 106h1v2h-1zM475 138h1v1h-1zM475 161h1v1h-1zM475 176h1v1h-1zM475 217h1v2h-1zM475 379h1v2h-1zM475 437h1v1h-1zM475 460h1v1h-1zM475 522h1v1h-1zM476 77h1v1h-1zM476 105h1v1h-1zM476 139h1v1h-1zM476 163h1v1h-1zM476 219h1v3h-1zM476 377h1v1h-1zM476 435h1v1h-1zM476 459h1v1h-1zM476 461h1v1h-1zM476 521h1v1h-1zM477 78h1v1h-1zM477 104h1v1h-1zM477 140h1v1h-1zM477 164h1v1h-1zM477 222h1v2h-1zM477 375h1v2h-1zM477 434h1v1h-1zM477 458h1v1h-1zM477 462h1v1h-1zM477 520h1v1h-1zM478 79h1v1h-1zM478 103h1v1h-1zM478 141h1v1h-1zM478 165h1v1h-1zM478 174h1v1h-1zM478 224h1v2h-1zM478 373h1v2h-1zM478 433h1v1h-1zM478 457h1v1h-1zM478 463h1v1h-1zM478 519h1v1h-1zM479 80h1v1h-1zM479 102h1v1h-1zM479 142h1v2h-1zM479 166h1v2h-1zM479 173h1v1h-1zM479 226h1v3h-1zM479 370h1v3h-1zM479 431h1v2h-1zM479 455h1v2h-1zM479 464h1v1h-1zM479 518h1v1h-1zM480 81h1v1h-1zM480 101h1v1h-1zM480 144h1v1h-1zM480 160h1v1h-1zM480 168h1v1h-1zM480 229h1v3h-1zM480 367h1v3h-1zM480 430h1v1h-1zM480 438h1v1h-1zM480 454h1v1h-1zM480 465h1v1h-1zM480 517h1v1h-1zM481 82h1v1h-1zM481 100h1v1h-1zM481 145h1v1h-1zM481 159h1v1h-1zM481 169h1v1h-1zM481 232h1v3h-1zM481 364h1v3h-1zM481 429h1v1h-1zM481 439h1v1h-1zM481 453h1v1h-1zM481 516h1v1h-1zM482 83h1v1h-1zM482 99h1v1h-1zM482 146h1v1h-1zM482 170h1v1h-1zM482 235h1v3h-1zM482 361h1v3h-1zM482 427h1v2h-1zM482 452h1v1h-1zM482 515h1v1h-1zM483 98h1v1h-1zM483 147h1v1h-1zM483 172h1v1h-1zM483 238h1v3h-1zM483 358h1v3h-1zM483 426h1v1h-1zM483 451h1v1h-1zM483 467h1v1h-1zM484 97h1v1h-1zM484 148h1v1h-1zM484 157h1v1h-1zM484 173h1v1h-1zM484 241h1v4h-1zM484 354h1v4h-1zM484 425h1v1h-1zM484 441h1v1h-1zM484 449h1v2h-1zM484 468h1v1h-1zM485 85h1v1h-1zM485 95h1v2h-1zM485 149h1v2h-1zM485 156h1v1h-1zM485 174h1v1h-1zM485 245h1v3h-1zM485 351h1v3h-1zM485 424h1v1h-1zM485 442h1v1h-1zM485 448h1v1h-1zM485 469h1v1h-1zM485 513h1v1h-1zM486 86h1v1h-1zM486 94h1v1h-1zM486 151h1v1h-1zM486 175h1v2h-1zM486 248h1v3h-1zM486 348h1v3h-1zM486 422h1v2h-1zM486 447h1v1h-1zM486 470h1v1h-1zM486 512h1v1h-1zM487 93h1v1h-1zM487 152h1v1h-1zM487 177h1v1h-1zM487 251h1v3h-1zM487 345h1v3h-1zM487 420h1v2h-1zM487 446h1v1h-1zM487 471h1v1h-1zM488 92h1v1h-1zM488 153h1v2h-1zM488 179h1v2h-1zM488 254h1v4h-1zM488 341h1v4h-1zM488 418h1v1h-1zM488 444h1v2h-1zM488 472h1v1h-1zM489 88h1v1h-1zM489 91h1v1h-1zM489 155h1v1h-1zM489 181h1v1h-1zM489 258h1v5h-1zM489 336h1v5h-1zM489 417h1v1h-1zM489 443h1v1h-1zM489 473h1v1h-1zM489 510h1v1h-1zM490 89h1v1h-1zM490 156h1v1h-1zM490 182h1v2h-1zM490 263h1v6h-1zM490 329h1v7h-1zM490 415h1v2h-1zM490 442h1v1h-1zM490 474h1v1h-1zM490 509h1v1h-1zM491 157h1v2h-1zM491 184h1v1h-1zM491 269h1v7h-1zM491 323h1v6h-1zM491 414h1v1h-1zM491 440h1v2h-1zM491 475h1v1h-1zM491 508h1v1h-1zM492 91h1v1h-1zM492 159h1v1h-1zM492 185h1v2h-1zM492 276h1v7h-1zM492 316h1v7h-1zM492 412h1v2h-1zM492 421h1v1h-1zM492 439h1v1h-1zM492 507h1v1h-1zM493 92h1v1h-1zM493 160h1v2h-1zM493 175h1v1h-1zM493 187h1v1h-1zM493 283h1v16h-1zM493 300h1v16h-1zM493 411h1v1h-1zM493 422h1v1h-1zM493 437h1v2h-1zM493 506h1v1h-1zM494 93h1v1h-1zM494 162h1v1h-1zM494 188h1v2h-1zM494 409h1v2h-1zM494 436h1v1h-1zM494 477h1v1h-1zM494 505h1v1h-1zM495 94h1v1h-1zM495 163h1v1h-1zM495 190h1v2h-1zM495 407h1v2h-1zM495 435h1v1h-1zM495 478h1v1h-1zM495 504h1v1h-1zM496 95h1v1h-1zM496 164h1v2h-1zM496 192h1v2h-1zM496 405h1v2h-1zM496 424h1v1h-1zM496 433h1v2h-1zM496 479h1v1h-1zM496 503h1v1h-1zM497 96h1v1h-1zM497 166h1v1h-1zM497 194h1v1h-1zM497 403h1v2h-1zM497 425h1v1h-1zM497 432h1v1h-1zM497 480h1v1h-1zM497 502h1v1h-1zM498 97h1v1h-1zM498 167h1v2h-1zM498 196h1v2h-1zM498 401h1v2h-1zM498 430h1v2h-1zM498 481h1v1h-1zM498 501h1v1h-1zM499 98h1v1h-1zM499 169h1v1h-1zM499 198h1v2h-1zM499 399h1v2h-1zM499 429h1v1h-1zM499 482h1v1h-1zM499 500h1v1h-1zM500 99h1v1h-1zM500 170h1v1h-1zM500 200h1v2h-1zM500 397h1v2h-1zM500 428h1v1h-1zM500 483h1v1h-1zM500 499h1v1h-1zM501 100h1v1h-1zM501 172h1v1h-1zM501 202h1v2h-1zM501 395h1v2h-1zM501 426h1v1h-1zM501 484h1v1h-1zM501 498h1v1h-1zM502 101h1v1h-1zM502 173h1v1h-1zM502 204h1v2h-1zM502 393h1v2h-1zM502 425h1v1h-1zM502 497h1v1h-1zM503 102h1v1h-1zM503 174h1v2h-1zM503 206h1v2h-1zM503 391h1v2h-1zM503 405h1v1h-1zM503 423h1v2h-1zM503 496h1v1h-1zM504 103h1v1h-1zM504 176h1v2h-1zM504 208h1v2h-1zM504 389h1v1h-1zM504 421h1v2h-1zM504 486h1v1h-1zM504 495h1v1h-1zM505 104h1v1h-1zM505 178h1v2h-1zM505 210h1v2h-1zM505 387h1v2h-1zM505 419h1v2h-1zM505 487h1v1h-1zM505 494h1v1h-1zM506 105h1v1h-1zM506 180h1v1h-1zM506 212h1v1h-1zM506 386h1v1h-1zM506 418h1v1h-1zM506 488h1v1h-1zM506 493h1v1h-1zM507 106h1v1h-1zM507 181h1v2h-1zM507 214h1v3h-1zM507 381h1v4h-1zM507 416h1v2h-1zM507 489h1v1h-1zM507 492h1v1h-1zM508 107h1v1h-1zM508 183h1v2h-1zM508 217h1v4h-1zM508 377h1v4h-1zM508 414h1v2h-1zM508 491h1v1h-1zM509 108h1v1h-1zM509 185h1v2h-1zM509 221h1v4h-1zM509 374h1v3h-1zM509 412h1v2h-1zM510 109h1v1h-1zM510 187h1v1h-1zM510 225h1v2h-1zM510 372h1v2h-1zM510 410h1v2h-1zM510 489h1v1h-1zM511 110h1v1h-1zM511 188h1v1h-1zM511 227h1v2h-1zM511 370h1v2h-1zM511 408h1v1h-1zM511 487h1v2h-1zM512 111h1v2h-1zM512 190h1v2h-1zM512 229h1v3h-1zM512 367h1v3h-1zM512 406h1v2h-1zM512 486h1v1h-1zM513 113h1v1h-1zM513 192h1v2h-1zM513 233h1v3h-1zM513 362h1v4h-1zM513 404h1v2h-1zM513 485h1v1h-1zM514 114h1v1h-1zM514 194h1v3h-1zM514 236h1v4h-1zM514 359h1v3h-1zM514 402h1v2h-1zM514 483h1v2h-1zM515 115h1v2h-1zM515 197h1v2h-1zM515 240h1v4h-1zM515 355h1v4h-1zM515 400h1v2h-1zM515 482h1v1h-1zM516 117h1v1h-1zM516 199h1v2h-1zM516 244h1v3h-1zM516 351h1v4h-1zM516 398h1v2h-1zM516 481h1v1h-1zM517 118h1v1h-1zM517 201h1v2h-1zM517 247h1v4h-1zM517 348h1v3h-1zM517 395h1v3h-1zM517 480h1v1h-1zM518 119h1v1h-1zM518 203h1v2h-1zM518 252h1v3h-1zM518 343h1v4h-1zM518 393h1v2h-1zM518 479h1v1h-1zM519 120h1v1h-1zM519 205h1v2h-1zM519 255h1v4h-1zM519 339h1v4h-1zM519 391h1v2h-1zM519 478h1v1h-1zM520 121h1v1h-1zM520 207h1v1h-1zM520 259h1v6h-1zM520 334h1v5h-1zM520 389h1v1h-1zM520 477h1v1h-1zM521 122h1v1h-1zM521 209h1v3h-1zM521 265h1v5h-1zM521 271h1v1h-1zM521 326h1v2h-1zM521 329h1v5h-1zM521 387h1v2h-1zM521 476h1v1h-1zM522 123h1v1h-1zM522 212h1v2h-1zM522 272h1v16h-1zM522 310h1v16h-1zM522 384h1v3h-1zM522 475h1v1h-1zM523 124h1v1h-1zM523 214h1v3h-1zM523 288h1v2h-1zM523 291h1v8h-1zM523 300h1v8h-1zM523 309h1v1h-1zM523 382h1v2h-1zM523 474h1v1h-1zM524 125h1v1h-1zM524 217h1v3h-1zM524 379h1v3h-1zM524 472h1v2h-1zM525 126h1v2h-1zM525 220h1v4h-1zM525 375h1v4h-1zM525 471h1v1h-1zM526 128h1v1h-1zM526 224h1v3h-1zM526 372h1v3h-1zM526 470h1v1h-1zM527 129h1v1h-1zM527 369h1v1h-1zM527 371h1v1h-1zM527 468h1v2h-1zM528 130h1v2h-1zM528 229h1v3h-1zM528 367h1v2h-1zM528 467h1v1h-1zM529 132h1v1h-1zM529 232h1v4h-1zM529 363h1v4h-1zM529 466h1v1h-1zM530 133h1v2h-1zM530 236h1v4h-1zM530 359h1v4h-1zM530 464h1v2h-1zM531 135h1v1h-1zM531 240h1v4h-1zM531 354h1v5h-1zM531 462h1v2h-1zM532 136h1v2h-1zM532 244h1v4h-1zM532 351h1v3h-1zM532 461h1v1h-1zM533 138h1v2h-1zM533 249h1v5h-1zM533 344h1v6h-1zM533 459h1v2h-1zM534 140h1v1h-1zM534 254h1v6h-1zM534 338h1v6h-1zM534 458h1v1h-1zM535 141h1v2h-1zM535 260h1v4h-1zM535 334h1v4h-1zM535 456h1v2h-1zM536 143h1v1h-1zM536 264h1v4h-1zM536 269h1v1h-1zM536 328h1v2h-1zM536 331h1v3h-1zM536 455h1v1h-1zM537 144h1v2h-1zM537 270h1v17h-1zM537 311h1v17h-1zM537 453h1v2h-1zM538 146h1v1h-1zM538 287h1v2h-1zM538 290h1v19h-1zM538 310h1v1h-1zM538 452h1v1h-1zM539 147h1v2h-1zM539 450h1v2h-1zM540 149h1v1h-1zM540 449h1v1h-1zM541 150h1v2h-1zM541 447h1v2h-1zM542 152h1v1h-1zM542 445h1v2h-1zM543 153h1v2h-1zM543 444h1v1h-1zM544 155h1v2h-1zM544 442h1v2h-1zM545 157h1v1h-1zM545 441h1v1h-1zM546 158h1v2h-1zM546 439h1v2h-1zM547 160h1v2h-1zM547 437h1v2h-1zM548 162h1v2h-1zM548 435h1v2h-1zM549 164h1v2h-1zM549 433h1v2h-1zM550 166h1v2h-1zM550 431h1v2h-1zM551 168h1v2h-1zM551 429h1v2h-1zM552 170h1v2h-1zM552 427h1v2h-1zM553 172h1v2h-1zM553 425h1v2h-1zM554 174h1v3h-1zM554 422h1v3h-1zM555 177h1v2h-1zM555 420h1v2h-1zM556 179h1v2h-1zM556 418h1v2h-1zM557 181h1v2h-1zM557 416h1v2h-1zM558 183h1v3h-1zM558 413h1v3h-1zM559 186h1v2h-1zM559 411h1v2h-1zM560 188h1v2h-1zM560 409h1v2h-1zM561 190h1v2h-1zM561 407h1v2h-1zM562 192h1v3h-1zM562 404h1v3h-1zM563 195h1v2h-1zM563 402h1v2h-1zM564 197h1v2h-1zM564 400h1v2h-1zM565 199h1v2h-1zM565 398h1v2h-1zM566 201h1v3h-1zM566 395h1v3h-1zM567 204h1v3h-1zM567 391h1v4h-1zM568 207h1v4h-1zM568 388h1v3h-1zM569 211h1v3h-1zM569 385h1v3h-1zM570 215h1v2h-1zM570 382h1v3h-1zM571 217h1v3h-1zM571 379h1v3h-1zM572 220h1v3h-1zM572 376h1v3h-1zM573 223h1v3h-1zM573 372h1v4h-1zM574 226h1v4h-1zM574 369h1v3h-1zM575 230h1v4h-1zM575 365h1v4h-1zM576 234h1v4h-1zM576 361h1v4h-1zM577 238h1v5h-1zM577 356h1v4h-1zM578 243h1v5h-1zM578 351h1v5h-1zM579 248h1v7h-1zM579 343h1v8h-1zM580 255h1v10h-1zM580 333h1v10h-1zM581 265h1v10h-1zM581 323h1v10h-1zM582 275h1v10h-1zM582 313h1v10h-1zM583 285h1v28h-1z"/>
</svg>
<svg width="0" height="0" style="position:absolute"><defs><filter id="thr" x="0" y="0" width="100%" height="100%" color-interpolation-filters="sRGB"><feComponentTransfer><feFuncA type="table" tableValues="0 0.04 0.14 0.32 0.56 0.8 0.95 1 1"/></feComponentTransfer></filter></defs></svg>
<svg width="0" height="0" style="position:absolute"><defs><filter id="thr2" x="0" y="0" width="100%" height="100%" color-interpolation-filters="sRGB"><feComponentTransfer><feFuncA type="table" tableValues="0 0 0.02 0.1 0.3 0.62 0.9 1 1"/></feComponentTransfer></filter></defs></svg>
<div id="tx" style="filter:url(#thr)">
<div class="t c15" style="left:606px;top:7px">Astrolog 5.40</div>
<div class="t c7" style="left:606px;top:17px">&quot;Anonymous&quot;</div>
<div class="t c7" style="left:606px;top:27px">Tue July 15, 1980</div>
<div class="t c7" style="left:606px;top:37px"> 6:00pm (ST +8:00 GMT)</div>
<div class="t c7" style="left:606px;top:47px">&quot;Taipei&quot;</div>
<div class="t c7" style="left:606px;top:57px">121°31E 25°03N</div>
<div class="t c7" style="left:606px;top:67px">Placidus houses.</div>
<div class="t c7" style="left:606px;top:77px">Tropical, Geocentric.</div>
<div class="t c7" style="left:606px;top:87px">Julian Day = 2444435.9167</div>
<div class="t c9" style="left:606px;top:107px"> 1st house: </div>
<div class="t c11" style="left:678px;top:107px">12Cap29</div>
<div class="t c11" style="left:606px;top:117px"> 2nd house: </div>
<div class="t c10" style="left:678px;top:117px">17Aqu29</div>
<div class="t c10" style="left:606px;top:127px"> 3rd house: </div>
<div class="t c12" style="left:678px;top:127px">24Pis05</div>
<div class="t c12" style="left:606px;top:137px"> 4th house: </div>
<div class="t c9" style="left:678px;top:137px">26Ari52</div>
<div class="t c9" style="left:606px;top:147px"> 5th house: </div>
<div class="t c11" style="left:678px;top:147px">24Tau14</div>
<div class="t c11" style="left:606px;top:157px"> 6th house: </div>
<div class="t c10" style="left:678px;top:157px">18Gem21</div>
<div class="t c10" style="left:606px;top:167px"> 7th house: </div>
<div class="t c12" style="left:678px;top:167px">12Can29</div>
<div class="t c12" style="left:606px;top:177px"> 8th house: </div>
<div class="t c9" style="left:678px;top:177px">17Leo29</div>
<div class="t c9" style="left:606px;top:187px"> 9th house: </div>
<div class="t c11" style="left:678px;top:187px">24Vir05</div>
<div class="t c11" style="left:606px;top:197px">10th house: </div>
<div class="t c10" style="left:678px;top:197px">26Lib52</div>
<div class="t c10" style="left:606px;top:207px">11th house: </div>
<div class="t c12" style="left:678px;top:207px">24Sco14</div>
<div class="t c12" style="left:606px;top:217px">12th house: </div>
<div class="t c9" style="left:678px;top:217px">18Sag21</div>
<div class="t c9" style="left:606px;top:237px"> Sun: </div>
<div class="t c12" style="left:642px;top:237px">23Can04</div>
<div class="t c7" style="left:696px;top:237px">- 0°00'</div>
<div class="t c12" style="left:606px;top:247px">Moon: </div>
<div class="t c9" style="left:642px;top:247px">29Leo53</div>
<div class="t c7" style="left:696px;top:247px">+ 0°52'</div>
<div class="t c10" style="left:606px;top:257px">Merc: </div>
<div class="t c12" style="left:642px;top:257px">17Can24</div>
<div class="t c15" style="left:684px;top:257px">R</div>
<div class="t c7" style="left:696px;top:257px">- 4°55'</div>
<div class="t c10" style="left:606px;top:267px">Venu: </div>
<div class="t c10" style="left:642px;top:267px">17Gem24</div>
<div class="t c7" style="left:696px;top:267px">- 5°02'</div>
<div class="t c9" style="left:606px;top:277px">Mars: </div>
<div class="t c10" style="left:642px;top:277px"> 2Lib38</div>
<div class="t c7" style="left:696px;top:277px">+ 0°18'</div>
<div class="t c9" style="left:606px;top:287px">Jupi: </div>
<div class="t c11" style="left:642px;top:287px"> 8Vir30</div>
<div class="t c7" style="left:696px;top:287px">+ 1°04'</div>
<div class="t c11" style="left:606px;top:297px">Satu: </div>
<div class="t c11" style="left:642px;top:297px">22Vir33</div>
<div class="t c7" style="left:696px;top:297px">+ 2°08'</div>
<div class="t c10" style="left:606px;top:307px">Uran: </div>
<div class="t c12" style="left:642px;top:307px">21Sco36</div>
<div class="t c15" style="left:684px;top:307px">R</div>
<div class="t c7" style="left:696px;top:307px">+ 0°16'</div>
<div class="t c12" style="left:606px;top:317px">Nept: </div>
<div class="t c9" style="left:642px;top:317px">20Sag28</div>
<div class="t c15" style="left:684px;top:317px">R</div>
<div class="t c7" style="left:696px;top:317px">+ 1°24'</div>
<div class="t c12" style="left:606px;top:327px">Plut: </div>
<div class="t c10" style="left:642px;top:327px">19Lib03</div>
<div class="t c7" style="left:696px;top:327px">+17°06'</div>
<div class="t c6" style="left:606px;top:337px">Node: </div>
<div class="t c9" style="left:642px;top:337px">21Leo30</div>
<div class="t c15" style="left:684px;top:337px">R</div>
<div class="t c7" style="left:696px;top:337px">+ 0°00'</div>
<div class="t c7" style="left:606px;top:357px">Fire: 3, Earth: 3,</div>
<div class="t c7" style="left:606px;top:367px">Air : 4, Water: 3</div>
<div class="t c7" style="left:606px;top:377px">Car: 6, Fix: 3, Mut: 4</div>
<div class="t c7" style="left:606px;top:387px">Yang: 7, Yin: 6</div>
<div class="t c7" style="left:606px;top:397px">M: 10, N: 1, A: 2, D: 9</div>
<div class="t c7" style="left:606px;top:407px">Ang: 3, Suc: 5, Cad: 3</div>
<div class="t c7" style="left:606px;top:417px">Learn: 7, Share: 6</div>
</div>
<div id="tn" class="tx" style="filter:url(#thr2)">
<div class="n c9" style="left:79.5px;top:357px">1</div>
<div class="n c11" style="left:154.5px;top:462px">2</div>
<div class="n c10" style="left:272.5px;top:504px">3</div>
<div class="n c12" style="left:377.5px;top:479px">4</div>
<div class="n c9" style="left:448.5px;top:418px">5</div>
<div class="n c11" style="left:484.5px;top:337px">6</div>
<div class="n c10" style="left:479.5px;top:231px">7</div>
<div class="n c12" style="left:404.5px;top:126px">8</div>
<div class="n c9" style="left:286.5px;top:84px">9</div>
<div class="n c11" style="left:181.5px;top:109px">10</div>
<div class="n c10" style="left:110.5px;top:170px">11</div>
<div class="n c12" style="left:74.5px;top:251px">12</div>
<div class="g c11" style="left:255.5px;top:125px;letter-spacing:1.5px;text-indent:1.5px;transform:scale(0.47,1)">MC</div>
<div class="g c9" style="left:118.8px;top:299px">Asc</div>
</div>
</div>
</body></html>
